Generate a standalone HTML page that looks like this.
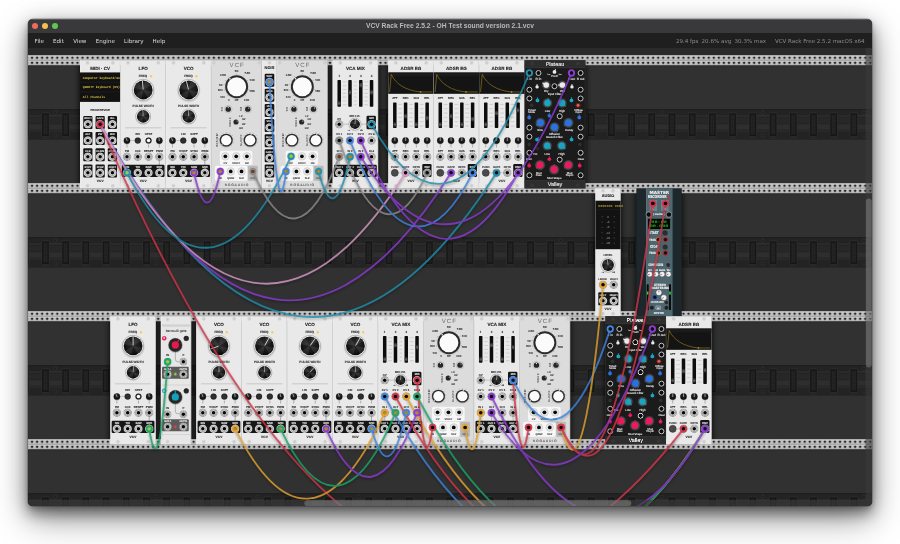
<!DOCTYPE html>
<html lang="en"><head><meta charset="utf-8"><title>VCV Rack Free 2.5.2 - OH Test sound version 2.1.vcv</title>
<style>
html,body{margin:0;padding:0;background:#fff;width:900px;height:544px;overflow:hidden}
.win{position:absolute;left:28px;top:19px;width:844px;height:487.4px;border-radius:5px 5px 4.5px 4.5px;overflow:hidden;background:#2f2f2f;
 box-shadow:0 0 0 .5px rgba(0,0,0,.35),0 8px 12px rgba(0,0,0,.3),0 14px 34px rgba(0,0,0,.36),0 5px 22px rgba(0,0,0,.26),0 2px 5px rgba(0,0,0,.2)}
.title{position:absolute;left:0;top:0;width:844px;height:14px;background:#39393b;z-index:3;border-top:.5px solid #5a5a5c;box-sizing:border-box;will-change:transform}
.title .t{position:absolute;left:0;width:844px;top:2.3px;text-align:center;font:bold 6.7px "Liberation Sans",sans-serif;color:#b9b9bb;letter-spacing:.02px;white-space:nowrap}
.tl{position:absolute;top:3.3px;width:6.2px;height:6.2px;border-radius:50%}
.menu{position:absolute;left:0;top:14px;width:844px;height:15px;background:#1f1f1f;z-index:3;font:5.55px "DejaVu Sans","Liberation Sans",sans-serif;color:#dedede;white-space:nowrap;will-change:transform}
.menu span{position:absolute;top:4.6px}
.menu .r{color:#8d8d8d}
</style></head><body>
<div class="win">
<svg width="844" height="487.4" viewBox="28 19 844 487.4" font-family="Liberation Sans, sans-serif" font-weight="bold" text-anchor="middle" fill="#333" style="position:absolute;left:0;top:0;text-rendering:geometricPrecision;will-change:transform">

<defs>
<radialGradient id="pj"><stop offset="0" stop-color="#d9d9d9"/><stop offset=".46" stop-color="#d9d9d9"/><stop offset=".62" stop-color="#a8a8a8"/><stop offset=".78" stop-color="#d2d2d2"/><stop offset=".9" stop-color="#9a9a9a"/><stop offset="1" stop-color="#bdbdbd"/></radialGradient>
<radialGradient id="pjD"><stop offset="0" stop-color="#e6e6e6"/><stop offset=".46" stop-color="#e6e6e6"/><stop offset=".62" stop-color="#b4b4b4"/><stop offset=".8" stop-color="#e2e2e2"/><stop offset=".93" stop-color="#c4c4c4"/><stop offset="1" stop-color="#8a8a8a"/></radialGradient>
<radialGradient id="shad"><stop offset="0" stop-color="#000" stop-opacity=".55"/><stop offset=".7" stop-color="#000" stop-opacity=".3"/><stop offset="1" stop-color="#000" stop-opacity="0"/></radialGradient>
<radialGradient id="shad2"><stop offset="0" stop-color="#000" stop-opacity=".4"/><stop offset=".8" stop-color="#000" stop-opacity=".16"/><stop offset="1" stop-color="#000" stop-opacity="0"/></radialGradient>
<radialGradient id="kb" cx=".5" cy=".4" r=".6"><stop offset="0" stop-color="#2e2e2e"/><stop offset=".7" stop-color="#161616"/><stop offset="1" stop-color="#080808"/></radialGradient>
<radialGradient id="vk"><stop offset="0" stop-color="#6e6e6e"/><stop offset=".75" stop-color="#4a4a4a"/><stop offset="1" stop-color="#2c2c2c"/></radialGradient>
<linearGradient id="railg" x1="0" y1="0" x2="0" y2="1"><stop offset="0" stop-color="#dedede"/><stop offset=".18" stop-color="#c7c7c7"/><stop offset=".85" stop-color="#bebebe"/><stop offset="1" stop-color="#a4a4a4"/></linearGradient>
<pattern id="rail" x="80" y="0" width="5.05" height="5.06" patternUnits="userSpaceOnUse"><rect width="5.05" height="5.06" fill="url(#railg)"/><rect x="1.48" y="1.45" width="2.1" height="2.1" rx=".55" fill="#262626"/></pattern>
<filter id="msh" x="-20%" y="-10%" width="140%" height="125%"><feGaussianBlur stdDeviation="2.6"/></filter>
<filter id="csh" x="-5%" y="-5%" width="110%" height="115%"><feGaussianBlur stdDeviation="1.2"/></filter>
<g id="mLFO"><rect x="0" y="0" width="135" height="380" rx="0" fill="#e9e9e9" /><rect x="0" y="0" width="1.3" height="380" rx="0" fill="#f1f1f1" /><rect x="133.5" y="0" width="1.5" height="380" rx="0" fill="#bcbcbc" /><use href="#s" x="22.5" y="7.5"/><use href="#s" x="22.5" y="372.5"/><use href="#s" x="112.5" y="7.5"/><use href="#s" x="112.5" y="372.5"/><text x="67.5" y="27.73" font-size="13.52" fill="#1c1c1c" stroke="#1c1c1c" stroke-width=".3">LFO</text><text x="66.8" y="50.69" font-size="9.11" stroke="#333" stroke-width=".3">FREQ</text><circle cx="90.8" cy="47.5" r="4.4" fill="#f6d24a" opacity=".35"/><circle cx="90.8" cy="47.5" r="2.8" fill="#f5c93e" /><text x="67.5" y="137.19" font-size="9.11" stroke="#333" stroke-width=".3">PULSE WIDTH</text><line x1="14" y1="200.5" x2="121" y2="200.5" stroke="#9a9a9a" stroke-width="1.3" /><text x="51.5" y="222.4" font-size="8.28" stroke="#333" stroke-width=".3">INV</text><text x="83.5" y="222.4" font-size="8.28" stroke="#333" stroke-width=".3">OFST</text><line x1="29" y1="238" x2="42" y2="238" stroke="#777" stroke-width="1" /><circle cx="19.5" cy="239.5" r="12" fill="url(#shad)" /><circle cx="19.5" cy="238" r="9.4" fill="url(#kb)" /><line x1="19.5" y1="238" x2="16.56" y2="229.92" stroke="#f0f0f0" stroke-width="1.6" stroke-linecap="round"/><use href="#b" x="51.5" y="238"/><use href="#bl" x="83.5" y="238"/><circle cx="115.5" cy="239.5" r="12" fill="url(#shad)" /><circle cx="115.5" cy="238" r="9.4" fill="url(#kb)" /><line x1="115.5" y1="238" x2="114.01" y2="229.53" stroke="#f0f0f0" stroke-width="1.6" stroke-linecap="round"/><line x1="19.5" y1="250" x2="19.5" y2="259" stroke="#555" stroke-width="1.2" /><line x1="83.5" y1="250" x2="83.5" y2="259" stroke="#555" stroke-width="1.2" /><line x1="115.5" y1="250" x2="115.5" y2="259" stroke="#555" stroke-width="1.2" /><text x="19.5" y="271.6" font-size="8.28" stroke="#333" stroke-width=".3">FM</text><use href="#p" x="19.5" y="286"/><text x="51.5" y="271.6" font-size="8.28" stroke="#333" stroke-width=".3">CLK</text><use href="#p" x="51.5" y="286"/><text x="83.5" y="271.6" font-size="8.28" stroke="#333" stroke-width=".3">RESET</text><use href="#p" x="83.5" y="286"/><text x="115.5" y="271.6" font-size="8.28" stroke="#333" stroke-width=".3">PWM</text><use href="#p" x="115.5" y="286"/><line x1="115.5" y1="298" x2="115.5" y2="311" stroke="#444" stroke-width="1.2" /><rect x="4" y="310" width="127" height="36.5" rx="3.5" fill="#161616" /><text x="19.5" y="319.4" font-size="8" fill="#e8e8e8" stroke="#e8e8e8" stroke-width=".3">SIN</text><use href="#pd" x="19.5" y="334"/><text x="51.5" y="319.4" font-size="8" fill="#e8e8e8" stroke="#e8e8e8" stroke-width=".3">TRI</text><use href="#pd" x="51.5" y="334"/><text x="83.5" y="319.4" font-size="8" fill="#e8e8e8" stroke="#e8e8e8" stroke-width=".3">SAW</text><use href="#pd" x="83.5" y="334"/><text x="115.5" y="319.4" font-size="8" fill="#e8e8e8" stroke="#e8e8e8" stroke-width=".3">SQR</text><use href="#pd" x="115.5" y="334"/><text x="67.5" y="360.32" font-size="9.5" fill="#222" letter-spacing="0.4" stroke="#222" stroke-width=".3">VCV</text></g><g id="mVCO"><rect x="0" y="0" width="135" height="380" rx="0" fill="#e9e9e9" /><rect x="0" y="0" width="1.3" height="380" rx="0" fill="#f1f1f1" /><rect x="133.5" y="0" width="1.5" height="380" rx="0" fill="#bcbcbc" /><use href="#s" x="22.5" y="7.5"/><use href="#s" x="22.5" y="372.5"/><use href="#s" x="112.5" y="7.5"/><use href="#s" x="112.5" y="372.5"/><text x="67.5" y="27.73" font-size="13.52" fill="#1c1c1c" stroke="#1c1c1c" stroke-width=".3">VCO</text><text x="66.8" y="50.69" font-size="9.11" stroke="#333" stroke-width=".3">FREQ</text><circle cx="90.8" cy="47.5" r="4.4" fill="#f6d24a" opacity=".35"/><circle cx="90.8" cy="47.5" r="2.8" fill="#f5c93e" /><text x="67.5" y="137.19" font-size="9.11" stroke="#333" stroke-width=".3">PULSE WIDTH</text><line x1="14" y1="200.5" x2="121" y2="200.5" stroke="#9a9a9a" stroke-width="1.3" /><text x="51.5" y="222.4" font-size="8.28" stroke="#333" stroke-width=".3">LIN</text><text x="83.5" y="222.4" font-size="8.28" stroke="#333" stroke-width=".3">SOFT</text><line x1="29" y1="238" x2="42" y2="238" stroke="#777" stroke-width="1" /><circle cx="19.5" cy="239.5" r="12" fill="url(#shad)" /><circle cx="19.5" cy="238" r="9.4" fill="url(#kb)" /><line x1="19.5" y1="238" x2="16.56" y2="229.92" stroke="#f0f0f0" stroke-width="1.6" stroke-linecap="round"/><use href="#b" x="51.5" y="238"/><use href="#b" x="83.5" y="238"/><circle cx="115.5" cy="239.5" r="12" fill="url(#shad)" /><circle cx="115.5" cy="238" r="9.4" fill="url(#kb)" /><line x1="115.5" y1="238" x2="114.01" y2="229.53" stroke="#f0f0f0" stroke-width="1.6" stroke-linecap="round"/><line x1="19.5" y1="250" x2="19.5" y2="259" stroke="#555" stroke-width="1.2" /><line x1="83.5" y1="250" x2="83.5" y2="259" stroke="#555" stroke-width="1.2" /><line x1="115.5" y1="250" x2="115.5" y2="259" stroke="#555" stroke-width="1.2" /><text x="19.5" y="271.6" font-size="8.28" stroke="#333" stroke-width=".3">FM</text><use href="#p" x="19.5" y="286"/><text x="51.5" y="271.6" font-size="8.28" stroke="#333" stroke-width=".3">V/OCT</text><use href="#p" x="51.5" y="286"/><text x="83.5" y="271.6" font-size="8.28" stroke="#333" stroke-width=".3">SYNC</text><use href="#p" x="83.5" y="286"/><text x="115.5" y="271.6" font-size="8.28" stroke="#333" stroke-width=".3">PWM</text><use href="#p" x="115.5" y="286"/><line x1="115.5" y1="298" x2="115.5" y2="311" stroke="#444" stroke-width="1.2" /><rect x="4" y="310" width="127" height="36.5" rx="3.5" fill="#161616" /><text x="19.5" y="319.4" font-size="8" fill="#e8e8e8" stroke="#e8e8e8" stroke-width=".3">SIN</text><use href="#pd" x="19.5" y="334"/><text x="51.5" y="319.4" font-size="8" fill="#e8e8e8" stroke="#e8e8e8" stroke-width=".3">TRI</text><use href="#pd" x="51.5" y="334"/><text x="83.5" y="319.4" font-size="8" fill="#e8e8e8" stroke="#e8e8e8" stroke-width=".3">SAW</text><use href="#pd" x="83.5" y="334"/><text x="115.5" y="319.4" font-size="8" fill="#e8e8e8" stroke="#e8e8e8" stroke-width=".3">SQR</text><use href="#pd" x="115.5" y="334"/><text x="67.5" y="360.32" font-size="9.5" fill="#222" letter-spacing="0.4" stroke="#222" stroke-width=".3">VCV</text></g><g id="mBVCF"><rect x="0" y="0" width="150" height="380" rx="0" fill="#dcdcdc" /><rect x="0" y="0" width="1.2" height="380" rx="0" fill="#eeeeee" /><rect x="148.5" y="0" width="1.5" height="380" rx="0" fill="#adadad" /><use href="#s" x="7.5" y="7.5"/><use href="#s" x="7.5" y="372.5"/><use href="#s" x="142.5" y="7.5"/><use href="#s" x="142.5" y="372.5"/><text x="76.5" y="18.8" font-size="18" font-weight="normal" fill="#6a6a6a" letter-spacing="3">VCF</text><line x1="49.54" y1="103.86" x2="47.07" y2="106.33" stroke="#555" stroke-width="1" /><text x="52" y="121.9" font-size="8.28" fill="#444" stroke="#444" stroke-width=".3">0</text><line x1="40.23" y1="87.72" x2="36.85" y2="88.62" stroke="#555" stroke-width="1" /><text x="33" y="111" font-size="8.28" fill="#444" stroke="#444" stroke-width=".3">100</text><line x1="39.55" y1="72.15" x2="36.1" y2="71.54" stroke="#555" stroke-width="1" /><text x="26.5" y="91.2" font-size="8.28" fill="#444" stroke="#444" stroke-width=".3">500</text><line x1="43.21" y1="61.5" x2="40.12" y2="59.86" stroke="#555" stroke-width="1" /><text x="28" y="74.9" font-size="8.28" fill="#444" stroke="#444" stroke-width=".3">1K</text><line x1="52.84" y1="50.03" x2="50.68" y2="47.27" stroke="#555" stroke-width="1" /><text x="34.4" y="46.7" font-size="8.28" fill="#444" stroke="#444" stroke-width=".3">2.5K</text><line x1="75" y1="42.4" x2="75" y2="38.9" stroke="#555" stroke-width="1" /><text x="75" y="33.3" font-size="8.28" fill="#444" stroke="#444" stroke-width=".3">5K</text><line x1="94.61" y1="48.21" x2="96.51" y2="45.27" stroke="#555" stroke-width="1" /><text x="107" y="40.3" font-size="8.28" fill="#444" stroke="#444" stroke-width=".3">7.5K</text><line x1="106.18" y1="60.4" x2="109.21" y2="58.65" stroke="#555" stroke-width="1" /><text x="121" y="60.5" font-size="8.28" fill="#444" stroke="#444" stroke-width=".3">10K</text><line x1="110.08" y1="86.5" x2="113.49" y2="87.29" stroke="#555" stroke-width="1" /><text x="121" y="95.2" font-size="8.28" fill="#444" stroke="#444" stroke-width=".3">15K</text><line x1="100.46" y1="103.86" x2="102.93" y2="106.33" stroke="#555" stroke-width="1" /><text x="104.7" y="121.9" font-size="8.28" fill="#444" stroke="#444" stroke-width=".3">20K</text><text x="75" y="121.9" font-size="8.28" fill="#444" stroke="#444" stroke-width=".3">HZ</text><circle cx="75" cy="79.9" r="37" fill="url(#shad)" /><circle cx="75" cy="78.4" r="34" fill="#2b2b2b" /><circle cx="75" cy="78.4" r="28.2" fill="#fbfbfb" /><circle cx="55.01" cy="54.58" r="2.32" fill="#fff" /><text transform="translate(33 145) rotate(-90)" font-size="8.75" fill="#444" >CV</text><circle cx="50" cy="145" r="11.5" fill="none" stroke="#8a8a8a" stroke-width="0.9"/><circle cx="50" cy="145" r="8" fill="#262626" /><circle cx="50" cy="140.4" r="1.7" fill="#fff" /><text transform="translate(92 145) rotate(-90)" font-size="8.75" fill="#444" >FM</text><circle cx="108" cy="145" r="11.5" fill="none" stroke="#8a8a8a" stroke-width="0.9"/><circle cx="108" cy="145" r="8" fill="#262626" /><circle cx="110.96" cy="141.48" r="1.7" fill="#fff" /><text transform="translate(59 183) rotate(-90)" font-size="8.25" fill="#444" letter-spacing="1">MODE</text><circle cx="73" cy="183" r="7.6" fill="#262626" /><circle cx="76.5" cy="180" r="1.5" fill="#fff" /><text x="88" y="168.7" font-size="7.73" fill="#444" stroke="#444" stroke-width=".3">LP</text><text x="96" y="178.7" font-size="7.73" fill="#444" stroke="#444" stroke-width=".3">HP</text><text x="96" y="191.7" font-size="7.73" fill="#444" stroke="#444" stroke-width=".3">BP</text><text x="88" y="202.7" font-size="7.73" fill="#444" stroke="#444" stroke-width=".3">BR</text><text transform="translate(20 237) rotate(-90)" font-size="8.5" fill="#444" letter-spacing="1.2">RES/BW</text><text transform="translate(91 237) rotate(-90)" font-size="8.5" fill="#444" letter-spacing="1.2">SLOPE</text><line x1="28.8" y1="252.2" x2="27.03" y2="253.97" stroke="#555" stroke-width="0.9" /><line x1="23.55" y1="243.64" x2="21.17" y2="244.42" stroke="#555" stroke-width="0.9" /><line x1="22.76" y1="233.64" x2="20.3" y2="233.25" stroke="#555" stroke-width="0.9" /><line x1="26.61" y1="224.36" x2="24.58" y2="222.89" stroke="#555" stroke-width="0.9" /><line x1="34.24" y1="217.84" x2="33.1" y2="215.62" stroke="#555" stroke-width="0.9" /><line x1="44" y1="215.5" x2="44" y2="213" stroke="#555" stroke-width="0.9" /><line x1="53.76" y1="217.84" x2="54.9" y2="215.62" stroke="#555" stroke-width="0.9" /><line x1="61.39" y1="224.36" x2="63.42" y2="222.89" stroke="#555" stroke-width="0.9" /><line x1="65.24" y1="233.64" x2="67.7" y2="233.25" stroke="#555" stroke-width="0.9" /><line x1="64.45" y1="243.64" x2="66.83" y2="244.42" stroke="#555" stroke-width="0.9" /><line x1="59.2" y1="252.2" x2="60.97" y2="253.97" stroke="#555" stroke-width="0.9" /><line x1="99.8" y1="252.2" x2="98.03" y2="253.97" stroke="#555" stroke-width="0.9" /><line x1="94.55" y1="243.64" x2="92.17" y2="244.42" stroke="#555" stroke-width="0.9" /><line x1="93.76" y1="233.64" x2="91.3" y2="233.25" stroke="#555" stroke-width="0.9" /><line x1="97.61" y1="224.36" x2="95.58" y2="222.89" stroke="#555" stroke-width="0.9" /><line x1="105.24" y1="217.84" x2="104.1" y2="215.62" stroke="#555" stroke-width="0.9" /><line x1="115" y1="215.5" x2="115" y2="213" stroke="#555" stroke-width="0.9" /><line x1="124.76" y1="217.84" x2="125.9" y2="215.62" stroke="#555" stroke-width="0.9" /><line x1="132.39" y1="224.36" x2="134.42" y2="222.89" stroke="#555" stroke-width="0.9" /><line x1="136.24" y1="233.64" x2="138.7" y2="233.25" stroke="#555" stroke-width="0.9" /><line x1="135.45" y1="243.64" x2="137.83" y2="244.42" stroke="#555" stroke-width="0.9" /><line x1="130.2" y1="252.2" x2="131.97" y2="253.97" stroke="#555" stroke-width="0.9" /><circle cx="44" cy="238.5" r="22.2" fill="url(#shad)" /><circle cx="44" cy="237" r="19.2" fill="#2b2b2b" /><circle cx="44" cy="237" r="15.2" fill="#fbfbfb" /><circle cx="31.84" cy="249.16" r="1.6" fill="#fff" /><circle cx="115" cy="238.5" r="22.2" fill="url(#shad)" /><circle cx="115" cy="237" r="19.2" fill="#2b2b2b" /><circle cx="115" cy="237" r="15.2" fill="#fbfbfb" /><circle cx="117.99" cy="220.06" r="1.6" fill="#fff" /><rect x="25.2" y="268.6" width="96.5" height="42.2" rx="5" fill="#f7f7f7" /><rect x="10.4" y="313.2" width="96.5" height="44.5" rx="5" fill="#f7f7f7" /><rect x="108.3" y="313.2" width="29.7" height="44.5" rx="4" fill="#b9b9b9" /><use href="#bp" x="41.5" y="285"/><text x="41.5" y="307.2" font-size="7.73" fill="#444" stroke="#444" stroke-width=".3">CV</text><use href="#bp" x="73.7" y="285"/><text x="73.7" y="307.2" font-size="7.73" fill="#444" stroke="#444" stroke-width=".3">V/OCT</text><use href="#bp" x="105.4" y="285"/><text x="105.4" y="307.2" font-size="7.73" fill="#444" stroke="#444" stroke-width=".3">FM</text><use href="#bp" x="26.4" y="330"/><text x="26.4" y="353" font-size="7.73" fill="#444" stroke="#444" stroke-width=".3">IN</text><use href="#bp" x="57.4" y="330"/><text x="57.4" y="353" font-size="7.73" fill="#444" stroke="#444" stroke-width=".3">Q/BW</text><use href="#bp" x="89.5" y="330"/><text x="89.5" y="353" font-size="7.73" fill="#444" stroke="#444" stroke-width=".3">SLP</text><use href="#bp" x="123.1" y="330"/><text x="123.1" y="353" font-size="7.73" fill="#666" stroke="#666" stroke-width=".3">OUT</text><text x="76" y="372.5" font-size="10" font-weight="normal" fill="#5a5a5a" letter-spacing="2.4" stroke="#5a5a5a" stroke-width=".3">BOGAUDIO</text></g><g id="mVCAMIX"><rect x="0" y="0" width="135" height="380" rx="0" fill="#e9e9e9" /><rect x="0" y="0" width="1.3" height="380" rx="0" fill="#f1f1f1" /><rect x="133.5" y="0" width="1.5" height="380" rx="0" fill="#bcbcbc" /><use href="#s" x="22.5" y="7.5"/><use href="#s" x="22.5" y="372.5"/><use href="#s" x="112.5" y="7.5"/><use href="#s" x="112.5" y="372.5"/><text x="67.5" y="27.73" font-size="13.52" fill="#1c1c1c" stroke="#1c1c1c" stroke-width=".3">VCA MIX</text><text x="19.5" y="50.64" font-size="8.97" stroke="#333" stroke-width=".3">1</text><text x="51.5" y="50.64" font-size="8.97" stroke="#333" stroke-width=".3">2</text><text x="83.5" y="50.64" font-size="8.97" stroke="#333" stroke-width=".3">3</text><text x="115.5" y="50.64" font-size="8.97" stroke="#333" stroke-width=".3">4</text><line x1="30" y1="64" x2="41" y2="64" stroke="#aeaeae" stroke-width="1.4" /><line x1="30" y1="75.33" x2="41" y2="75.33" stroke="#aeaeae" stroke-width="1.4" /><line x1="30" y1="86.67" x2="41" y2="86.67" stroke="#aeaeae" stroke-width="1.4" /><line x1="30" y1="98" x2="41" y2="98" stroke="#aeaeae" stroke-width="1.4" /><line x1="30" y1="109.33" x2="41" y2="109.33" stroke="#aeaeae" stroke-width="1.4" /><line x1="30" y1="120.67" x2="41" y2="120.67" stroke="#aeaeae" stroke-width="1.4" /><line x1="30" y1="132" x2="41" y2="132" stroke="#aeaeae" stroke-width="1.4" /><line x1="94" y1="64" x2="105" y2="64" stroke="#aeaeae" stroke-width="1.4" /><line x1="94" y1="75.33" x2="105" y2="75.33" stroke="#aeaeae" stroke-width="1.4" /><line x1="94" y1="86.67" x2="105" y2="86.67" stroke="#aeaeae" stroke-width="1.4" /><line x1="94" y1="98" x2="105" y2="98" stroke="#aeaeae" stroke-width="1.4" /><line x1="94" y1="109.33" x2="105" y2="109.33" stroke="#aeaeae" stroke-width="1.4" /><line x1="94" y1="120.67" x2="105" y2="120.67" stroke="#aeaeae" stroke-width="1.4" /><line x1="94" y1="132" x2="105" y2="132" stroke="#aeaeae" stroke-width="1.4" /><line x1="64" y1="64" x2="71" y2="64" stroke="#aeaeae" stroke-width="1.4" /><line x1="64" y1="75.33" x2="71" y2="75.33" stroke="#aeaeae" stroke-width="1.4" /><line x1="64" y1="86.67" x2="71" y2="86.67" stroke="#aeaeae" stroke-width="1.4" /><line x1="64" y1="98" x2="71" y2="98" stroke="#aeaeae" stroke-width="1.4" /><line x1="64" y1="109.33" x2="71" y2="109.33" stroke="#aeaeae" stroke-width="1.4" /><line x1="64" y1="120.67" x2="71" y2="120.67" stroke="#aeaeae" stroke-width="1.4" /><line x1="64" y1="132" x2="71" y2="132" stroke="#aeaeae" stroke-width="1.4" /><text x="66" y="167.9" font-size="8.28" stroke="#333" stroke-width=".3">MIX LVL</text><text x="19.5" y="175.9" font-size="8.28" stroke="#333" stroke-width=".3">CV</text><line x1="30" y1="189.5" x2="104" y2="189.5" stroke="#8a8a8a" stroke-width="1.2" /><use href="#p" x="19.5" y="189.5"/><circle cx="66.3" cy="190.67" r="20.52" fill="url(#shad2)" /><circle cx="66.3" cy="189.5" r="17.8" fill="#fcfcfc" stroke="#555" stroke-width="1"/><circle cx="66.3" cy="189.5" r="14.6" fill="url(#kb)" /><path d="M66.3 189.5 L80.63 192.29 A14.6 14.6 0 0 1 73.82 202.01 Z" fill="#fff" opacity=".09"/><path d="M66.3 189.5 L63.51 203.83 A14.6 14.6 0 0 1 53.79 197.02 Z" fill="#fff" opacity=".09"/><path d="M66.3 189.5 L51.97 186.71 A14.6 14.6 0 0 1 58.78 176.99 Z" fill="#fff" opacity=".09"/><path d="M66.3 189.5 L69.09 175.17 A14.6 14.6 0 0 1 78.81 181.98 Z" fill="#fff" opacity=".09"/><line x1="66.43" y1="188.05" x2="67.48" y2="175.97" stroke="#f4f4f4" stroke-width="1.4" stroke-linecap="round"/><text x="48" y="208.41" font-size="6.9" stroke="#333" stroke-width=".3">-∞</text><text x="85" y="208.41" font-size="6.9" stroke="#333" stroke-width=".3">+6</text><rect x="100.5" y="164.8" width="28" height="39.6" rx="3.5" fill="#161616" /><text x="115.5" y="175.3" font-size="8" fill="#e8e8e8" stroke="#e8e8e8" stroke-width=".3">MIX</text><use href="#pd" x="115.5" y="189.5"/><text x="19.5" y="222.2" font-size="8" stroke="#333" stroke-width=".3">CV 1</text><use href="#p" x="19.5" y="238"/><text x="19.5" y="271.5" font-size="8" stroke="#333" stroke-width=".3">IN 1</text><use href="#p" x="19.5" y="286"/><line x1="19.5" y1="298" x2="19.5" y2="311" stroke="#666" stroke-width="1" /><text x="51.5" y="222.2" font-size="8" stroke="#333" stroke-width=".3">CV 2</text><use href="#p" x="51.5" y="238"/><text x="51.5" y="271.5" font-size="8" stroke="#333" stroke-width=".3">IN 2</text><use href="#p" x="51.5" y="286"/><line x1="51.5" y1="298" x2="51.5" y2="311" stroke="#666" stroke-width="1" /><text x="83.5" y="222.2" font-size="8" stroke="#333" stroke-width=".3">CV 3</text><use href="#p" x="83.5" y="238"/><text x="83.5" y="271.5" font-size="8" stroke="#333" stroke-width=".3">IN 3</text><use href="#p" x="83.5" y="286"/><line x1="83.5" y1="298" x2="83.5" y2="311" stroke="#666" stroke-width="1" /><text x="115.5" y="222.2" font-size="8" stroke="#333" stroke-width=".3">CV 4</text><use href="#p" x="115.5" y="238"/><text x="115.5" y="271.5" font-size="8" stroke="#333" stroke-width=".3">IN 4</text><use href="#p" x="115.5" y="286"/><line x1="115.5" y1="298" x2="115.5" y2="311" stroke="#666" stroke-width="1" /><rect x="4" y="310" width="127" height="36.5" rx="3.5" fill="#161616" /><text x="19.5" y="319.3" font-size="7.73" fill="#e8e8e8" stroke="#e8e8e8" stroke-width=".3">OUT 1</text><use href="#pd" x="19.5" y="334"/><text x="51.5" y="319.3" font-size="7.73" fill="#e8e8e8" stroke="#e8e8e8" stroke-width=".3">OUT 2</text><use href="#pd" x="51.5" y="334"/><text x="83.5" y="319.3" font-size="7.73" fill="#e8e8e8" stroke="#e8e8e8" stroke-width=".3">OUT 3</text><use href="#pd" x="83.5" y="334"/><text x="115.5" y="319.3" font-size="7.73" fill="#e8e8e8" stroke="#e8e8e8" stroke-width=".3">OUT 4</text><use href="#pd" x="115.5" y="334"/><text x="67.5" y="360.32" font-size="9.5" fill="#222" letter-spacing="0.4" stroke="#222" stroke-width=".3">VCV</text></g><g id="mADSR"><rect x="0" y="0" width="135" height="380" rx="0" fill="#e9e9e9" /><rect x="0" y="0" width="1.3" height="380" rx="0" fill="#f1f1f1" /><rect x="133.5" y="0" width="1.5" height="380" rx="0" fill="#bcbcbc" /><use href="#s" x="22.5" y="7.5"/><use href="#s" x="22.5" y="372.5"/><use href="#s" x="112.5" y="7.5"/><use href="#s" x="112.5" y="372.5"/><text x="67.5" y="27.73" font-size="13.52" fill="#1c1c1c" stroke="#1c1c1c" stroke-width=".3">ADSR EG</text><rect x="0" y="36" width="135" height="63.5" rx="0" fill="#141414" /><rect x="0" y="36" width="135" height="12" rx="0" fill="#1f1f1f" opacity=".6"/><path d="M4 94 L9 42 C 22 70 52 90 96 94 L131 94" fill="none" stroke="#a8891e" stroke-width="1.7"/><circle cx="96" cy="94" r="2.6" fill="#a8891e" /><text x="19.5" y="114.9" font-size="8.28" stroke="#333" stroke-width=".3">ATT</text><text x="51.5" y="114.9" font-size="8.28" stroke="#333" stroke-width=".3">DEC</text><text x="83.5" y="114.9" font-size="8.28" stroke="#333" stroke-width=".3">SUS</text><text x="115.5" y="114.9" font-size="8.28" stroke="#333" stroke-width=".3">REL</text><line x1="30" y1="131" x2="41" y2="131" stroke="#aeaeae" stroke-width="1.4" /><line x1="30" y1="143.8" x2="41" y2="143.8" stroke="#aeaeae" stroke-width="1.4" /><line x1="30" y1="156.6" x2="41" y2="156.6" stroke="#aeaeae" stroke-width="1.4" /><line x1="30" y1="169.4" x2="41" y2="169.4" stroke="#aeaeae" stroke-width="1.4" /><line x1="30" y1="182.2" x2="41" y2="182.2" stroke="#aeaeae" stroke-width="1.4" /><line x1="30" y1="195" x2="41" y2="195" stroke="#aeaeae" stroke-width="1.4" /><line x1="62" y1="131" x2="73" y2="131" stroke="#aeaeae" stroke-width="1.4" /><line x1="62" y1="143.8" x2="73" y2="143.8" stroke="#aeaeae" stroke-width="1.4" /><line x1="62" y1="156.6" x2="73" y2="156.6" stroke="#aeaeae" stroke-width="1.4" /><line x1="62" y1="169.4" x2="73" y2="169.4" stroke="#aeaeae" stroke-width="1.4" /><line x1="62" y1="182.2" x2="73" y2="182.2" stroke="#aeaeae" stroke-width="1.4" /><line x1="62" y1="195" x2="73" y2="195" stroke="#aeaeae" stroke-width="1.4" /><line x1="94" y1="131" x2="105" y2="131" stroke="#aeaeae" stroke-width="1.4" /><line x1="94" y1="143.8" x2="105" y2="143.8" stroke="#aeaeae" stroke-width="1.4" /><line x1="94" y1="156.6" x2="105" y2="156.6" stroke="#aeaeae" stroke-width="1.4" /><line x1="94" y1="169.4" x2="105" y2="169.4" stroke="#aeaeae" stroke-width="1.4" /><line x1="94" y1="182.2" x2="105" y2="182.2" stroke="#aeaeae" stroke-width="1.4" /><line x1="94" y1="195" x2="105" y2="195" stroke="#aeaeae" stroke-width="1.4" /><circle cx="19.5" cy="239.5" r="12" fill="url(#shad)" /><circle cx="19.5" cy="238" r="9.4" fill="url(#kb)" /><line x1="19.5" y1="238" x2="19.5" y2="229.4" stroke="#f0f0f0" stroke-width="1.6" stroke-linecap="round"/><line x1="19.5" y1="250" x2="19.5" y2="259" stroke="#555" stroke-width="1.2" /><circle cx="51.5" cy="239.5" r="12" fill="url(#shad)" /><circle cx="51.5" cy="238" r="9.4" fill="url(#kb)" /><line x1="51.5" y1="238" x2="51.5" y2="229.4" stroke="#f0f0f0" stroke-width="1.6" stroke-linecap="round"/><line x1="51.5" y1="250" x2="51.5" y2="259" stroke="#555" stroke-width="1.2" /><circle cx="83.5" cy="239.5" r="12" fill="url(#shad)" /><circle cx="83.5" cy="238" r="9.4" fill="url(#kb)" /><line x1="83.5" y1="238" x2="83.5" y2="229.4" stroke="#f0f0f0" stroke-width="1.6" stroke-linecap="round"/><line x1="83.5" y1="250" x2="83.5" y2="259" stroke="#555" stroke-width="1.2" /><circle cx="115.5" cy="239.5" r="12" fill="url(#shad)" /><circle cx="115.5" cy="238" r="9.4" fill="url(#kb)" /><line x1="115.5" y1="238" x2="115.5" y2="229.4" stroke="#f0f0f0" stroke-width="1.6" stroke-linecap="round"/><line x1="115.5" y1="250" x2="115.5" y2="259" stroke="#555" stroke-width="1.2" /><text x="19.5" y="271.6" font-size="8.28" stroke="#333" stroke-width=".3">ATT</text><use href="#p" x="19.5" y="286"/><text x="51.5" y="271.6" font-size="8.28" stroke="#333" stroke-width=".3">DEC</text><use href="#p" x="51.5" y="286"/><text x="83.5" y="271.6" font-size="8.28" stroke="#333" stroke-width=".3">SUS</text><use href="#p" x="83.5" y="286"/><text x="115.5" y="271.6" font-size="8.28" stroke="#333" stroke-width=".3">REL</text><use href="#p" x="115.5" y="286"/><rect x="101" y="308" width="27.5" height="38.5" rx="3.5" fill="#161616" /><text x="19.5" y="318.8" font-size="8" stroke="#333" stroke-width=".3">PUSH</text><text x="51.5" y="318.8" font-size="8" stroke="#333" stroke-width=".3">GATE</text><text x="83.5" y="318.8" font-size="8" stroke="#333" stroke-width=".3">RETR</text><text x="115.5" y="318.8" font-size="8" fill="#e8e8e8" stroke="#e8e8e8" stroke-width=".3">ENV</text><circle cx="19.5" cy="335" r="12" fill="url(#shad)" /><circle cx="19.5" cy="334" r="10.4" fill="#4a4a4a" stroke="#2a2a2a" stroke-width="1.4"/><line x1="31" y1="334" x2="40" y2="334" stroke="#777" stroke-width="1" /><line x1="63" y1="334" x2="72" y2="334" stroke="#999" stroke-width="1" /><use href="#p" x="51.5" y="334"/><use href="#p" x="83.5" y="334"/><use href="#pd" x="115.5" y="334"/><text x="67.5" y="360.32" font-size="9.5" fill="#222" letter-spacing="0.4" stroke="#222" stroke-width=".3">VCV</text></g><g id="mPLAT"><rect x="0" y="0" width="180" height="380" rx="0" fill="#1b1b1b" /><rect x="0" y="0" width="180" height="22.3" rx="0" fill="#2d2d2d" /><rect x="0" y="357" width="180" height="23" rx="0" fill="#2d2d2d" /><line x1="0" y1="22.3" x2="180" y2="22.3" stroke="#555" stroke-width="1" /><line x1="0" y1="357" x2="180" y2="357" stroke="#555" stroke-width="1" /><rect x="0" y="0" width="1.3" height="380" rx="0" fill="#3a3a3a" /><rect x="178.7" y="0" width="1.3" height="380" rx="0" fill="#3a3a3a" /><use href="#sd" x="22.5" y="9.5"/><use href="#sd" x="22.5" y="370.5"/><use href="#sd" x="157.5" y="9.5"/><use href="#sd" x="157.5" y="370.5"/><text x="90" y="17.2" font-size="16.3" font-weight="normal" fill="#f0f0f0" stroke="#f0f0f0" stroke-width=".35">Plateau</text><text x="90" y="373.1" font-size="16" font-weight="normal" fill="#f0f0f0" stroke="#f0f0f0" stroke-width=".35">Valley</text><use href="#vp" x="14" y="37.7"/><use href="#vp" x="41" y="37.7"/><use href="#vp" x="139" y="37.7"/><use href="#vp" x="166" y="37.7"/><use href="#vp" x="14" y="87.3"/><use href="#vp" x="166" y="87.3"/><use href="#vp" x="14" y="113.4"/><use href="#vp" x="166" y="113.4"/><use href="#vp" x="14" y="200"/><use href="#vp" x="166" y="200"/><use href="#vp" x="14" y="226.8"/><use href="#vp" x="166" y="226.8"/><use href="#vp" x="14" y="274.6"/><use href="#vp" x="166" y="274.6"/><use href="#vp" x="14" y="341.4"/><use href="#vp" x="166" y="341.4"/><use href="#vp" x="88.5" y="77"/><use href="#vp" x="104" y="166"/><use href="#vp" x="104" y="295"/><text x="14" y="57.38" font-size="9.66" font-weight="normal" fill="#e6e6e6" stroke="#e6e6e6" stroke-width=".3">L in</text><text x="41" y="57.38" font-size="9.66" font-weight="normal" fill="#e6e6e6" stroke="#e6e6e6" stroke-width=".3">R in</text><text x="139" y="57.38" font-size="9.66" font-weight="normal" fill="#e6e6e6" stroke="#e6e6e6" stroke-width=".3">L out</text><text x="166" y="57.38" font-size="9.66" font-weight="normal" fill="#e6e6e6" stroke="#e6e6e6" stroke-width=".3">R out</text><circle cx="88.5" cy="34.7" r="5.6" fill="#ececec" /><line x1="88.5" y1="34.7" x2="91.27" y2="27.09" stroke="#ececec" stroke-width="2.6" stroke-linecap="round"/><text x="88.5" y="50.9" font-size="8.28" font-weight="normal" fill="#e6e6e6" stroke="#e6e6e6" stroke-width=".3">PreD</text><text x="72" y="44.03" font-size="5.8" font-weight="normal" fill="#e6e6e6" stroke="#e6e6e6" stroke-width=".3">Inv</text><text x="105" y="44.03" font-size="5.8" font-weight="normal" fill="#e6e6e6" stroke="#e6e6e6" stroke-width=".3">Lrs</text><circle cx="64" cy="73.3" r="13.8" fill="url(#vk)" /><circle cx="64" cy="73.3" r="8.4" fill="#ececec" /><line x1="64" y1="73.3" x2="53.61" y2="67.3" stroke="#ececec" stroke-width="3.2" stroke-linecap="round"/><circle cx="112" cy="73.3" r="13.8" fill="url(#vk)" /><circle cx="112" cy="73.3" r="8.4" fill="#ececec" /><line x1="112" y1="73.3" x2="100" y2="73.3" stroke="#ececec" stroke-width="3.2" stroke-linecap="round"/><circle cx="36.8" cy="79" r="5" fill="#ececec" /><line x1="36.8" y1="79" x2="36.8" y2="71.5" stroke="#ececec" stroke-width="2.6" stroke-linecap="round"/><circle cx="140.4" cy="79" r="5" fill="#ececec" /><line x1="140.4" y1="79" x2="140.4" y2="71.5" stroke="#ececec" stroke-width="2.6" stroke-linecap="round"/><text x="64" y="94.4" font-size="8.28" font-weight="normal" fill="#e6e6e6" stroke="#e6e6e6" stroke-width=".3">Dry</text><text x="112" y="94.4" font-size="8.28" font-weight="normal" fill="#e6e6e6" stroke="#e6e6e6" stroke-width=".3">Wet</text><text x="88.5" y="104.49" font-size="8.56" font-weight="normal" fill="#e6e6e6" stroke="#e6e6e6" stroke-width=".3">Input Filter</text><circle cx="38" cy="119" r="5.6" fill="#17a6c4" /><line x1="38" y1="119" x2="38" y2="110.9" stroke="#17a6c4" stroke-width="2.6" stroke-linecap="round"/><circle cx="139" cy="119" r="5.6" fill="#17a6c4" /><line x1="139" y1="119" x2="139" y2="110.9" stroke="#17a6c4" stroke-width="2.6" stroke-linecap="round"/><circle cx="67.7" cy="126.8" r="14.8" fill="url(#vk)" /><circle cx="67.7" cy="126.8" r="9.4" fill="#17a6c4" /><line x1="67.7" y1="126.8" x2="69.96" y2="114" stroke="#17a6c4" stroke-width="3.2" stroke-linecap="round"/><circle cx="110.7" cy="126.8" r="14.8" fill="url(#vk)" /><circle cx="110.7" cy="126.8" r="9.4" fill="#17a6c4" /><line x1="110.7" y1="126.8" x2="120.66" y2="135.16" stroke="#17a6c4" stroke-width="3.2" stroke-linecap="round"/><circle cx="20.8" cy="133.6" r="4.6" fill="#2e2e2e" stroke="#444" stroke-width="1"/><circle cx="158.5" cy="133.6" r="7.5" fill="#e03030" opacity=".35"/><circle cx="158.5" cy="133.6" r="4.2" fill="#ff5a4a" /><text x="21" y="150.8" font-size="8" font-weight="normal" fill="#e6e6e6" stroke="#e6e6e6" stroke-width=".3">Tuned</text><text x="21" y="157.8" font-size="8" font-weight="normal" fill="#e6e6e6" stroke="#e6e6e6" stroke-width=".3">Mode</text><text x="67.7" y="154.59" font-size="8.83" font-weight="normal" fill="#e6e6e6" stroke="#e6e6e6" stroke-width=".3">Low</text><text x="110.7" y="154.59" font-size="8.83" font-weight="normal" fill="#e6e6e6" stroke="#e6e6e6" stroke-width=".3">High</text><text x="160" y="150.8" font-size="8" font-weight="normal" fill="#e6e6e6" stroke="#e6e6e6" stroke-width=".3">Diffuse</text><text x="160" y="157.8" font-size="8" font-weight="normal" fill="#e6e6e6" stroke="#e6e6e6" stroke-width=".3">Input</text><circle cx="13.4" cy="169.8" r="5.6" fill="#2a72e2" /><line x1="13.4" y1="169.8" x2="13.4" y2="161.7" stroke="#2a72e2" stroke-width="2.6" stroke-linecap="round"/><circle cx="73.3" cy="164.8" r="5.4" fill="#2a72e2" /><line x1="73.3" y1="164.8" x2="73.3" y2="156.9" stroke="#2a72e2" stroke-width="2.6" stroke-linecap="round"/><circle cx="162" cy="169.8" r="5.6" fill="#2a72e2" /><line x1="162" y1="169.8" x2="162" y2="161.7" stroke="#2a72e2" stroke-width="2.6" stroke-linecap="round"/><circle cx="46.9" cy="185.5" r="15.6" fill="url(#vk)" /><circle cx="46.9" cy="185.5" r="10.2" fill="#2a72e2" /><line x1="46.9" y1="185.5" x2="34.95" y2="192.4" stroke="#2a72e2" stroke-width="3.2" stroke-linecap="round"/><circle cx="130" cy="185.5" r="15.6" fill="url(#vk)" /><circle cx="130" cy="185.5" r="10.2" fill="#2a72e2" /><line x1="130" y1="185.5" x2="118.05" y2="192.4" stroke="#2a72e2" stroke-width="3.2" stroke-linecap="round"/><circle cx="88.5" cy="198.9" r="15.6" fill="url(#vk)" /><circle cx="88.5" cy="198.9" r="10.2" fill="#2a72e2" /><line x1="88.5" y1="198.9" x2="97.37" y2="209.47" stroke="#2a72e2" stroke-width="3.2" stroke-linecap="round"/><text x="46" y="210.99" font-size="8.56" font-weight="normal" fill="#e6e6e6" stroke="#e6e6e6" stroke-width=".3">Size</text><text x="132" y="210.99" font-size="8.56" font-weight="normal" fill="#e6e6e6" stroke="#e6e6e6" stroke-width=".3">Decay</text><text x="88.5" y="222.49" font-size="8.56" font-weight="normal" fill="#e6e6e6" stroke="#e6e6e6" stroke-width=".3">Diffusion</text><text x="88.5" y="230.99" font-size="8.56" font-weight="normal" fill="#e6e6e6" stroke="#e6e6e6" stroke-width=".3">Reverb Filter</text><circle cx="36.8" cy="235.4" r="5.6" fill="#17a6c4" /><line x1="36.8" y1="235.4" x2="40.85" y2="228.39" stroke="#17a6c4" stroke-width="2.6" stroke-linecap="round"/><circle cx="139.2" cy="235.4" r="5.6" fill="#17a6c4" /><line x1="139.2" y1="235.4" x2="139.2" y2="227.3" stroke="#17a6c4" stroke-width="2.6" stroke-linecap="round"/><circle cx="66.8" cy="253.5" r="14.8" fill="url(#vk)" /><circle cx="66.8" cy="253.5" r="9.4" fill="#17a6c4" /><line x1="66.8" y1="253.5" x2="76.76" y2="261.86" stroke="#17a6c4" stroke-width="3.2" stroke-linecap="round"/><circle cx="109.8" cy="253.5" r="14.8" fill="url(#vk)" /><circle cx="109.8" cy="253.5" r="9.4" fill="#17a6c4" /><line x1="109.8" y1="253.5" x2="119.76" y2="261.86" stroke="#17a6c4" stroke-width="3.2" stroke-linecap="round"/><circle cx="13.4" cy="250" r="4.2" fill="#2e2e2e" stroke="#444" stroke-width="1"/><circle cx="164" cy="250" r="4.2" fill="#2e2e2e" stroke="#444" stroke-width="1"/><circle cx="38" cy="262" r="4.2" fill="#2e2e2e" stroke="#444" stroke-width="1"/><text x="32" y="281.9" font-size="8.28" font-weight="normal" fill="#e6e6e6" stroke="#e6e6e6" stroke-width=".3">Frz</text><text x="66.8" y="282.09" font-size="8.83" font-weight="normal" fill="#e6e6e6" stroke="#e6e6e6" stroke-width=".3">Low</text><text x="109.8" y="282.09" font-size="8.83" font-weight="normal" fill="#e6e6e6" stroke="#e6e6e6" stroke-width=".3">High</text><text x="12" y="294.8" font-size="8" font-weight="normal" fill="#e6e6e6" stroke="#e6e6e6" stroke-width=".3">Hold</text><text x="167" y="294.8" font-size="8" font-weight="normal" fill="#e6e6e6" stroke="#e6e6e6" stroke-width=".3">Clear</text><circle cx="73.3" cy="293.9" r="5.4" fill="#ea1b5c" /><line x1="73.3" y1="293.9" x2="73.3" y2="286" stroke="#ea1b5c" stroke-width="2.6" stroke-linecap="round"/><circle cx="13.4" cy="312.9" r="5.6" fill="#ea1b5c" /><line x1="13.4" y1="312.9" x2="13.4" y2="304.8" stroke="#ea1b5c" stroke-width="2.6" stroke-linecap="round"/><circle cx="163.3" cy="312.9" r="5.6" fill="#ea1b5c" /><line x1="163.3" y1="312.9" x2="163.3" y2="304.8" stroke="#ea1b5c" stroke-width="2.6" stroke-linecap="round"/><circle cx="45.7" cy="310.8" r="15.6" fill="url(#vk)" /><circle cx="45.7" cy="310.8" r="10.2" fill="#ea1b5c" /><line x1="45.7" y1="310.8" x2="35.13" y2="319.67" stroke="#ea1b5c" stroke-width="3.2" stroke-linecap="round"/><circle cx="129.7" cy="310.8" r="15.6" fill="url(#vk)" /><circle cx="129.7" cy="310.8" r="10.2" fill="#ea1b5c" /><line x1="129.7" y1="310.8" x2="119.13" y2="319.67" stroke="#ea1b5c" stroke-width="3.2" stroke-linecap="round"/><circle cx="87.6" cy="324" r="15.6" fill="url(#vk)" /><circle cx="87.6" cy="324" r="10.2" fill="#ea1b5c" /><line x1="87.6" y1="324" x2="87.6" y2="310.2" stroke="#ea1b5c" stroke-width="3.2" stroke-linecap="round"/><text x="42" y="336.9" font-size="8.28" font-weight="normal" fill="#e6e6e6" stroke="#e6e6e6" stroke-width=".3">Mod</text><text x="42" y="344.9" font-size="8.28" font-weight="normal" fill="#e6e6e6" stroke="#e6e6e6" stroke-width=".3">Rate</text><text x="133" y="336.9" font-size="8.28" font-weight="normal" fill="#e6e6e6" stroke="#e6e6e6" stroke-width=".3">Mod</text><text x="133" y="344.9" font-size="8.28" font-weight="normal" fill="#e6e6e6" stroke="#e6e6e6" stroke-width=".3">Depth</text><text x="88" y="350.9" font-size="8.28" font-weight="normal" fill="#e6e6e6" stroke="#e6e6e6" stroke-width=".3">Mod Shape</text></g><g id="s"><circle cx="0" cy="0" r="4.4" fill="#e2e2e2" stroke="#b4b4b4" stroke-width="1"/><line x1="-2.4" y1="0" x2="2.4" y2="0" stroke="#a8a8a8" stroke-width="0.9" /><line x1="0" y1="-2.4" x2="0" y2="2.4" stroke="#a8a8a8" stroke-width="0.9" /></g><g id="sd"><circle cx="0" cy="0" r="4.2" fill="#2a2a2a" stroke="#555" stroke-width="1"/><line x1="-2.2" y1="0" x2="2.2" y2="0" stroke="#666" stroke-width="0.9" /></g><g id="p"><circle cx="0" cy="0" r="12.6" fill="url(#pj)" /><circle cx="0" cy="0" r="9.2" fill="none" stroke="#7a7a7a" stroke-width="1.2" opacity=".7"/><circle cx="0" cy="0" r="5.2" fill="#050505" /></g><g id="pd"><circle cx="0" cy="0" r="12.6" fill="url(#pjD)" /><circle cx="0" cy="0" r="9.2" fill="none" stroke="#7a7a7a" stroke-width="1.2" opacity=".7"/><circle cx="0" cy="0" r="5.2" fill="#050505" /></g><g id="b"><circle cx="0" cy="1" r="11" fill="url(#shad)" /><circle cx="0" cy="0" r="9" fill="#242424" /><circle cx="0" cy="0" r="6.8" fill="#2f2f2f" /></g><g id="bl"><circle cx="0" cy="1" r="11" fill="url(#shad)" /><circle cx="0" cy="0" r="9" fill="#242424" /><circle cx="0" cy="0" r="6.8" fill="#2f2f2f" /><circle cx="0" cy="0" r="5.2" fill="#ffffff" /></g><g id="bp"><circle cx="0" cy="0" r="11.2" fill="#f6f6f6" stroke="#8c8c8c" stroke-width="1"/><circle cx="0" cy="0" r="8.2" fill="none" stroke="#b5b5b5" stroke-width="0.9"/><circle cx="0" cy="0" r="5.6" fill="#0a0a0a" /></g><g id="vp"><circle cx="0" cy="0" r="7.4" fill="#0c0c0c" stroke="#e2e2e2" stroke-width="2.5"/></g><g id="ap"><circle cx="0" cy="0" r="11.6" fill="url(#pj)" /><circle cx="0" cy="0" r="8.2" fill="none" stroke="#7a7a7a" stroke-width="1.1" opacity=".7"/><circle cx="0" cy="0" r="5.2" fill="#050505" /></g></defs>
<rect x="28" y="48" width="844" height="487.4" rx="0" fill="#313131" />
<rect x="28" y="48" width="844" height="7.2" rx="0" fill="#2a2a2a" />
<rect x="28" y="109.2" width="844" height="30.5" rx="0" fill="#232323" />
<rect x="28" y="109.2" width="844" height="1" rx="0" fill="#1e1e1e" />
<rect x="28" y="115" width="844" height="2.3" rx="0" fill="#2a2a2a" />
<rect x="28" y="118" width="844" height="5.4" rx="0" fill="#272727" />
<rect x="28" y="124.3" width="844" height="5.3" rx="0" fill="#2e2e2e" />
<rect x="28" y="130.5" width="844" height="1.4" rx="0" fill="#2b2b2b" />
<rect x="21.42" y="112.9" width="7.6" height="23.6" rx="0.8" fill="#171717" stroke="#343434" stroke-width=".6"/>
<rect x="23.02" y="114.7" width="4.4" height="20" rx="0.4" fill="#1f1f1f" />
<line x1="24.22" y1="115.8" x2="24.22" y2="133.8" stroke="#343434" stroke-width="0.7" stroke-dasharray=".9 1.1"/>
<line x1="26.22" y1="115.8" x2="26.22" y2="133.8" stroke="#343434" stroke-width="0.7" stroke-dasharray=".9 1.1"/>
<line x1="21.62" y1="138.3" x2="28.82" y2="138.3" stroke="#333" stroke-width="0.5" />
<rect x="41.63" y="112.9" width="7.6" height="23.6" rx="0.8" fill="#171717" stroke="#343434" stroke-width=".6"/>
<rect x="43.23" y="114.7" width="4.4" height="20" rx="0.4" fill="#1f1f1f" />
<line x1="44.43" y1="115.8" x2="44.43" y2="133.8" stroke="#343434" stroke-width="0.7" stroke-dasharray=".9 1.1"/>
<line x1="46.43" y1="115.8" x2="46.43" y2="133.8" stroke="#343434" stroke-width="0.7" stroke-dasharray=".9 1.1"/>
<line x1="41.83" y1="138.3" x2="49.03" y2="138.3" stroke="#333" stroke-width="0.5" />
<rect x="61.84" y="112.9" width="7.6" height="23.6" rx="0.8" fill="#171717" stroke="#343434" stroke-width=".6"/>
<rect x="63.44" y="114.7" width="4.4" height="20" rx="0.4" fill="#1f1f1f" />
<line x1="64.64" y1="115.8" x2="64.64" y2="133.8" stroke="#343434" stroke-width="0.7" stroke-dasharray=".9 1.1"/>
<line x1="66.64" y1="115.8" x2="66.64" y2="133.8" stroke="#343434" stroke-width="0.7" stroke-dasharray=".9 1.1"/>
<line x1="62.04" y1="138.3" x2="69.24" y2="138.3" stroke="#333" stroke-width="0.5" />
<rect x="82.05" y="112.9" width="7.6" height="23.6" rx="0.8" fill="#171717" stroke="#343434" stroke-width=".6"/>
<rect x="83.65" y="114.7" width="4.4" height="20" rx="0.4" fill="#1f1f1f" />
<line x1="84.85" y1="115.8" x2="84.85" y2="133.8" stroke="#343434" stroke-width="0.7" stroke-dasharray=".9 1.1"/>
<line x1="86.85" y1="115.8" x2="86.85" y2="133.8" stroke="#343434" stroke-width="0.7" stroke-dasharray=".9 1.1"/>
<line x1="82.25" y1="138.3" x2="89.45" y2="138.3" stroke="#333" stroke-width="0.5" />
<rect x="102.27" y="112.9" width="7.6" height="23.6" rx="0.8" fill="#171717" stroke="#343434" stroke-width=".6"/>
<rect x="103.87" y="114.7" width="4.4" height="20" rx="0.4" fill="#1f1f1f" />
<line x1="105.07" y1="115.8" x2="105.07" y2="133.8" stroke="#343434" stroke-width="0.7" stroke-dasharray=".9 1.1"/>
<line x1="107.07" y1="115.8" x2="107.07" y2="133.8" stroke="#343434" stroke-width="0.7" stroke-dasharray=".9 1.1"/>
<line x1="102.47" y1="138.3" x2="109.67" y2="138.3" stroke="#333" stroke-width="0.5" />
<rect x="122.48" y="112.9" width="7.6" height="23.6" rx="0.8" fill="#171717" stroke="#343434" stroke-width=".6"/>
<rect x="124.08" y="114.7" width="4.4" height="20" rx="0.4" fill="#1f1f1f" />
<line x1="125.28" y1="115.8" x2="125.28" y2="133.8" stroke="#343434" stroke-width="0.7" stroke-dasharray=".9 1.1"/>
<line x1="127.28" y1="115.8" x2="127.28" y2="133.8" stroke="#343434" stroke-width="0.7" stroke-dasharray=".9 1.1"/>
<line x1="122.68" y1="138.3" x2="129.88" y2="138.3" stroke="#333" stroke-width="0.5" />
<rect x="142.69" y="112.9" width="7.6" height="23.6" rx="0.8" fill="#171717" stroke="#343434" stroke-width=".6"/>
<rect x="144.29" y="114.7" width="4.4" height="20" rx="0.4" fill="#1f1f1f" />
<line x1="145.49" y1="115.8" x2="145.49" y2="133.8" stroke="#343434" stroke-width="0.7" stroke-dasharray=".9 1.1"/>
<line x1="147.49" y1="115.8" x2="147.49" y2="133.8" stroke="#343434" stroke-width="0.7" stroke-dasharray=".9 1.1"/>
<line x1="142.89" y1="138.3" x2="150.09" y2="138.3" stroke="#333" stroke-width="0.5" />
<rect x="162.9" y="112.9" width="7.6" height="23.6" rx="0.8" fill="#171717" stroke="#343434" stroke-width=".6"/>
<rect x="164.5" y="114.7" width="4.4" height="20" rx="0.4" fill="#1f1f1f" />
<line x1="165.7" y1="115.8" x2="165.7" y2="133.8" stroke="#343434" stroke-width="0.7" stroke-dasharray=".9 1.1"/>
<line x1="167.7" y1="115.8" x2="167.7" y2="133.8" stroke="#343434" stroke-width="0.7" stroke-dasharray=".9 1.1"/>
<line x1="163.1" y1="138.3" x2="170.3" y2="138.3" stroke="#333" stroke-width="0.5" />
<rect x="183.11" y="112.9" width="7.6" height="23.6" rx="0.8" fill="#171717" stroke="#343434" stroke-width=".6"/>
<rect x="184.71" y="114.7" width="4.4" height="20" rx="0.4" fill="#1f1f1f" />
<line x1="185.91" y1="115.8" x2="185.91" y2="133.8" stroke="#343434" stroke-width="0.7" stroke-dasharray=".9 1.1"/>
<line x1="187.91" y1="115.8" x2="187.91" y2="133.8" stroke="#343434" stroke-width="0.7" stroke-dasharray=".9 1.1"/>
<line x1="183.31" y1="138.3" x2="190.51" y2="138.3" stroke="#333" stroke-width="0.5" />
<rect x="203.33" y="112.9" width="7.6" height="23.6" rx="0.8" fill="#171717" stroke="#343434" stroke-width=".6"/>
<rect x="204.93" y="114.7" width="4.4" height="20" rx="0.4" fill="#1f1f1f" />
<line x1="206.13" y1="115.8" x2="206.13" y2="133.8" stroke="#343434" stroke-width="0.7" stroke-dasharray=".9 1.1"/>
<line x1="208.13" y1="115.8" x2="208.13" y2="133.8" stroke="#343434" stroke-width="0.7" stroke-dasharray=".9 1.1"/>
<line x1="203.53" y1="138.3" x2="210.73" y2="138.3" stroke="#333" stroke-width="0.5" />
<rect x="223.54" y="112.9" width="7.6" height="23.6" rx="0.8" fill="#171717" stroke="#343434" stroke-width=".6"/>
<rect x="225.14" y="114.7" width="4.4" height="20" rx="0.4" fill="#1f1f1f" />
<line x1="226.34" y1="115.8" x2="226.34" y2="133.8" stroke="#343434" stroke-width="0.7" stroke-dasharray=".9 1.1"/>
<line x1="228.34" y1="115.8" x2="228.34" y2="133.8" stroke="#343434" stroke-width="0.7" stroke-dasharray=".9 1.1"/>
<line x1="223.74" y1="138.3" x2="230.94" y2="138.3" stroke="#333" stroke-width="0.5" />
<rect x="243.75" y="112.9" width="7.6" height="23.6" rx="0.8" fill="#171717" stroke="#343434" stroke-width=".6"/>
<rect x="245.35" y="114.7" width="4.4" height="20" rx="0.4" fill="#1f1f1f" />
<line x1="246.55" y1="115.8" x2="246.55" y2="133.8" stroke="#343434" stroke-width="0.7" stroke-dasharray=".9 1.1"/>
<line x1="248.55" y1="115.8" x2="248.55" y2="133.8" stroke="#343434" stroke-width="0.7" stroke-dasharray=".9 1.1"/>
<line x1="243.95" y1="138.3" x2="251.15" y2="138.3" stroke="#333" stroke-width="0.5" />
<rect x="263.96" y="112.9" width="7.6" height="23.6" rx="0.8" fill="#171717" stroke="#343434" stroke-width=".6"/>
<rect x="265.56" y="114.7" width="4.4" height="20" rx="0.4" fill="#1f1f1f" />
<line x1="266.76" y1="115.8" x2="266.76" y2="133.8" stroke="#343434" stroke-width="0.7" stroke-dasharray=".9 1.1"/>
<line x1="268.76" y1="115.8" x2="268.76" y2="133.8" stroke="#343434" stroke-width="0.7" stroke-dasharray=".9 1.1"/>
<line x1="264.16" y1="138.3" x2="271.36" y2="138.3" stroke="#333" stroke-width="0.5" />
<rect x="284.18" y="112.9" width="7.6" height="23.6" rx="0.8" fill="#171717" stroke="#343434" stroke-width=".6"/>
<rect x="285.78" y="114.7" width="4.4" height="20" rx="0.4" fill="#1f1f1f" />
<line x1="286.98" y1="115.8" x2="286.98" y2="133.8" stroke="#343434" stroke-width="0.7" stroke-dasharray=".9 1.1"/>
<line x1="288.98" y1="115.8" x2="288.98" y2="133.8" stroke="#343434" stroke-width="0.7" stroke-dasharray=".9 1.1"/>
<line x1="284.38" y1="138.3" x2="291.58" y2="138.3" stroke="#333" stroke-width="0.5" />
<rect x="304.39" y="112.9" width="7.6" height="23.6" rx="0.8" fill="#171717" stroke="#343434" stroke-width=".6"/>
<rect x="305.99" y="114.7" width="4.4" height="20" rx="0.4" fill="#1f1f1f" />
<line x1="307.19" y1="115.8" x2="307.19" y2="133.8" stroke="#343434" stroke-width="0.7" stroke-dasharray=".9 1.1"/>
<line x1="309.19" y1="115.8" x2="309.19" y2="133.8" stroke="#343434" stroke-width="0.7" stroke-dasharray=".9 1.1"/>
<line x1="304.59" y1="138.3" x2="311.79" y2="138.3" stroke="#333" stroke-width="0.5" />
<rect x="324.6" y="112.9" width="7.6" height="23.6" rx="0.8" fill="#171717" stroke="#343434" stroke-width=".6"/>
<rect x="326.2" y="114.7" width="4.4" height="20" rx="0.4" fill="#1f1f1f" />
<line x1="327.4" y1="115.8" x2="327.4" y2="133.8" stroke="#343434" stroke-width="0.7" stroke-dasharray=".9 1.1"/>
<line x1="329.4" y1="115.8" x2="329.4" y2="133.8" stroke="#343434" stroke-width="0.7" stroke-dasharray=".9 1.1"/>
<line x1="324.8" y1="138.3" x2="332" y2="138.3" stroke="#333" stroke-width="0.5" />
<rect x="344.81" y="112.9" width="7.6" height="23.6" rx="0.8" fill="#171717" stroke="#343434" stroke-width=".6"/>
<rect x="346.41" y="114.7" width="4.4" height="20" rx="0.4" fill="#1f1f1f" />
<line x1="347.61" y1="115.8" x2="347.61" y2="133.8" stroke="#343434" stroke-width="0.7" stroke-dasharray=".9 1.1"/>
<line x1="349.61" y1="115.8" x2="349.61" y2="133.8" stroke="#343434" stroke-width="0.7" stroke-dasharray=".9 1.1"/>
<line x1="345.01" y1="138.3" x2="352.21" y2="138.3" stroke="#333" stroke-width="0.5" />
<rect x="365.02" y="112.9" width="7.6" height="23.6" rx="0.8" fill="#171717" stroke="#343434" stroke-width=".6"/>
<rect x="366.62" y="114.7" width="4.4" height="20" rx="0.4" fill="#1f1f1f" />
<line x1="367.82" y1="115.8" x2="367.82" y2="133.8" stroke="#343434" stroke-width="0.7" stroke-dasharray=".9 1.1"/>
<line x1="369.82" y1="115.8" x2="369.82" y2="133.8" stroke="#343434" stroke-width="0.7" stroke-dasharray=".9 1.1"/>
<line x1="365.22" y1="138.3" x2="372.42" y2="138.3" stroke="#333" stroke-width="0.5" />
<rect x="385.24" y="112.9" width="7.6" height="23.6" rx="0.8" fill="#171717" stroke="#343434" stroke-width=".6"/>
<rect x="386.84" y="114.7" width="4.4" height="20" rx="0.4" fill="#1f1f1f" />
<line x1="388.04" y1="115.8" x2="388.04" y2="133.8" stroke="#343434" stroke-width="0.7" stroke-dasharray=".9 1.1"/>
<line x1="390.04" y1="115.8" x2="390.04" y2="133.8" stroke="#343434" stroke-width="0.7" stroke-dasharray=".9 1.1"/>
<line x1="385.44" y1="138.3" x2="392.64" y2="138.3" stroke="#333" stroke-width="0.5" />
<rect x="405.45" y="112.9" width="7.6" height="23.6" rx="0.8" fill="#171717" stroke="#343434" stroke-width=".6"/>
<rect x="407.05" y="114.7" width="4.4" height="20" rx="0.4" fill="#1f1f1f" />
<line x1="408.25" y1="115.8" x2="408.25" y2="133.8" stroke="#343434" stroke-width="0.7" stroke-dasharray=".9 1.1"/>
<line x1="410.25" y1="115.8" x2="410.25" y2="133.8" stroke="#343434" stroke-width="0.7" stroke-dasharray=".9 1.1"/>
<line x1="405.65" y1="138.3" x2="412.85" y2="138.3" stroke="#333" stroke-width="0.5" />
<rect x="425.66" y="112.9" width="7.6" height="23.6" rx="0.8" fill="#171717" stroke="#343434" stroke-width=".6"/>
<rect x="427.26" y="114.7" width="4.4" height="20" rx="0.4" fill="#1f1f1f" />
<line x1="428.46" y1="115.8" x2="428.46" y2="133.8" stroke="#343434" stroke-width="0.7" stroke-dasharray=".9 1.1"/>
<line x1="430.46" y1="115.8" x2="430.46" y2="133.8" stroke="#343434" stroke-width="0.7" stroke-dasharray=".9 1.1"/>
<line x1="425.86" y1="138.3" x2="433.06" y2="138.3" stroke="#333" stroke-width="0.5" />
<rect x="445.87" y="112.9" width="7.6" height="23.6" rx="0.8" fill="#171717" stroke="#343434" stroke-width=".6"/>
<rect x="447.47" y="114.7" width="4.4" height="20" rx="0.4" fill="#1f1f1f" />
<line x1="448.67" y1="115.8" x2="448.67" y2="133.8" stroke="#343434" stroke-width="0.7" stroke-dasharray=".9 1.1"/>
<line x1="450.67" y1="115.8" x2="450.67" y2="133.8" stroke="#343434" stroke-width="0.7" stroke-dasharray=".9 1.1"/>
<line x1="446.07" y1="138.3" x2="453.27" y2="138.3" stroke="#333" stroke-width="0.5" />
<rect x="466.08" y="112.9" width="7.6" height="23.6" rx="0.8" fill="#171717" stroke="#343434" stroke-width=".6"/>
<rect x="467.68" y="114.7" width="4.4" height="20" rx="0.4" fill="#1f1f1f" />
<line x1="468.88" y1="115.8" x2="468.88" y2="133.8" stroke="#343434" stroke-width="0.7" stroke-dasharray=".9 1.1"/>
<line x1="470.88" y1="115.8" x2="470.88" y2="133.8" stroke="#343434" stroke-width="0.7" stroke-dasharray=".9 1.1"/>
<line x1="466.28" y1="138.3" x2="473.48" y2="138.3" stroke="#333" stroke-width="0.5" />
<rect x="486.3" y="112.9" width="7.6" height="23.6" rx="0.8" fill="#171717" stroke="#343434" stroke-width=".6"/>
<rect x="487.9" y="114.7" width="4.4" height="20" rx="0.4" fill="#1f1f1f" />
<line x1="489.1" y1="115.8" x2="489.1" y2="133.8" stroke="#343434" stroke-width="0.7" stroke-dasharray=".9 1.1"/>
<line x1="491.1" y1="115.8" x2="491.1" y2="133.8" stroke="#343434" stroke-width="0.7" stroke-dasharray=".9 1.1"/>
<line x1="486.5" y1="138.3" x2="493.7" y2="138.3" stroke="#333" stroke-width="0.5" />
<rect x="506.51" y="112.9" width="7.6" height="23.6" rx="0.8" fill="#171717" stroke="#343434" stroke-width=".6"/>
<rect x="508.11" y="114.7" width="4.4" height="20" rx="0.4" fill="#1f1f1f" />
<line x1="509.31" y1="115.8" x2="509.31" y2="133.8" stroke="#343434" stroke-width="0.7" stroke-dasharray=".9 1.1"/>
<line x1="511.31" y1="115.8" x2="511.31" y2="133.8" stroke="#343434" stroke-width="0.7" stroke-dasharray=".9 1.1"/>
<line x1="506.71" y1="138.3" x2="513.91" y2="138.3" stroke="#333" stroke-width="0.5" />
<rect x="526.72" y="112.9" width="7.6" height="23.6" rx="0.8" fill="#171717" stroke="#343434" stroke-width=".6"/>
<rect x="528.32" y="114.7" width="4.4" height="20" rx="0.4" fill="#1f1f1f" />
<line x1="529.52" y1="115.8" x2="529.52" y2="133.8" stroke="#343434" stroke-width="0.7" stroke-dasharray=".9 1.1"/>
<line x1="531.52" y1="115.8" x2="531.52" y2="133.8" stroke="#343434" stroke-width="0.7" stroke-dasharray=".9 1.1"/>
<line x1="526.92" y1="138.3" x2="534.12" y2="138.3" stroke="#333" stroke-width="0.5" />
<rect x="546.93" y="112.9" width="7.6" height="23.6" rx="0.8" fill="#171717" stroke="#343434" stroke-width=".6"/>
<rect x="548.53" y="114.7" width="4.4" height="20" rx="0.4" fill="#1f1f1f" />
<line x1="549.73" y1="115.8" x2="549.73" y2="133.8" stroke="#343434" stroke-width="0.7" stroke-dasharray=".9 1.1"/>
<line x1="551.73" y1="115.8" x2="551.73" y2="133.8" stroke="#343434" stroke-width="0.7" stroke-dasharray=".9 1.1"/>
<line x1="547.13" y1="138.3" x2="554.33" y2="138.3" stroke="#333" stroke-width="0.5" />
<rect x="567.15" y="112.9" width="7.6" height="23.6" rx="0.8" fill="#171717" stroke="#343434" stroke-width=".6"/>
<rect x="568.75" y="114.7" width="4.4" height="20" rx="0.4" fill="#1f1f1f" />
<line x1="569.95" y1="115.8" x2="569.95" y2="133.8" stroke="#343434" stroke-width="0.7" stroke-dasharray=".9 1.1"/>
<line x1="571.95" y1="115.8" x2="571.95" y2="133.8" stroke="#343434" stroke-width="0.7" stroke-dasharray=".9 1.1"/>
<line x1="567.35" y1="138.3" x2="574.55" y2="138.3" stroke="#333" stroke-width="0.5" />
<rect x="587.36" y="112.9" width="7.6" height="23.6" rx="0.8" fill="#171717" stroke="#343434" stroke-width=".6"/>
<rect x="588.96" y="114.7" width="4.4" height="20" rx="0.4" fill="#1f1f1f" />
<line x1="590.16" y1="115.8" x2="590.16" y2="133.8" stroke="#343434" stroke-width="0.7" stroke-dasharray=".9 1.1"/>
<line x1="592.16" y1="115.8" x2="592.16" y2="133.8" stroke="#343434" stroke-width="0.7" stroke-dasharray=".9 1.1"/>
<line x1="587.56" y1="138.3" x2="594.76" y2="138.3" stroke="#333" stroke-width="0.5" />
<rect x="607.57" y="112.9" width="7.6" height="23.6" rx="0.8" fill="#171717" stroke="#343434" stroke-width=".6"/>
<rect x="609.17" y="114.7" width="4.4" height="20" rx="0.4" fill="#1f1f1f" />
<line x1="610.37" y1="115.8" x2="610.37" y2="133.8" stroke="#343434" stroke-width="0.7" stroke-dasharray=".9 1.1"/>
<line x1="612.37" y1="115.8" x2="612.37" y2="133.8" stroke="#343434" stroke-width="0.7" stroke-dasharray=".9 1.1"/>
<line x1="607.77" y1="138.3" x2="614.97" y2="138.3" stroke="#333" stroke-width="0.5" />
<rect x="627.78" y="112.9" width="7.6" height="23.6" rx="0.8" fill="#171717" stroke="#343434" stroke-width=".6"/>
<rect x="629.38" y="114.7" width="4.4" height="20" rx="0.4" fill="#1f1f1f" />
<line x1="630.58" y1="115.8" x2="630.58" y2="133.8" stroke="#343434" stroke-width="0.7" stroke-dasharray=".9 1.1"/>
<line x1="632.58" y1="115.8" x2="632.58" y2="133.8" stroke="#343434" stroke-width="0.7" stroke-dasharray=".9 1.1"/>
<line x1="627.98" y1="138.3" x2="635.18" y2="138.3" stroke="#333" stroke-width="0.5" />
<rect x="647.99" y="112.9" width="7.6" height="23.6" rx="0.8" fill="#171717" stroke="#343434" stroke-width=".6"/>
<rect x="649.59" y="114.7" width="4.4" height="20" rx="0.4" fill="#1f1f1f" />
<line x1="650.79" y1="115.8" x2="650.79" y2="133.8" stroke="#343434" stroke-width="0.7" stroke-dasharray=".9 1.1"/>
<line x1="652.79" y1="115.8" x2="652.79" y2="133.8" stroke="#343434" stroke-width="0.7" stroke-dasharray=".9 1.1"/>
<line x1="648.19" y1="138.3" x2="655.39" y2="138.3" stroke="#333" stroke-width="0.5" />
<rect x="668.21" y="112.9" width="7.6" height="23.6" rx="0.8" fill="#171717" stroke="#343434" stroke-width=".6"/>
<rect x="669.81" y="114.7" width="4.4" height="20" rx="0.4" fill="#1f1f1f" />
<line x1="671.01" y1="115.8" x2="671.01" y2="133.8" stroke="#343434" stroke-width="0.7" stroke-dasharray=".9 1.1"/>
<line x1="673.01" y1="115.8" x2="673.01" y2="133.8" stroke="#343434" stroke-width="0.7" stroke-dasharray=".9 1.1"/>
<line x1="668.41" y1="138.3" x2="675.61" y2="138.3" stroke="#333" stroke-width="0.5" />
<rect x="688.42" y="112.9" width="7.6" height="23.6" rx="0.8" fill="#171717" stroke="#343434" stroke-width=".6"/>
<rect x="690.02" y="114.7" width="4.4" height="20" rx="0.4" fill="#1f1f1f" />
<line x1="691.22" y1="115.8" x2="691.22" y2="133.8" stroke="#343434" stroke-width="0.7" stroke-dasharray=".9 1.1"/>
<line x1="693.22" y1="115.8" x2="693.22" y2="133.8" stroke="#343434" stroke-width="0.7" stroke-dasharray=".9 1.1"/>
<line x1="688.62" y1="138.3" x2="695.82" y2="138.3" stroke="#333" stroke-width="0.5" />
<rect x="708.63" y="112.9" width="7.6" height="23.6" rx="0.8" fill="#171717" stroke="#343434" stroke-width=".6"/>
<rect x="710.23" y="114.7" width="4.4" height="20" rx="0.4" fill="#1f1f1f" />
<line x1="711.43" y1="115.8" x2="711.43" y2="133.8" stroke="#343434" stroke-width="0.7" stroke-dasharray=".9 1.1"/>
<line x1="713.43" y1="115.8" x2="713.43" y2="133.8" stroke="#343434" stroke-width="0.7" stroke-dasharray=".9 1.1"/>
<line x1="708.83" y1="138.3" x2="716.03" y2="138.3" stroke="#333" stroke-width="0.5" />
<rect x="728.84" y="112.9" width="7.6" height="23.6" rx="0.8" fill="#171717" stroke="#343434" stroke-width=".6"/>
<rect x="730.44" y="114.7" width="4.4" height="20" rx="0.4" fill="#1f1f1f" />
<line x1="731.64" y1="115.8" x2="731.64" y2="133.8" stroke="#343434" stroke-width="0.7" stroke-dasharray=".9 1.1"/>
<line x1="733.64" y1="115.8" x2="733.64" y2="133.8" stroke="#343434" stroke-width="0.7" stroke-dasharray=".9 1.1"/>
<line x1="729.04" y1="138.3" x2="736.24" y2="138.3" stroke="#333" stroke-width="0.5" />
<rect x="749.06" y="112.9" width="7.6" height="23.6" rx="0.8" fill="#171717" stroke="#343434" stroke-width=".6"/>
<rect x="750.66" y="114.7" width="4.4" height="20" rx="0.4" fill="#1f1f1f" />
<line x1="751.86" y1="115.8" x2="751.86" y2="133.8" stroke="#343434" stroke-width="0.7" stroke-dasharray=".9 1.1"/>
<line x1="753.86" y1="115.8" x2="753.86" y2="133.8" stroke="#343434" stroke-width="0.7" stroke-dasharray=".9 1.1"/>
<line x1="749.26" y1="138.3" x2="756.46" y2="138.3" stroke="#333" stroke-width="0.5" />
<rect x="769.27" y="112.9" width="7.6" height="23.6" rx="0.8" fill="#171717" stroke="#343434" stroke-width=".6"/>
<rect x="770.87" y="114.7" width="4.4" height="20" rx="0.4" fill="#1f1f1f" />
<line x1="772.07" y1="115.8" x2="772.07" y2="133.8" stroke="#343434" stroke-width="0.7" stroke-dasharray=".9 1.1"/>
<line x1="774.07" y1="115.8" x2="774.07" y2="133.8" stroke="#343434" stroke-width="0.7" stroke-dasharray=".9 1.1"/>
<line x1="769.47" y1="138.3" x2="776.67" y2="138.3" stroke="#333" stroke-width="0.5" />
<rect x="789.48" y="112.9" width="7.6" height="23.6" rx="0.8" fill="#171717" stroke="#343434" stroke-width=".6"/>
<rect x="791.08" y="114.7" width="4.4" height="20" rx="0.4" fill="#1f1f1f" />
<line x1="792.28" y1="115.8" x2="792.28" y2="133.8" stroke="#343434" stroke-width="0.7" stroke-dasharray=".9 1.1"/>
<line x1="794.28" y1="115.8" x2="794.28" y2="133.8" stroke="#343434" stroke-width="0.7" stroke-dasharray=".9 1.1"/>
<line x1="789.68" y1="138.3" x2="796.88" y2="138.3" stroke="#333" stroke-width="0.5" />
<rect x="809.69" y="112.9" width="7.6" height="23.6" rx="0.8" fill="#171717" stroke="#343434" stroke-width=".6"/>
<rect x="811.29" y="114.7" width="4.4" height="20" rx="0.4" fill="#1f1f1f" />
<line x1="812.49" y1="115.8" x2="812.49" y2="133.8" stroke="#343434" stroke-width="0.7" stroke-dasharray=".9 1.1"/>
<line x1="814.49" y1="115.8" x2="814.49" y2="133.8" stroke="#343434" stroke-width="0.7" stroke-dasharray=".9 1.1"/>
<line x1="809.89" y1="138.3" x2="817.09" y2="138.3" stroke="#333" stroke-width="0.5" />
<rect x="829.9" y="112.9" width="7.6" height="23.6" rx="0.8" fill="#171717" stroke="#343434" stroke-width=".6"/>
<rect x="831.5" y="114.7" width="4.4" height="20" rx="0.4" fill="#1f1f1f" />
<line x1="832.7" y1="115.8" x2="832.7" y2="133.8" stroke="#343434" stroke-width="0.7" stroke-dasharray=".9 1.1"/>
<line x1="834.7" y1="115.8" x2="834.7" y2="133.8" stroke="#343434" stroke-width="0.7" stroke-dasharray=".9 1.1"/>
<line x1="830.1" y1="138.3" x2="837.3" y2="138.3" stroke="#333" stroke-width="0.5" />
<rect x="850.12" y="112.9" width="7.6" height="23.6" rx="0.8" fill="#171717" stroke="#343434" stroke-width=".6"/>
<rect x="851.72" y="114.7" width="4.4" height="20" rx="0.4" fill="#1f1f1f" />
<line x1="852.92" y1="115.8" x2="852.92" y2="133.8" stroke="#343434" stroke-width="0.7" stroke-dasharray=".9 1.1"/>
<line x1="854.92" y1="115.8" x2="854.92" y2="133.8" stroke="#343434" stroke-width="0.7" stroke-dasharray=".9 1.1"/>
<line x1="850.32" y1="138.3" x2="857.52" y2="138.3" stroke="#333" stroke-width="0.5" />
<rect x="49.13" y="114.9" width="12.6" height="0.6" rx="0" fill="#343434" />
<circle cx="55.43" cy="112.5" r="1.5" fill="#1c1c1c" stroke="#3c3c3c" stroke-width=".55"/>
<circle cx="55.43" cy="135.7" r="1.5" fill="#1c1c1c" stroke="#3c3c3c" stroke-width=".55"/>
<rect x="150.2" y="114.9" width="12.6" height="0.6" rx="0" fill="#343434" />
<circle cx="156.5" cy="112.5" r="1.5" fill="#1c1c1c" stroke="#3c3c3c" stroke-width=".55"/>
<circle cx="156.5" cy="135.7" r="1.5" fill="#1c1c1c" stroke="#3c3c3c" stroke-width=".55"/>
<rect x="251.26" y="114.9" width="12.6" height="0.6" rx="0" fill="#343434" />
<circle cx="257.56" cy="112.5" r="1.5" fill="#1c1c1c" stroke="#3c3c3c" stroke-width=".55"/>
<circle cx="257.56" cy="135.7" r="1.5" fill="#1c1c1c" stroke="#3c3c3c" stroke-width=".55"/>
<rect x="352.32" y="114.9" width="12.6" height="0.6" rx="0" fill="#343434" />
<circle cx="358.62" cy="112.5" r="1.5" fill="#1c1c1c" stroke="#3c3c3c" stroke-width=".55"/>
<circle cx="358.62" cy="135.7" r="1.5" fill="#1c1c1c" stroke="#3c3c3c" stroke-width=".55"/>
<rect x="453.38" y="114.9" width="12.6" height="0.6" rx="0" fill="#343434" />
<circle cx="459.68" cy="112.5" r="1.5" fill="#1c1c1c" stroke="#3c3c3c" stroke-width=".55"/>
<circle cx="459.68" cy="135.7" r="1.5" fill="#1c1c1c" stroke="#3c3c3c" stroke-width=".55"/>
<rect x="554.44" y="114.9" width="12.6" height="0.6" rx="0" fill="#343434" />
<circle cx="560.74" cy="112.5" r="1.5" fill="#1c1c1c" stroke="#3c3c3c" stroke-width=".55"/>
<circle cx="560.74" cy="135.7" r="1.5" fill="#1c1c1c" stroke="#3c3c3c" stroke-width=".55"/>
<rect x="655.5" y="114.9" width="12.6" height="0.6" rx="0" fill="#343434" />
<circle cx="661.8" cy="112.5" r="1.5" fill="#1c1c1c" stroke="#3c3c3c" stroke-width=".55"/>
<circle cx="661.8" cy="135.7" r="1.5" fill="#1c1c1c" stroke="#3c3c3c" stroke-width=".55"/>
<rect x="756.56" y="114.9" width="12.6" height="0.6" rx="0" fill="#343434" />
<circle cx="762.86" cy="112.5" r="1.5" fill="#1c1c1c" stroke="#3c3c3c" stroke-width=".55"/>
<circle cx="762.86" cy="135.7" r="1.5" fill="#1c1c1c" stroke="#3c3c3c" stroke-width=".55"/>
<rect x="857.62" y="114.9" width="12.6" height="0.6" rx="0" fill="#343434" />
<circle cx="863.92" cy="112.5" r="1.5" fill="#1c1c1c" stroke="#3c3c3c" stroke-width=".55"/>
<circle cx="863.92" cy="135.7" r="1.5" fill="#1c1c1c" stroke="#3c3c3c" stroke-width=".55"/>
<rect x="28" y="237.2" width="844" height="30.5" rx="0" fill="#232323" />
<rect x="28" y="237.2" width="844" height="1" rx="0" fill="#1e1e1e" />
<rect x="28" y="243" width="844" height="2.3" rx="0" fill="#2a2a2a" />
<rect x="28" y="246" width="844" height="5.4" rx="0" fill="#272727" />
<rect x="28" y="252.3" width="844" height="5.3" rx="0" fill="#2e2e2e" />
<rect x="28" y="258.5" width="844" height="1.4" rx="0" fill="#2b2b2b" />
<rect x="21.42" y="240.9" width="7.6" height="23.6" rx="0.8" fill="#171717" stroke="#343434" stroke-width=".6"/>
<rect x="23.02" y="242.7" width="4.4" height="20" rx="0.4" fill="#1f1f1f" />
<line x1="24.22" y1="243.8" x2="24.22" y2="261.8" stroke="#343434" stroke-width="0.7" stroke-dasharray=".9 1.1"/>
<line x1="26.22" y1="243.8" x2="26.22" y2="261.8" stroke="#343434" stroke-width="0.7" stroke-dasharray=".9 1.1"/>
<line x1="21.62" y1="266.3" x2="28.82" y2="266.3" stroke="#333" stroke-width="0.5" />
<rect x="41.63" y="240.9" width="7.6" height="23.6" rx="0.8" fill="#171717" stroke="#343434" stroke-width=".6"/>
<rect x="43.23" y="242.7" width="4.4" height="20" rx="0.4" fill="#1f1f1f" />
<line x1="44.43" y1="243.8" x2="44.43" y2="261.8" stroke="#343434" stroke-width="0.7" stroke-dasharray=".9 1.1"/>
<line x1="46.43" y1="243.8" x2="46.43" y2="261.8" stroke="#343434" stroke-width="0.7" stroke-dasharray=".9 1.1"/>
<line x1="41.83" y1="266.3" x2="49.03" y2="266.3" stroke="#333" stroke-width="0.5" />
<rect x="61.84" y="240.9" width="7.6" height="23.6" rx="0.8" fill="#171717" stroke="#343434" stroke-width=".6"/>
<rect x="63.44" y="242.7" width="4.4" height="20" rx="0.4" fill="#1f1f1f" />
<line x1="64.64" y1="243.8" x2="64.64" y2="261.8" stroke="#343434" stroke-width="0.7" stroke-dasharray=".9 1.1"/>
<line x1="66.64" y1="243.8" x2="66.64" y2="261.8" stroke="#343434" stroke-width="0.7" stroke-dasharray=".9 1.1"/>
<line x1="62.04" y1="266.3" x2="69.24" y2="266.3" stroke="#333" stroke-width="0.5" />
<rect x="82.05" y="240.9" width="7.6" height="23.6" rx="0.8" fill="#171717" stroke="#343434" stroke-width=".6"/>
<rect x="83.65" y="242.7" width="4.4" height="20" rx="0.4" fill="#1f1f1f" />
<line x1="84.85" y1="243.8" x2="84.85" y2="261.8" stroke="#343434" stroke-width="0.7" stroke-dasharray=".9 1.1"/>
<line x1="86.85" y1="243.8" x2="86.85" y2="261.8" stroke="#343434" stroke-width="0.7" stroke-dasharray=".9 1.1"/>
<line x1="82.25" y1="266.3" x2="89.45" y2="266.3" stroke="#333" stroke-width="0.5" />
<rect x="102.27" y="240.9" width="7.6" height="23.6" rx="0.8" fill="#171717" stroke="#343434" stroke-width=".6"/>
<rect x="103.87" y="242.7" width="4.4" height="20" rx="0.4" fill="#1f1f1f" />
<line x1="105.07" y1="243.8" x2="105.07" y2="261.8" stroke="#343434" stroke-width="0.7" stroke-dasharray=".9 1.1"/>
<line x1="107.07" y1="243.8" x2="107.07" y2="261.8" stroke="#343434" stroke-width="0.7" stroke-dasharray=".9 1.1"/>
<line x1="102.47" y1="266.3" x2="109.67" y2="266.3" stroke="#333" stroke-width="0.5" />
<rect x="122.48" y="240.9" width="7.6" height="23.6" rx="0.8" fill="#171717" stroke="#343434" stroke-width=".6"/>
<rect x="124.08" y="242.7" width="4.4" height="20" rx="0.4" fill="#1f1f1f" />
<line x1="125.28" y1="243.8" x2="125.28" y2="261.8" stroke="#343434" stroke-width="0.7" stroke-dasharray=".9 1.1"/>
<line x1="127.28" y1="243.8" x2="127.28" y2="261.8" stroke="#343434" stroke-width="0.7" stroke-dasharray=".9 1.1"/>
<line x1="122.68" y1="266.3" x2="129.88" y2="266.3" stroke="#333" stroke-width="0.5" />
<rect x="142.69" y="240.9" width="7.6" height="23.6" rx="0.8" fill="#171717" stroke="#343434" stroke-width=".6"/>
<rect x="144.29" y="242.7" width="4.4" height="20" rx="0.4" fill="#1f1f1f" />
<line x1="145.49" y1="243.8" x2="145.49" y2="261.8" stroke="#343434" stroke-width="0.7" stroke-dasharray=".9 1.1"/>
<line x1="147.49" y1="243.8" x2="147.49" y2="261.8" stroke="#343434" stroke-width="0.7" stroke-dasharray=".9 1.1"/>
<line x1="142.89" y1="266.3" x2="150.09" y2="266.3" stroke="#333" stroke-width="0.5" />
<rect x="162.9" y="240.9" width="7.6" height="23.6" rx="0.8" fill="#171717" stroke="#343434" stroke-width=".6"/>
<rect x="164.5" y="242.7" width="4.4" height="20" rx="0.4" fill="#1f1f1f" />
<line x1="165.7" y1="243.8" x2="165.7" y2="261.8" stroke="#343434" stroke-width="0.7" stroke-dasharray=".9 1.1"/>
<line x1="167.7" y1="243.8" x2="167.7" y2="261.8" stroke="#343434" stroke-width="0.7" stroke-dasharray=".9 1.1"/>
<line x1="163.1" y1="266.3" x2="170.3" y2="266.3" stroke="#333" stroke-width="0.5" />
<rect x="183.11" y="240.9" width="7.6" height="23.6" rx="0.8" fill="#171717" stroke="#343434" stroke-width=".6"/>
<rect x="184.71" y="242.7" width="4.4" height="20" rx="0.4" fill="#1f1f1f" />
<line x1="185.91" y1="243.8" x2="185.91" y2="261.8" stroke="#343434" stroke-width="0.7" stroke-dasharray=".9 1.1"/>
<line x1="187.91" y1="243.8" x2="187.91" y2="261.8" stroke="#343434" stroke-width="0.7" stroke-dasharray=".9 1.1"/>
<line x1="183.31" y1="266.3" x2="190.51" y2="266.3" stroke="#333" stroke-width="0.5" />
<rect x="203.33" y="240.9" width="7.6" height="23.6" rx="0.8" fill="#171717" stroke="#343434" stroke-width=".6"/>
<rect x="204.93" y="242.7" width="4.4" height="20" rx="0.4" fill="#1f1f1f" />
<line x1="206.13" y1="243.8" x2="206.13" y2="261.8" stroke="#343434" stroke-width="0.7" stroke-dasharray=".9 1.1"/>
<line x1="208.13" y1="243.8" x2="208.13" y2="261.8" stroke="#343434" stroke-width="0.7" stroke-dasharray=".9 1.1"/>
<line x1="203.53" y1="266.3" x2="210.73" y2="266.3" stroke="#333" stroke-width="0.5" />
<rect x="223.54" y="240.9" width="7.6" height="23.6" rx="0.8" fill="#171717" stroke="#343434" stroke-width=".6"/>
<rect x="225.14" y="242.7" width="4.4" height="20" rx="0.4" fill="#1f1f1f" />
<line x1="226.34" y1="243.8" x2="226.34" y2="261.8" stroke="#343434" stroke-width="0.7" stroke-dasharray=".9 1.1"/>
<line x1="228.34" y1="243.8" x2="228.34" y2="261.8" stroke="#343434" stroke-width="0.7" stroke-dasharray=".9 1.1"/>
<line x1="223.74" y1="266.3" x2="230.94" y2="266.3" stroke="#333" stroke-width="0.5" />
<rect x="243.75" y="240.9" width="7.6" height="23.6" rx="0.8" fill="#171717" stroke="#343434" stroke-width=".6"/>
<rect x="245.35" y="242.7" width="4.4" height="20" rx="0.4" fill="#1f1f1f" />
<line x1="246.55" y1="243.8" x2="246.55" y2="261.8" stroke="#343434" stroke-width="0.7" stroke-dasharray=".9 1.1"/>
<line x1="248.55" y1="243.8" x2="248.55" y2="261.8" stroke="#343434" stroke-width="0.7" stroke-dasharray=".9 1.1"/>
<line x1="243.95" y1="266.3" x2="251.15" y2="266.3" stroke="#333" stroke-width="0.5" />
<rect x="263.96" y="240.9" width="7.6" height="23.6" rx="0.8" fill="#171717" stroke="#343434" stroke-width=".6"/>
<rect x="265.56" y="242.7" width="4.4" height="20" rx="0.4" fill="#1f1f1f" />
<line x1="266.76" y1="243.8" x2="266.76" y2="261.8" stroke="#343434" stroke-width="0.7" stroke-dasharray=".9 1.1"/>
<line x1="268.76" y1="243.8" x2="268.76" y2="261.8" stroke="#343434" stroke-width="0.7" stroke-dasharray=".9 1.1"/>
<line x1="264.16" y1="266.3" x2="271.36" y2="266.3" stroke="#333" stroke-width="0.5" />
<rect x="284.18" y="240.9" width="7.6" height="23.6" rx="0.8" fill="#171717" stroke="#343434" stroke-width=".6"/>
<rect x="285.78" y="242.7" width="4.4" height="20" rx="0.4" fill="#1f1f1f" />
<line x1="286.98" y1="243.8" x2="286.98" y2="261.8" stroke="#343434" stroke-width="0.7" stroke-dasharray=".9 1.1"/>
<line x1="288.98" y1="243.8" x2="288.98" y2="261.8" stroke="#343434" stroke-width="0.7" stroke-dasharray=".9 1.1"/>
<line x1="284.38" y1="266.3" x2="291.58" y2="266.3" stroke="#333" stroke-width="0.5" />
<rect x="304.39" y="240.9" width="7.6" height="23.6" rx="0.8" fill="#171717" stroke="#343434" stroke-width=".6"/>
<rect x="305.99" y="242.7" width="4.4" height="20" rx="0.4" fill="#1f1f1f" />
<line x1="307.19" y1="243.8" x2="307.19" y2="261.8" stroke="#343434" stroke-width="0.7" stroke-dasharray=".9 1.1"/>
<line x1="309.19" y1="243.8" x2="309.19" y2="261.8" stroke="#343434" stroke-width="0.7" stroke-dasharray=".9 1.1"/>
<line x1="304.59" y1="266.3" x2="311.79" y2="266.3" stroke="#333" stroke-width="0.5" />
<rect x="324.6" y="240.9" width="7.6" height="23.6" rx="0.8" fill="#171717" stroke="#343434" stroke-width=".6"/>
<rect x="326.2" y="242.7" width="4.4" height="20" rx="0.4" fill="#1f1f1f" />
<line x1="327.4" y1="243.8" x2="327.4" y2="261.8" stroke="#343434" stroke-width="0.7" stroke-dasharray=".9 1.1"/>
<line x1="329.4" y1="243.8" x2="329.4" y2="261.8" stroke="#343434" stroke-width="0.7" stroke-dasharray=".9 1.1"/>
<line x1="324.8" y1="266.3" x2="332" y2="266.3" stroke="#333" stroke-width="0.5" />
<rect x="344.81" y="240.9" width="7.6" height="23.6" rx="0.8" fill="#171717" stroke="#343434" stroke-width=".6"/>
<rect x="346.41" y="242.7" width="4.4" height="20" rx="0.4" fill="#1f1f1f" />
<line x1="347.61" y1="243.8" x2="347.61" y2="261.8" stroke="#343434" stroke-width="0.7" stroke-dasharray=".9 1.1"/>
<line x1="349.61" y1="243.8" x2="349.61" y2="261.8" stroke="#343434" stroke-width="0.7" stroke-dasharray=".9 1.1"/>
<line x1="345.01" y1="266.3" x2="352.21" y2="266.3" stroke="#333" stroke-width="0.5" />
<rect x="365.02" y="240.9" width="7.6" height="23.6" rx="0.8" fill="#171717" stroke="#343434" stroke-width=".6"/>
<rect x="366.62" y="242.7" width="4.4" height="20" rx="0.4" fill="#1f1f1f" />
<line x1="367.82" y1="243.8" x2="367.82" y2="261.8" stroke="#343434" stroke-width="0.7" stroke-dasharray=".9 1.1"/>
<line x1="369.82" y1="243.8" x2="369.82" y2="261.8" stroke="#343434" stroke-width="0.7" stroke-dasharray=".9 1.1"/>
<line x1="365.22" y1="266.3" x2="372.42" y2="266.3" stroke="#333" stroke-width="0.5" />
<rect x="385.24" y="240.9" width="7.6" height="23.6" rx="0.8" fill="#171717" stroke="#343434" stroke-width=".6"/>
<rect x="386.84" y="242.7" width="4.4" height="20" rx="0.4" fill="#1f1f1f" />
<line x1="388.04" y1="243.8" x2="388.04" y2="261.8" stroke="#343434" stroke-width="0.7" stroke-dasharray=".9 1.1"/>
<line x1="390.04" y1="243.8" x2="390.04" y2="261.8" stroke="#343434" stroke-width="0.7" stroke-dasharray=".9 1.1"/>
<line x1="385.44" y1="266.3" x2="392.64" y2="266.3" stroke="#333" stroke-width="0.5" />
<rect x="405.45" y="240.9" width="7.6" height="23.6" rx="0.8" fill="#171717" stroke="#343434" stroke-width=".6"/>
<rect x="407.05" y="242.7" width="4.4" height="20" rx="0.4" fill="#1f1f1f" />
<line x1="408.25" y1="243.8" x2="408.25" y2="261.8" stroke="#343434" stroke-width="0.7" stroke-dasharray=".9 1.1"/>
<line x1="410.25" y1="243.8" x2="410.25" y2="261.8" stroke="#343434" stroke-width="0.7" stroke-dasharray=".9 1.1"/>
<line x1="405.65" y1="266.3" x2="412.85" y2="266.3" stroke="#333" stroke-width="0.5" />
<rect x="425.66" y="240.9" width="7.6" height="23.6" rx="0.8" fill="#171717" stroke="#343434" stroke-width=".6"/>
<rect x="427.26" y="242.7" width="4.4" height="20" rx="0.4" fill="#1f1f1f" />
<line x1="428.46" y1="243.8" x2="428.46" y2="261.8" stroke="#343434" stroke-width="0.7" stroke-dasharray=".9 1.1"/>
<line x1="430.46" y1="243.8" x2="430.46" y2="261.8" stroke="#343434" stroke-width="0.7" stroke-dasharray=".9 1.1"/>
<line x1="425.86" y1="266.3" x2="433.06" y2="266.3" stroke="#333" stroke-width="0.5" />
<rect x="445.87" y="240.9" width="7.6" height="23.6" rx="0.8" fill="#171717" stroke="#343434" stroke-width=".6"/>
<rect x="447.47" y="242.7" width="4.4" height="20" rx="0.4" fill="#1f1f1f" />
<line x1="448.67" y1="243.8" x2="448.67" y2="261.8" stroke="#343434" stroke-width="0.7" stroke-dasharray=".9 1.1"/>
<line x1="450.67" y1="243.8" x2="450.67" y2="261.8" stroke="#343434" stroke-width="0.7" stroke-dasharray=".9 1.1"/>
<line x1="446.07" y1="266.3" x2="453.27" y2="266.3" stroke="#333" stroke-width="0.5" />
<rect x="466.08" y="240.9" width="7.6" height="23.6" rx="0.8" fill="#171717" stroke="#343434" stroke-width=".6"/>
<rect x="467.68" y="242.7" width="4.4" height="20" rx="0.4" fill="#1f1f1f" />
<line x1="468.88" y1="243.8" x2="468.88" y2="261.8" stroke="#343434" stroke-width="0.7" stroke-dasharray=".9 1.1"/>
<line x1="470.88" y1="243.8" x2="470.88" y2="261.8" stroke="#343434" stroke-width="0.7" stroke-dasharray=".9 1.1"/>
<line x1="466.28" y1="266.3" x2="473.48" y2="266.3" stroke="#333" stroke-width="0.5" />
<rect x="486.3" y="240.9" width="7.6" height="23.6" rx="0.8" fill="#171717" stroke="#343434" stroke-width=".6"/>
<rect x="487.9" y="242.7" width="4.4" height="20" rx="0.4" fill="#1f1f1f" />
<line x1="489.1" y1="243.8" x2="489.1" y2="261.8" stroke="#343434" stroke-width="0.7" stroke-dasharray=".9 1.1"/>
<line x1="491.1" y1="243.8" x2="491.1" y2="261.8" stroke="#343434" stroke-width="0.7" stroke-dasharray=".9 1.1"/>
<line x1="486.5" y1="266.3" x2="493.7" y2="266.3" stroke="#333" stroke-width="0.5" />
<rect x="506.51" y="240.9" width="7.6" height="23.6" rx="0.8" fill="#171717" stroke="#343434" stroke-width=".6"/>
<rect x="508.11" y="242.7" width="4.4" height="20" rx="0.4" fill="#1f1f1f" />
<line x1="509.31" y1="243.8" x2="509.31" y2="261.8" stroke="#343434" stroke-width="0.7" stroke-dasharray=".9 1.1"/>
<line x1="511.31" y1="243.8" x2="511.31" y2="261.8" stroke="#343434" stroke-width="0.7" stroke-dasharray=".9 1.1"/>
<line x1="506.71" y1="266.3" x2="513.91" y2="266.3" stroke="#333" stroke-width="0.5" />
<rect x="526.72" y="240.9" width="7.6" height="23.6" rx="0.8" fill="#171717" stroke="#343434" stroke-width=".6"/>
<rect x="528.32" y="242.7" width="4.4" height="20" rx="0.4" fill="#1f1f1f" />
<line x1="529.52" y1="243.8" x2="529.52" y2="261.8" stroke="#343434" stroke-width="0.7" stroke-dasharray=".9 1.1"/>
<line x1="531.52" y1="243.8" x2="531.52" y2="261.8" stroke="#343434" stroke-width="0.7" stroke-dasharray=".9 1.1"/>
<line x1="526.92" y1="266.3" x2="534.12" y2="266.3" stroke="#333" stroke-width="0.5" />
<rect x="546.93" y="240.9" width="7.6" height="23.6" rx="0.8" fill="#171717" stroke="#343434" stroke-width=".6"/>
<rect x="548.53" y="242.7" width="4.4" height="20" rx="0.4" fill="#1f1f1f" />
<line x1="549.73" y1="243.8" x2="549.73" y2="261.8" stroke="#343434" stroke-width="0.7" stroke-dasharray=".9 1.1"/>
<line x1="551.73" y1="243.8" x2="551.73" y2="261.8" stroke="#343434" stroke-width="0.7" stroke-dasharray=".9 1.1"/>
<line x1="547.13" y1="266.3" x2="554.33" y2="266.3" stroke="#333" stroke-width="0.5" />
<rect x="567.15" y="240.9" width="7.6" height="23.6" rx="0.8" fill="#171717" stroke="#343434" stroke-width=".6"/>
<rect x="568.75" y="242.7" width="4.4" height="20" rx="0.4" fill="#1f1f1f" />
<line x1="569.95" y1="243.8" x2="569.95" y2="261.8" stroke="#343434" stroke-width="0.7" stroke-dasharray=".9 1.1"/>
<line x1="571.95" y1="243.8" x2="571.95" y2="261.8" stroke="#343434" stroke-width="0.7" stroke-dasharray=".9 1.1"/>
<line x1="567.35" y1="266.3" x2="574.55" y2="266.3" stroke="#333" stroke-width="0.5" />
<rect x="587.36" y="240.9" width="7.6" height="23.6" rx="0.8" fill="#171717" stroke="#343434" stroke-width=".6"/>
<rect x="588.96" y="242.7" width="4.4" height="20" rx="0.4" fill="#1f1f1f" />
<line x1="590.16" y1="243.8" x2="590.16" y2="261.8" stroke="#343434" stroke-width="0.7" stroke-dasharray=".9 1.1"/>
<line x1="592.16" y1="243.8" x2="592.16" y2="261.8" stroke="#343434" stroke-width="0.7" stroke-dasharray=".9 1.1"/>
<line x1="587.56" y1="266.3" x2="594.76" y2="266.3" stroke="#333" stroke-width="0.5" />
<rect x="607.57" y="240.9" width="7.6" height="23.6" rx="0.8" fill="#171717" stroke="#343434" stroke-width=".6"/>
<rect x="609.17" y="242.7" width="4.4" height="20" rx="0.4" fill="#1f1f1f" />
<line x1="610.37" y1="243.8" x2="610.37" y2="261.8" stroke="#343434" stroke-width="0.7" stroke-dasharray=".9 1.1"/>
<line x1="612.37" y1="243.8" x2="612.37" y2="261.8" stroke="#343434" stroke-width="0.7" stroke-dasharray=".9 1.1"/>
<line x1="607.77" y1="266.3" x2="614.97" y2="266.3" stroke="#333" stroke-width="0.5" />
<rect x="627.78" y="240.9" width="7.6" height="23.6" rx="0.8" fill="#171717" stroke="#343434" stroke-width=".6"/>
<rect x="629.38" y="242.7" width="4.4" height="20" rx="0.4" fill="#1f1f1f" />
<line x1="630.58" y1="243.8" x2="630.58" y2="261.8" stroke="#343434" stroke-width="0.7" stroke-dasharray=".9 1.1"/>
<line x1="632.58" y1="243.8" x2="632.58" y2="261.8" stroke="#343434" stroke-width="0.7" stroke-dasharray=".9 1.1"/>
<line x1="627.98" y1="266.3" x2="635.18" y2="266.3" stroke="#333" stroke-width="0.5" />
<rect x="647.99" y="240.9" width="7.6" height="23.6" rx="0.8" fill="#171717" stroke="#343434" stroke-width=".6"/>
<rect x="649.59" y="242.7" width="4.4" height="20" rx="0.4" fill="#1f1f1f" />
<line x1="650.79" y1="243.8" x2="650.79" y2="261.8" stroke="#343434" stroke-width="0.7" stroke-dasharray=".9 1.1"/>
<line x1="652.79" y1="243.8" x2="652.79" y2="261.8" stroke="#343434" stroke-width="0.7" stroke-dasharray=".9 1.1"/>
<line x1="648.19" y1="266.3" x2="655.39" y2="266.3" stroke="#333" stroke-width="0.5" />
<rect x="668.21" y="240.9" width="7.6" height="23.6" rx="0.8" fill="#171717" stroke="#343434" stroke-width=".6"/>
<rect x="669.81" y="242.7" width="4.4" height="20" rx="0.4" fill="#1f1f1f" />
<line x1="671.01" y1="243.8" x2="671.01" y2="261.8" stroke="#343434" stroke-width="0.7" stroke-dasharray=".9 1.1"/>
<line x1="673.01" y1="243.8" x2="673.01" y2="261.8" stroke="#343434" stroke-width="0.7" stroke-dasharray=".9 1.1"/>
<line x1="668.41" y1="266.3" x2="675.61" y2="266.3" stroke="#333" stroke-width="0.5" />
<rect x="688.42" y="240.9" width="7.6" height="23.6" rx="0.8" fill="#171717" stroke="#343434" stroke-width=".6"/>
<rect x="690.02" y="242.7" width="4.4" height="20" rx="0.4" fill="#1f1f1f" />
<line x1="691.22" y1="243.8" x2="691.22" y2="261.8" stroke="#343434" stroke-width="0.7" stroke-dasharray=".9 1.1"/>
<line x1="693.22" y1="243.8" x2="693.22" y2="261.8" stroke="#343434" stroke-width="0.7" stroke-dasharray=".9 1.1"/>
<line x1="688.62" y1="266.3" x2="695.82" y2="266.3" stroke="#333" stroke-width="0.5" />
<rect x="708.63" y="240.9" width="7.6" height="23.6" rx="0.8" fill="#171717" stroke="#343434" stroke-width=".6"/>
<rect x="710.23" y="242.7" width="4.4" height="20" rx="0.4" fill="#1f1f1f" />
<line x1="711.43" y1="243.8" x2="711.43" y2="261.8" stroke="#343434" stroke-width="0.7" stroke-dasharray=".9 1.1"/>
<line x1="713.43" y1="243.8" x2="713.43" y2="261.8" stroke="#343434" stroke-width="0.7" stroke-dasharray=".9 1.1"/>
<line x1="708.83" y1="266.3" x2="716.03" y2="266.3" stroke="#333" stroke-width="0.5" />
<rect x="728.84" y="240.9" width="7.6" height="23.6" rx="0.8" fill="#171717" stroke="#343434" stroke-width=".6"/>
<rect x="730.44" y="242.7" width="4.4" height="20" rx="0.4" fill="#1f1f1f" />
<line x1="731.64" y1="243.8" x2="731.64" y2="261.8" stroke="#343434" stroke-width="0.7" stroke-dasharray=".9 1.1"/>
<line x1="733.64" y1="243.8" x2="733.64" y2="261.8" stroke="#343434" stroke-width="0.7" stroke-dasharray=".9 1.1"/>
<line x1="729.04" y1="266.3" x2="736.24" y2="266.3" stroke="#333" stroke-width="0.5" />
<rect x="749.06" y="240.9" width="7.6" height="23.6" rx="0.8" fill="#171717" stroke="#343434" stroke-width=".6"/>
<rect x="750.66" y="242.7" width="4.4" height="20" rx="0.4" fill="#1f1f1f" />
<line x1="751.86" y1="243.8" x2="751.86" y2="261.8" stroke="#343434" stroke-width="0.7" stroke-dasharray=".9 1.1"/>
<line x1="753.86" y1="243.8" x2="753.86" y2="261.8" stroke="#343434" stroke-width="0.7" stroke-dasharray=".9 1.1"/>
<line x1="749.26" y1="266.3" x2="756.46" y2="266.3" stroke="#333" stroke-width="0.5" />
<rect x="769.27" y="240.9" width="7.6" height="23.6" rx="0.8" fill="#171717" stroke="#343434" stroke-width=".6"/>
<rect x="770.87" y="242.7" width="4.4" height="20" rx="0.4" fill="#1f1f1f" />
<line x1="772.07" y1="243.8" x2="772.07" y2="261.8" stroke="#343434" stroke-width="0.7" stroke-dasharray=".9 1.1"/>
<line x1="774.07" y1="243.8" x2="774.07" y2="261.8" stroke="#343434" stroke-width="0.7" stroke-dasharray=".9 1.1"/>
<line x1="769.47" y1="266.3" x2="776.67" y2="266.3" stroke="#333" stroke-width="0.5" />
<rect x="789.48" y="240.9" width="7.6" height="23.6" rx="0.8" fill="#171717" stroke="#343434" stroke-width=".6"/>
<rect x="791.08" y="242.7" width="4.4" height="20" rx="0.4" fill="#1f1f1f" />
<line x1="792.28" y1="243.8" x2="792.28" y2="261.8" stroke="#343434" stroke-width="0.7" stroke-dasharray=".9 1.1"/>
<line x1="794.28" y1="243.8" x2="794.28" y2="261.8" stroke="#343434" stroke-width="0.7" stroke-dasharray=".9 1.1"/>
<line x1="789.68" y1="266.3" x2="796.88" y2="266.3" stroke="#333" stroke-width="0.5" />
<rect x="809.69" y="240.9" width="7.6" height="23.6" rx="0.8" fill="#171717" stroke="#343434" stroke-width=".6"/>
<rect x="811.29" y="242.7" width="4.4" height="20" rx="0.4" fill="#1f1f1f" />
<line x1="812.49" y1="243.8" x2="812.49" y2="261.8" stroke="#343434" stroke-width="0.7" stroke-dasharray=".9 1.1"/>
<line x1="814.49" y1="243.8" x2="814.49" y2="261.8" stroke="#343434" stroke-width="0.7" stroke-dasharray=".9 1.1"/>
<line x1="809.89" y1="266.3" x2="817.09" y2="266.3" stroke="#333" stroke-width="0.5" />
<rect x="829.9" y="240.9" width="7.6" height="23.6" rx="0.8" fill="#171717" stroke="#343434" stroke-width=".6"/>
<rect x="831.5" y="242.7" width="4.4" height="20" rx="0.4" fill="#1f1f1f" />
<line x1="832.7" y1="243.8" x2="832.7" y2="261.8" stroke="#343434" stroke-width="0.7" stroke-dasharray=".9 1.1"/>
<line x1="834.7" y1="243.8" x2="834.7" y2="261.8" stroke="#343434" stroke-width="0.7" stroke-dasharray=".9 1.1"/>
<line x1="830.1" y1="266.3" x2="837.3" y2="266.3" stroke="#333" stroke-width="0.5" />
<rect x="850.12" y="240.9" width="7.6" height="23.6" rx="0.8" fill="#171717" stroke="#343434" stroke-width=".6"/>
<rect x="851.72" y="242.7" width="4.4" height="20" rx="0.4" fill="#1f1f1f" />
<line x1="852.92" y1="243.8" x2="852.92" y2="261.8" stroke="#343434" stroke-width="0.7" stroke-dasharray=".9 1.1"/>
<line x1="854.92" y1="243.8" x2="854.92" y2="261.8" stroke="#343434" stroke-width="0.7" stroke-dasharray=".9 1.1"/>
<line x1="850.32" y1="266.3" x2="857.52" y2="266.3" stroke="#333" stroke-width="0.5" />
<rect x="49.13" y="242.9" width="12.6" height="0.6" rx="0" fill="#343434" />
<circle cx="55.43" cy="240.5" r="1.5" fill="#1c1c1c" stroke="#3c3c3c" stroke-width=".55"/>
<circle cx="55.43" cy="263.7" r="1.5" fill="#1c1c1c" stroke="#3c3c3c" stroke-width=".55"/>
<rect x="150.2" y="242.9" width="12.6" height="0.6" rx="0" fill="#343434" />
<circle cx="156.5" cy="240.5" r="1.5" fill="#1c1c1c" stroke="#3c3c3c" stroke-width=".55"/>
<circle cx="156.5" cy="263.7" r="1.5" fill="#1c1c1c" stroke="#3c3c3c" stroke-width=".55"/>
<rect x="251.26" y="242.9" width="12.6" height="0.6" rx="0" fill="#343434" />
<circle cx="257.56" cy="240.5" r="1.5" fill="#1c1c1c" stroke="#3c3c3c" stroke-width=".55"/>
<circle cx="257.56" cy="263.7" r="1.5" fill="#1c1c1c" stroke="#3c3c3c" stroke-width=".55"/>
<rect x="352.32" y="242.9" width="12.6" height="0.6" rx="0" fill="#343434" />
<circle cx="358.62" cy="240.5" r="1.5" fill="#1c1c1c" stroke="#3c3c3c" stroke-width=".55"/>
<circle cx="358.62" cy="263.7" r="1.5" fill="#1c1c1c" stroke="#3c3c3c" stroke-width=".55"/>
<rect x="453.38" y="242.9" width="12.6" height="0.6" rx="0" fill="#343434" />
<circle cx="459.68" cy="240.5" r="1.5" fill="#1c1c1c" stroke="#3c3c3c" stroke-width=".55"/>
<circle cx="459.68" cy="263.7" r="1.5" fill="#1c1c1c" stroke="#3c3c3c" stroke-width=".55"/>
<rect x="554.44" y="242.9" width="12.6" height="0.6" rx="0" fill="#343434" />
<circle cx="560.74" cy="240.5" r="1.5" fill="#1c1c1c" stroke="#3c3c3c" stroke-width=".55"/>
<circle cx="560.74" cy="263.7" r="1.5" fill="#1c1c1c" stroke="#3c3c3c" stroke-width=".55"/>
<rect x="655.5" y="242.9" width="12.6" height="0.6" rx="0" fill="#343434" />
<circle cx="661.8" cy="240.5" r="1.5" fill="#1c1c1c" stroke="#3c3c3c" stroke-width=".55"/>
<circle cx="661.8" cy="263.7" r="1.5" fill="#1c1c1c" stroke="#3c3c3c" stroke-width=".55"/>
<rect x="756.56" y="242.9" width="12.6" height="0.6" rx="0" fill="#343434" />
<circle cx="762.86" cy="240.5" r="1.5" fill="#1c1c1c" stroke="#3c3c3c" stroke-width=".55"/>
<circle cx="762.86" cy="263.7" r="1.5" fill="#1c1c1c" stroke="#3c3c3c" stroke-width=".55"/>
<rect x="857.62" y="242.9" width="12.6" height="0.6" rx="0" fill="#343434" />
<circle cx="863.92" cy="240.5" r="1.5" fill="#1c1c1c" stroke="#3c3c3c" stroke-width=".55"/>
<circle cx="863.92" cy="263.7" r="1.5" fill="#1c1c1c" stroke="#3c3c3c" stroke-width=".55"/>
<rect x="28" y="365.2" width="844" height="30.5" rx="0" fill="#232323" />
<rect x="28" y="365.2" width="844" height="1" rx="0" fill="#1e1e1e" />
<rect x="28" y="371" width="844" height="2.3" rx="0" fill="#2a2a2a" />
<rect x="28" y="374" width="844" height="5.4" rx="0" fill="#272727" />
<rect x="28" y="380.3" width="844" height="5.3" rx="0" fill="#2e2e2e" />
<rect x="28" y="386.5" width="844" height="1.4" rx="0" fill="#2b2b2b" />
<rect x="21.42" y="368.9" width="7.6" height="23.6" rx="0.8" fill="#171717" stroke="#343434" stroke-width=".6"/>
<rect x="23.02" y="370.7" width="4.4" height="20" rx="0.4" fill="#1f1f1f" />
<line x1="24.22" y1="371.8" x2="24.22" y2="389.8" stroke="#343434" stroke-width="0.7" stroke-dasharray=".9 1.1"/>
<line x1="26.22" y1="371.8" x2="26.22" y2="389.8" stroke="#343434" stroke-width="0.7" stroke-dasharray=".9 1.1"/>
<line x1="21.62" y1="394.3" x2="28.82" y2="394.3" stroke="#333" stroke-width="0.5" />
<rect x="41.63" y="368.9" width="7.6" height="23.6" rx="0.8" fill="#171717" stroke="#343434" stroke-width=".6"/>
<rect x="43.23" y="370.7" width="4.4" height="20" rx="0.4" fill="#1f1f1f" />
<line x1="44.43" y1="371.8" x2="44.43" y2="389.8" stroke="#343434" stroke-width="0.7" stroke-dasharray=".9 1.1"/>
<line x1="46.43" y1="371.8" x2="46.43" y2="389.8" stroke="#343434" stroke-width="0.7" stroke-dasharray=".9 1.1"/>
<line x1="41.83" y1="394.3" x2="49.03" y2="394.3" stroke="#333" stroke-width="0.5" />
<rect x="61.84" y="368.9" width="7.6" height="23.6" rx="0.8" fill="#171717" stroke="#343434" stroke-width=".6"/>
<rect x="63.44" y="370.7" width="4.4" height="20" rx="0.4" fill="#1f1f1f" />
<line x1="64.64" y1="371.8" x2="64.64" y2="389.8" stroke="#343434" stroke-width="0.7" stroke-dasharray=".9 1.1"/>
<line x1="66.64" y1="371.8" x2="66.64" y2="389.8" stroke="#343434" stroke-width="0.7" stroke-dasharray=".9 1.1"/>
<line x1="62.04" y1="394.3" x2="69.24" y2="394.3" stroke="#333" stroke-width="0.5" />
<rect x="82.05" y="368.9" width="7.6" height="23.6" rx="0.8" fill="#171717" stroke="#343434" stroke-width=".6"/>
<rect x="83.65" y="370.7" width="4.4" height="20" rx="0.4" fill="#1f1f1f" />
<line x1="84.85" y1="371.8" x2="84.85" y2="389.8" stroke="#343434" stroke-width="0.7" stroke-dasharray=".9 1.1"/>
<line x1="86.85" y1="371.8" x2="86.85" y2="389.8" stroke="#343434" stroke-width="0.7" stroke-dasharray=".9 1.1"/>
<line x1="82.25" y1="394.3" x2="89.45" y2="394.3" stroke="#333" stroke-width="0.5" />
<rect x="102.27" y="368.9" width="7.6" height="23.6" rx="0.8" fill="#171717" stroke="#343434" stroke-width=".6"/>
<rect x="103.87" y="370.7" width="4.4" height="20" rx="0.4" fill="#1f1f1f" />
<line x1="105.07" y1="371.8" x2="105.07" y2="389.8" stroke="#343434" stroke-width="0.7" stroke-dasharray=".9 1.1"/>
<line x1="107.07" y1="371.8" x2="107.07" y2="389.8" stroke="#343434" stroke-width="0.7" stroke-dasharray=".9 1.1"/>
<line x1="102.47" y1="394.3" x2="109.67" y2="394.3" stroke="#333" stroke-width="0.5" />
<rect x="122.48" y="368.9" width="7.6" height="23.6" rx="0.8" fill="#171717" stroke="#343434" stroke-width=".6"/>
<rect x="124.08" y="370.7" width="4.4" height="20" rx="0.4" fill="#1f1f1f" />
<line x1="125.28" y1="371.8" x2="125.28" y2="389.8" stroke="#343434" stroke-width="0.7" stroke-dasharray=".9 1.1"/>
<line x1="127.28" y1="371.8" x2="127.28" y2="389.8" stroke="#343434" stroke-width="0.7" stroke-dasharray=".9 1.1"/>
<line x1="122.68" y1="394.3" x2="129.88" y2="394.3" stroke="#333" stroke-width="0.5" />
<rect x="142.69" y="368.9" width="7.6" height="23.6" rx="0.8" fill="#171717" stroke="#343434" stroke-width=".6"/>
<rect x="144.29" y="370.7" width="4.4" height="20" rx="0.4" fill="#1f1f1f" />
<line x1="145.49" y1="371.8" x2="145.49" y2="389.8" stroke="#343434" stroke-width="0.7" stroke-dasharray=".9 1.1"/>
<line x1="147.49" y1="371.8" x2="147.49" y2="389.8" stroke="#343434" stroke-width="0.7" stroke-dasharray=".9 1.1"/>
<line x1="142.89" y1="394.3" x2="150.09" y2="394.3" stroke="#333" stroke-width="0.5" />
<rect x="162.9" y="368.9" width="7.6" height="23.6" rx="0.8" fill="#171717" stroke="#343434" stroke-width=".6"/>
<rect x="164.5" y="370.7" width="4.4" height="20" rx="0.4" fill="#1f1f1f" />
<line x1="165.7" y1="371.8" x2="165.7" y2="389.8" stroke="#343434" stroke-width="0.7" stroke-dasharray=".9 1.1"/>
<line x1="167.7" y1="371.8" x2="167.7" y2="389.8" stroke="#343434" stroke-width="0.7" stroke-dasharray=".9 1.1"/>
<line x1="163.1" y1="394.3" x2="170.3" y2="394.3" stroke="#333" stroke-width="0.5" />
<rect x="183.11" y="368.9" width="7.6" height="23.6" rx="0.8" fill="#171717" stroke="#343434" stroke-width=".6"/>
<rect x="184.71" y="370.7" width="4.4" height="20" rx="0.4" fill="#1f1f1f" />
<line x1="185.91" y1="371.8" x2="185.91" y2="389.8" stroke="#343434" stroke-width="0.7" stroke-dasharray=".9 1.1"/>
<line x1="187.91" y1="371.8" x2="187.91" y2="389.8" stroke="#343434" stroke-width="0.7" stroke-dasharray=".9 1.1"/>
<line x1="183.31" y1="394.3" x2="190.51" y2="394.3" stroke="#333" stroke-width="0.5" />
<rect x="203.33" y="368.9" width="7.6" height="23.6" rx="0.8" fill="#171717" stroke="#343434" stroke-width=".6"/>
<rect x="204.93" y="370.7" width="4.4" height="20" rx="0.4" fill="#1f1f1f" />
<line x1="206.13" y1="371.8" x2="206.13" y2="389.8" stroke="#343434" stroke-width="0.7" stroke-dasharray=".9 1.1"/>
<line x1="208.13" y1="371.8" x2="208.13" y2="389.8" stroke="#343434" stroke-width="0.7" stroke-dasharray=".9 1.1"/>
<line x1="203.53" y1="394.3" x2="210.73" y2="394.3" stroke="#333" stroke-width="0.5" />
<rect x="223.54" y="368.9" width="7.6" height="23.6" rx="0.8" fill="#171717" stroke="#343434" stroke-width=".6"/>
<rect x="225.14" y="370.7" width="4.4" height="20" rx="0.4" fill="#1f1f1f" />
<line x1="226.34" y1="371.8" x2="226.34" y2="389.8" stroke="#343434" stroke-width="0.7" stroke-dasharray=".9 1.1"/>
<line x1="228.34" y1="371.8" x2="228.34" y2="389.8" stroke="#343434" stroke-width="0.7" stroke-dasharray=".9 1.1"/>
<line x1="223.74" y1="394.3" x2="230.94" y2="394.3" stroke="#333" stroke-width="0.5" />
<rect x="243.75" y="368.9" width="7.6" height="23.6" rx="0.8" fill="#171717" stroke="#343434" stroke-width=".6"/>
<rect x="245.35" y="370.7" width="4.4" height="20" rx="0.4" fill="#1f1f1f" />
<line x1="246.55" y1="371.8" x2="246.55" y2="389.8" stroke="#343434" stroke-width="0.7" stroke-dasharray=".9 1.1"/>
<line x1="248.55" y1="371.8" x2="248.55" y2="389.8" stroke="#343434" stroke-width="0.7" stroke-dasharray=".9 1.1"/>
<line x1="243.95" y1="394.3" x2="251.15" y2="394.3" stroke="#333" stroke-width="0.5" />
<rect x="263.96" y="368.9" width="7.6" height="23.6" rx="0.8" fill="#171717" stroke="#343434" stroke-width=".6"/>
<rect x="265.56" y="370.7" width="4.4" height="20" rx="0.4" fill="#1f1f1f" />
<line x1="266.76" y1="371.8" x2="266.76" y2="389.8" stroke="#343434" stroke-width="0.7" stroke-dasharray=".9 1.1"/>
<line x1="268.76" y1="371.8" x2="268.76" y2="389.8" stroke="#343434" stroke-width="0.7" stroke-dasharray=".9 1.1"/>
<line x1="264.16" y1="394.3" x2="271.36" y2="394.3" stroke="#333" stroke-width="0.5" />
<rect x="284.18" y="368.9" width="7.6" height="23.6" rx="0.8" fill="#171717" stroke="#343434" stroke-width=".6"/>
<rect x="285.78" y="370.7" width="4.4" height="20" rx="0.4" fill="#1f1f1f" />
<line x1="286.98" y1="371.8" x2="286.98" y2="389.8" stroke="#343434" stroke-width="0.7" stroke-dasharray=".9 1.1"/>
<line x1="288.98" y1="371.8" x2="288.98" y2="389.8" stroke="#343434" stroke-width="0.7" stroke-dasharray=".9 1.1"/>
<line x1="284.38" y1="394.3" x2="291.58" y2="394.3" stroke="#333" stroke-width="0.5" />
<rect x="304.39" y="368.9" width="7.6" height="23.6" rx="0.8" fill="#171717" stroke="#343434" stroke-width=".6"/>
<rect x="305.99" y="370.7" width="4.4" height="20" rx="0.4" fill="#1f1f1f" />
<line x1="307.19" y1="371.8" x2="307.19" y2="389.8" stroke="#343434" stroke-width="0.7" stroke-dasharray=".9 1.1"/>
<line x1="309.19" y1="371.8" x2="309.19" y2="389.8" stroke="#343434" stroke-width="0.7" stroke-dasharray=".9 1.1"/>
<line x1="304.59" y1="394.3" x2="311.79" y2="394.3" stroke="#333" stroke-width="0.5" />
<rect x="324.6" y="368.9" width="7.6" height="23.6" rx="0.8" fill="#171717" stroke="#343434" stroke-width=".6"/>
<rect x="326.2" y="370.7" width="4.4" height="20" rx="0.4" fill="#1f1f1f" />
<line x1="327.4" y1="371.8" x2="327.4" y2="389.8" stroke="#343434" stroke-width="0.7" stroke-dasharray=".9 1.1"/>
<line x1="329.4" y1="371.8" x2="329.4" y2="389.8" stroke="#343434" stroke-width="0.7" stroke-dasharray=".9 1.1"/>
<line x1="324.8" y1="394.3" x2="332" y2="394.3" stroke="#333" stroke-width="0.5" />
<rect x="344.81" y="368.9" width="7.6" height="23.6" rx="0.8" fill="#171717" stroke="#343434" stroke-width=".6"/>
<rect x="346.41" y="370.7" width="4.4" height="20" rx="0.4" fill="#1f1f1f" />
<line x1="347.61" y1="371.8" x2="347.61" y2="389.8" stroke="#343434" stroke-width="0.7" stroke-dasharray=".9 1.1"/>
<line x1="349.61" y1="371.8" x2="349.61" y2="389.8" stroke="#343434" stroke-width="0.7" stroke-dasharray=".9 1.1"/>
<line x1="345.01" y1="394.3" x2="352.21" y2="394.3" stroke="#333" stroke-width="0.5" />
<rect x="365.02" y="368.9" width="7.6" height="23.6" rx="0.8" fill="#171717" stroke="#343434" stroke-width=".6"/>
<rect x="366.62" y="370.7" width="4.4" height="20" rx="0.4" fill="#1f1f1f" />
<line x1="367.82" y1="371.8" x2="367.82" y2="389.8" stroke="#343434" stroke-width="0.7" stroke-dasharray=".9 1.1"/>
<line x1="369.82" y1="371.8" x2="369.82" y2="389.8" stroke="#343434" stroke-width="0.7" stroke-dasharray=".9 1.1"/>
<line x1="365.22" y1="394.3" x2="372.42" y2="394.3" stroke="#333" stroke-width="0.5" />
<rect x="385.24" y="368.9" width="7.6" height="23.6" rx="0.8" fill="#171717" stroke="#343434" stroke-width=".6"/>
<rect x="386.84" y="370.7" width="4.4" height="20" rx="0.4" fill="#1f1f1f" />
<line x1="388.04" y1="371.8" x2="388.04" y2="389.8" stroke="#343434" stroke-width="0.7" stroke-dasharray=".9 1.1"/>
<line x1="390.04" y1="371.8" x2="390.04" y2="389.8" stroke="#343434" stroke-width="0.7" stroke-dasharray=".9 1.1"/>
<line x1="385.44" y1="394.3" x2="392.64" y2="394.3" stroke="#333" stroke-width="0.5" />
<rect x="405.45" y="368.9" width="7.6" height="23.6" rx="0.8" fill="#171717" stroke="#343434" stroke-width=".6"/>
<rect x="407.05" y="370.7" width="4.4" height="20" rx="0.4" fill="#1f1f1f" />
<line x1="408.25" y1="371.8" x2="408.25" y2="389.8" stroke="#343434" stroke-width="0.7" stroke-dasharray=".9 1.1"/>
<line x1="410.25" y1="371.8" x2="410.25" y2="389.8" stroke="#343434" stroke-width="0.7" stroke-dasharray=".9 1.1"/>
<line x1="405.65" y1="394.3" x2="412.85" y2="394.3" stroke="#333" stroke-width="0.5" />
<rect x="425.66" y="368.9" width="7.6" height="23.6" rx="0.8" fill="#171717" stroke="#343434" stroke-width=".6"/>
<rect x="427.26" y="370.7" width="4.4" height="20" rx="0.4" fill="#1f1f1f" />
<line x1="428.46" y1="371.8" x2="428.46" y2="389.8" stroke="#343434" stroke-width="0.7" stroke-dasharray=".9 1.1"/>
<line x1="430.46" y1="371.8" x2="430.46" y2="389.8" stroke="#343434" stroke-width="0.7" stroke-dasharray=".9 1.1"/>
<line x1="425.86" y1="394.3" x2="433.06" y2="394.3" stroke="#333" stroke-width="0.5" />
<rect x="445.87" y="368.9" width="7.6" height="23.6" rx="0.8" fill="#171717" stroke="#343434" stroke-width=".6"/>
<rect x="447.47" y="370.7" width="4.4" height="20" rx="0.4" fill="#1f1f1f" />
<line x1="448.67" y1="371.8" x2="448.67" y2="389.8" stroke="#343434" stroke-width="0.7" stroke-dasharray=".9 1.1"/>
<line x1="450.67" y1="371.8" x2="450.67" y2="389.8" stroke="#343434" stroke-width="0.7" stroke-dasharray=".9 1.1"/>
<line x1="446.07" y1="394.3" x2="453.27" y2="394.3" stroke="#333" stroke-width="0.5" />
<rect x="466.08" y="368.9" width="7.6" height="23.6" rx="0.8" fill="#171717" stroke="#343434" stroke-width=".6"/>
<rect x="467.68" y="370.7" width="4.4" height="20" rx="0.4" fill="#1f1f1f" />
<line x1="468.88" y1="371.8" x2="468.88" y2="389.8" stroke="#343434" stroke-width="0.7" stroke-dasharray=".9 1.1"/>
<line x1="470.88" y1="371.8" x2="470.88" y2="389.8" stroke="#343434" stroke-width="0.7" stroke-dasharray=".9 1.1"/>
<line x1="466.28" y1="394.3" x2="473.48" y2="394.3" stroke="#333" stroke-width="0.5" />
<rect x="486.3" y="368.9" width="7.6" height="23.6" rx="0.8" fill="#171717" stroke="#343434" stroke-width=".6"/>
<rect x="487.9" y="370.7" width="4.4" height="20" rx="0.4" fill="#1f1f1f" />
<line x1="489.1" y1="371.8" x2="489.1" y2="389.8" stroke="#343434" stroke-width="0.7" stroke-dasharray=".9 1.1"/>
<line x1="491.1" y1="371.8" x2="491.1" y2="389.8" stroke="#343434" stroke-width="0.7" stroke-dasharray=".9 1.1"/>
<line x1="486.5" y1="394.3" x2="493.7" y2="394.3" stroke="#333" stroke-width="0.5" />
<rect x="506.51" y="368.9" width="7.6" height="23.6" rx="0.8" fill="#171717" stroke="#343434" stroke-width=".6"/>
<rect x="508.11" y="370.7" width="4.4" height="20" rx="0.4" fill="#1f1f1f" />
<line x1="509.31" y1="371.8" x2="509.31" y2="389.8" stroke="#343434" stroke-width="0.7" stroke-dasharray=".9 1.1"/>
<line x1="511.31" y1="371.8" x2="511.31" y2="389.8" stroke="#343434" stroke-width="0.7" stroke-dasharray=".9 1.1"/>
<line x1="506.71" y1="394.3" x2="513.91" y2="394.3" stroke="#333" stroke-width="0.5" />
<rect x="526.72" y="368.9" width="7.6" height="23.6" rx="0.8" fill="#171717" stroke="#343434" stroke-width=".6"/>
<rect x="528.32" y="370.7" width="4.4" height="20" rx="0.4" fill="#1f1f1f" />
<line x1="529.52" y1="371.8" x2="529.52" y2="389.8" stroke="#343434" stroke-width="0.7" stroke-dasharray=".9 1.1"/>
<line x1="531.52" y1="371.8" x2="531.52" y2="389.8" stroke="#343434" stroke-width="0.7" stroke-dasharray=".9 1.1"/>
<line x1="526.92" y1="394.3" x2="534.12" y2="394.3" stroke="#333" stroke-width="0.5" />
<rect x="546.93" y="368.9" width="7.6" height="23.6" rx="0.8" fill="#171717" stroke="#343434" stroke-width=".6"/>
<rect x="548.53" y="370.7" width="4.4" height="20" rx="0.4" fill="#1f1f1f" />
<line x1="549.73" y1="371.8" x2="549.73" y2="389.8" stroke="#343434" stroke-width="0.7" stroke-dasharray=".9 1.1"/>
<line x1="551.73" y1="371.8" x2="551.73" y2="389.8" stroke="#343434" stroke-width="0.7" stroke-dasharray=".9 1.1"/>
<line x1="547.13" y1="394.3" x2="554.33" y2="394.3" stroke="#333" stroke-width="0.5" />
<rect x="567.15" y="368.9" width="7.6" height="23.6" rx="0.8" fill="#171717" stroke="#343434" stroke-width=".6"/>
<rect x="568.75" y="370.7" width="4.4" height="20" rx="0.4" fill="#1f1f1f" />
<line x1="569.95" y1="371.8" x2="569.95" y2="389.8" stroke="#343434" stroke-width="0.7" stroke-dasharray=".9 1.1"/>
<line x1="571.95" y1="371.8" x2="571.95" y2="389.8" stroke="#343434" stroke-width="0.7" stroke-dasharray=".9 1.1"/>
<line x1="567.35" y1="394.3" x2="574.55" y2="394.3" stroke="#333" stroke-width="0.5" />
<rect x="587.36" y="368.9" width="7.6" height="23.6" rx="0.8" fill="#171717" stroke="#343434" stroke-width=".6"/>
<rect x="588.96" y="370.7" width="4.4" height="20" rx="0.4" fill="#1f1f1f" />
<line x1="590.16" y1="371.8" x2="590.16" y2="389.8" stroke="#343434" stroke-width="0.7" stroke-dasharray=".9 1.1"/>
<line x1="592.16" y1="371.8" x2="592.16" y2="389.8" stroke="#343434" stroke-width="0.7" stroke-dasharray=".9 1.1"/>
<line x1="587.56" y1="394.3" x2="594.76" y2="394.3" stroke="#333" stroke-width="0.5" />
<rect x="607.57" y="368.9" width="7.6" height="23.6" rx="0.8" fill="#171717" stroke="#343434" stroke-width=".6"/>
<rect x="609.17" y="370.7" width="4.4" height="20" rx="0.4" fill="#1f1f1f" />
<line x1="610.37" y1="371.8" x2="610.37" y2="389.8" stroke="#343434" stroke-width="0.7" stroke-dasharray=".9 1.1"/>
<line x1="612.37" y1="371.8" x2="612.37" y2="389.8" stroke="#343434" stroke-width="0.7" stroke-dasharray=".9 1.1"/>
<line x1="607.77" y1="394.3" x2="614.97" y2="394.3" stroke="#333" stroke-width="0.5" />
<rect x="627.78" y="368.9" width="7.6" height="23.6" rx="0.8" fill="#171717" stroke="#343434" stroke-width=".6"/>
<rect x="629.38" y="370.7" width="4.4" height="20" rx="0.4" fill="#1f1f1f" />
<line x1="630.58" y1="371.8" x2="630.58" y2="389.8" stroke="#343434" stroke-width="0.7" stroke-dasharray=".9 1.1"/>
<line x1="632.58" y1="371.8" x2="632.58" y2="389.8" stroke="#343434" stroke-width="0.7" stroke-dasharray=".9 1.1"/>
<line x1="627.98" y1="394.3" x2="635.18" y2="394.3" stroke="#333" stroke-width="0.5" />
<rect x="647.99" y="368.9" width="7.6" height="23.6" rx="0.8" fill="#171717" stroke="#343434" stroke-width=".6"/>
<rect x="649.59" y="370.7" width="4.4" height="20" rx="0.4" fill="#1f1f1f" />
<line x1="650.79" y1="371.8" x2="650.79" y2="389.8" stroke="#343434" stroke-width="0.7" stroke-dasharray=".9 1.1"/>
<line x1="652.79" y1="371.8" x2="652.79" y2="389.8" stroke="#343434" stroke-width="0.7" stroke-dasharray=".9 1.1"/>
<line x1="648.19" y1="394.3" x2="655.39" y2="394.3" stroke="#333" stroke-width="0.5" />
<rect x="668.21" y="368.9" width="7.6" height="23.6" rx="0.8" fill="#171717" stroke="#343434" stroke-width=".6"/>
<rect x="669.81" y="370.7" width="4.4" height="20" rx="0.4" fill="#1f1f1f" />
<line x1="671.01" y1="371.8" x2="671.01" y2="389.8" stroke="#343434" stroke-width="0.7" stroke-dasharray=".9 1.1"/>
<line x1="673.01" y1="371.8" x2="673.01" y2="389.8" stroke="#343434" stroke-width="0.7" stroke-dasharray=".9 1.1"/>
<line x1="668.41" y1="394.3" x2="675.61" y2="394.3" stroke="#333" stroke-width="0.5" />
<rect x="688.42" y="368.9" width="7.6" height="23.6" rx="0.8" fill="#171717" stroke="#343434" stroke-width=".6"/>
<rect x="690.02" y="370.7" width="4.4" height="20" rx="0.4" fill="#1f1f1f" />
<line x1="691.22" y1="371.8" x2="691.22" y2="389.8" stroke="#343434" stroke-width="0.7" stroke-dasharray=".9 1.1"/>
<line x1="693.22" y1="371.8" x2="693.22" y2="389.8" stroke="#343434" stroke-width="0.7" stroke-dasharray=".9 1.1"/>
<line x1="688.62" y1="394.3" x2="695.82" y2="394.3" stroke="#333" stroke-width="0.5" />
<rect x="708.63" y="368.9" width="7.6" height="23.6" rx="0.8" fill="#171717" stroke="#343434" stroke-width=".6"/>
<rect x="710.23" y="370.7" width="4.4" height="20" rx="0.4" fill="#1f1f1f" />
<line x1="711.43" y1="371.8" x2="711.43" y2="389.8" stroke="#343434" stroke-width="0.7" stroke-dasharray=".9 1.1"/>
<line x1="713.43" y1="371.8" x2="713.43" y2="389.8" stroke="#343434" stroke-width="0.7" stroke-dasharray=".9 1.1"/>
<line x1="708.83" y1="394.3" x2="716.03" y2="394.3" stroke="#333" stroke-width="0.5" />
<rect x="728.84" y="368.9" width="7.6" height="23.6" rx="0.8" fill="#171717" stroke="#343434" stroke-width=".6"/>
<rect x="730.44" y="370.7" width="4.4" height="20" rx="0.4" fill="#1f1f1f" />
<line x1="731.64" y1="371.8" x2="731.64" y2="389.8" stroke="#343434" stroke-width="0.7" stroke-dasharray=".9 1.1"/>
<line x1="733.64" y1="371.8" x2="733.64" y2="389.8" stroke="#343434" stroke-width="0.7" stroke-dasharray=".9 1.1"/>
<line x1="729.04" y1="394.3" x2="736.24" y2="394.3" stroke="#333" stroke-width="0.5" />
<rect x="749.06" y="368.9" width="7.6" height="23.6" rx="0.8" fill="#171717" stroke="#343434" stroke-width=".6"/>
<rect x="750.66" y="370.7" width="4.4" height="20" rx="0.4" fill="#1f1f1f" />
<line x1="751.86" y1="371.8" x2="751.86" y2="389.8" stroke="#343434" stroke-width="0.7" stroke-dasharray=".9 1.1"/>
<line x1="753.86" y1="371.8" x2="753.86" y2="389.8" stroke="#343434" stroke-width="0.7" stroke-dasharray=".9 1.1"/>
<line x1="749.26" y1="394.3" x2="756.46" y2="394.3" stroke="#333" stroke-width="0.5" />
<rect x="769.27" y="368.9" width="7.6" height="23.6" rx="0.8" fill="#171717" stroke="#343434" stroke-width=".6"/>
<rect x="770.87" y="370.7" width="4.4" height="20" rx="0.4" fill="#1f1f1f" />
<line x1="772.07" y1="371.8" x2="772.07" y2="389.8" stroke="#343434" stroke-width="0.7" stroke-dasharray=".9 1.1"/>
<line x1="774.07" y1="371.8" x2="774.07" y2="389.8" stroke="#343434" stroke-width="0.7" stroke-dasharray=".9 1.1"/>
<line x1="769.47" y1="394.3" x2="776.67" y2="394.3" stroke="#333" stroke-width="0.5" />
<rect x="789.48" y="368.9" width="7.6" height="23.6" rx="0.8" fill="#171717" stroke="#343434" stroke-width=".6"/>
<rect x="791.08" y="370.7" width="4.4" height="20" rx="0.4" fill="#1f1f1f" />
<line x1="792.28" y1="371.8" x2="792.28" y2="389.8" stroke="#343434" stroke-width="0.7" stroke-dasharray=".9 1.1"/>
<line x1="794.28" y1="371.8" x2="794.28" y2="389.8" stroke="#343434" stroke-width="0.7" stroke-dasharray=".9 1.1"/>
<line x1="789.68" y1="394.3" x2="796.88" y2="394.3" stroke="#333" stroke-width="0.5" />
<rect x="809.69" y="368.9" width="7.6" height="23.6" rx="0.8" fill="#171717" stroke="#343434" stroke-width=".6"/>
<rect x="811.29" y="370.7" width="4.4" height="20" rx="0.4" fill="#1f1f1f" />
<line x1="812.49" y1="371.8" x2="812.49" y2="389.8" stroke="#343434" stroke-width="0.7" stroke-dasharray=".9 1.1"/>
<line x1="814.49" y1="371.8" x2="814.49" y2="389.8" stroke="#343434" stroke-width="0.7" stroke-dasharray=".9 1.1"/>
<line x1="809.89" y1="394.3" x2="817.09" y2="394.3" stroke="#333" stroke-width="0.5" />
<rect x="829.9" y="368.9" width="7.6" height="23.6" rx="0.8" fill="#171717" stroke="#343434" stroke-width=".6"/>
<rect x="831.5" y="370.7" width="4.4" height="20" rx="0.4" fill="#1f1f1f" />
<line x1="832.7" y1="371.8" x2="832.7" y2="389.8" stroke="#343434" stroke-width="0.7" stroke-dasharray=".9 1.1"/>
<line x1="834.7" y1="371.8" x2="834.7" y2="389.8" stroke="#343434" stroke-width="0.7" stroke-dasharray=".9 1.1"/>
<line x1="830.1" y1="394.3" x2="837.3" y2="394.3" stroke="#333" stroke-width="0.5" />
<rect x="850.12" y="368.9" width="7.6" height="23.6" rx="0.8" fill="#171717" stroke="#343434" stroke-width=".6"/>
<rect x="851.72" y="370.7" width="4.4" height="20" rx="0.4" fill="#1f1f1f" />
<line x1="852.92" y1="371.8" x2="852.92" y2="389.8" stroke="#343434" stroke-width="0.7" stroke-dasharray=".9 1.1"/>
<line x1="854.92" y1="371.8" x2="854.92" y2="389.8" stroke="#343434" stroke-width="0.7" stroke-dasharray=".9 1.1"/>
<line x1="850.32" y1="394.3" x2="857.52" y2="394.3" stroke="#333" stroke-width="0.5" />
<rect x="49.13" y="370.9" width="12.6" height="0.6" rx="0" fill="#343434" />
<circle cx="55.43" cy="368.5" r="1.5" fill="#1c1c1c" stroke="#3c3c3c" stroke-width=".55"/>
<circle cx="55.43" cy="391.7" r="1.5" fill="#1c1c1c" stroke="#3c3c3c" stroke-width=".55"/>
<rect x="150.2" y="370.9" width="12.6" height="0.6" rx="0" fill="#343434" />
<circle cx="156.5" cy="368.5" r="1.5" fill="#1c1c1c" stroke="#3c3c3c" stroke-width=".55"/>
<circle cx="156.5" cy="391.7" r="1.5" fill="#1c1c1c" stroke="#3c3c3c" stroke-width=".55"/>
<rect x="251.26" y="370.9" width="12.6" height="0.6" rx="0" fill="#343434" />
<circle cx="257.56" cy="368.5" r="1.5" fill="#1c1c1c" stroke="#3c3c3c" stroke-width=".55"/>
<circle cx="257.56" cy="391.7" r="1.5" fill="#1c1c1c" stroke="#3c3c3c" stroke-width=".55"/>
<rect x="352.32" y="370.9" width="12.6" height="0.6" rx="0" fill="#343434" />
<circle cx="358.62" cy="368.5" r="1.5" fill="#1c1c1c" stroke="#3c3c3c" stroke-width=".55"/>
<circle cx="358.62" cy="391.7" r="1.5" fill="#1c1c1c" stroke="#3c3c3c" stroke-width=".55"/>
<rect x="453.38" y="370.9" width="12.6" height="0.6" rx="0" fill="#343434" />
<circle cx="459.68" cy="368.5" r="1.5" fill="#1c1c1c" stroke="#3c3c3c" stroke-width=".55"/>
<circle cx="459.68" cy="391.7" r="1.5" fill="#1c1c1c" stroke="#3c3c3c" stroke-width=".55"/>
<rect x="554.44" y="370.9" width="12.6" height="0.6" rx="0" fill="#343434" />
<circle cx="560.74" cy="368.5" r="1.5" fill="#1c1c1c" stroke="#3c3c3c" stroke-width=".55"/>
<circle cx="560.74" cy="391.7" r="1.5" fill="#1c1c1c" stroke="#3c3c3c" stroke-width=".55"/>
<rect x="655.5" y="370.9" width="12.6" height="0.6" rx="0" fill="#343434" />
<circle cx="661.8" cy="368.5" r="1.5" fill="#1c1c1c" stroke="#3c3c3c" stroke-width=".55"/>
<circle cx="661.8" cy="391.7" r="1.5" fill="#1c1c1c" stroke="#3c3c3c" stroke-width=".55"/>
<rect x="756.56" y="370.9" width="12.6" height="0.6" rx="0" fill="#343434" />
<circle cx="762.86" cy="368.5" r="1.5" fill="#1c1c1c" stroke="#3c3c3c" stroke-width=".55"/>
<circle cx="762.86" cy="391.7" r="1.5" fill="#1c1c1c" stroke="#3c3c3c" stroke-width=".55"/>
<rect x="857.62" y="370.9" width="12.6" height="0.6" rx="0" fill="#343434" />
<circle cx="863.92" cy="368.5" r="1.5" fill="#1c1c1c" stroke="#3c3c3c" stroke-width=".55"/>
<circle cx="863.92" cy="391.7" r="1.5" fill="#1c1c1c" stroke="#3c3c3c" stroke-width=".55"/>
<rect x="28" y="493.2" width="844" height="30.5" rx="0" fill="#232323" />
<rect x="28" y="493.2" width="844" height="1" rx="0" fill="#1e1e1e" />
<rect x="28" y="499" width="844" height="2.3" rx="0" fill="#2a2a2a" />
<rect x="28" y="502" width="844" height="5.4" rx="0" fill="#272727" />
<rect x="28" y="508.3" width="844" height="5.3" rx="0" fill="#2e2e2e" />
<rect x="28" y="514.5" width="844" height="1.4" rx="0" fill="#2b2b2b" />
<rect x="21.42" y="496.9" width="7.6" height="23.6" rx="0.8" fill="#171717" stroke="#343434" stroke-width=".6"/>
<rect x="23.02" y="498.7" width="4.4" height="20" rx="0.4" fill="#1f1f1f" />
<line x1="24.22" y1="499.8" x2="24.22" y2="517.8" stroke="#343434" stroke-width="0.7" stroke-dasharray=".9 1.1"/>
<line x1="26.22" y1="499.8" x2="26.22" y2="517.8" stroke="#343434" stroke-width="0.7" stroke-dasharray=".9 1.1"/>
<line x1="21.62" y1="522.3" x2="28.82" y2="522.3" stroke="#333" stroke-width="0.5" />
<rect x="41.63" y="496.9" width="7.6" height="23.6" rx="0.8" fill="#171717" stroke="#343434" stroke-width=".6"/>
<rect x="43.23" y="498.7" width="4.4" height="20" rx="0.4" fill="#1f1f1f" />
<line x1="44.43" y1="499.8" x2="44.43" y2="517.8" stroke="#343434" stroke-width="0.7" stroke-dasharray=".9 1.1"/>
<line x1="46.43" y1="499.8" x2="46.43" y2="517.8" stroke="#343434" stroke-width="0.7" stroke-dasharray=".9 1.1"/>
<line x1="41.83" y1="522.3" x2="49.03" y2="522.3" stroke="#333" stroke-width="0.5" />
<rect x="61.84" y="496.9" width="7.6" height="23.6" rx="0.8" fill="#171717" stroke="#343434" stroke-width=".6"/>
<rect x="63.44" y="498.7" width="4.4" height="20" rx="0.4" fill="#1f1f1f" />
<line x1="64.64" y1="499.8" x2="64.64" y2="517.8" stroke="#343434" stroke-width="0.7" stroke-dasharray=".9 1.1"/>
<line x1="66.64" y1="499.8" x2="66.64" y2="517.8" stroke="#343434" stroke-width="0.7" stroke-dasharray=".9 1.1"/>
<line x1="62.04" y1="522.3" x2="69.24" y2="522.3" stroke="#333" stroke-width="0.5" />
<rect x="82.05" y="496.9" width="7.6" height="23.6" rx="0.8" fill="#171717" stroke="#343434" stroke-width=".6"/>
<rect x="83.65" y="498.7" width="4.4" height="20" rx="0.4" fill="#1f1f1f" />
<line x1="84.85" y1="499.8" x2="84.85" y2="517.8" stroke="#343434" stroke-width="0.7" stroke-dasharray=".9 1.1"/>
<line x1="86.85" y1="499.8" x2="86.85" y2="517.8" stroke="#343434" stroke-width="0.7" stroke-dasharray=".9 1.1"/>
<line x1="82.25" y1="522.3" x2="89.45" y2="522.3" stroke="#333" stroke-width="0.5" />
<rect x="102.27" y="496.9" width="7.6" height="23.6" rx="0.8" fill="#171717" stroke="#343434" stroke-width=".6"/>
<rect x="103.87" y="498.7" width="4.4" height="20" rx="0.4" fill="#1f1f1f" />
<line x1="105.07" y1="499.8" x2="105.07" y2="517.8" stroke="#343434" stroke-width="0.7" stroke-dasharray=".9 1.1"/>
<line x1="107.07" y1="499.8" x2="107.07" y2="517.8" stroke="#343434" stroke-width="0.7" stroke-dasharray=".9 1.1"/>
<line x1="102.47" y1="522.3" x2="109.67" y2="522.3" stroke="#333" stroke-width="0.5" />
<rect x="122.48" y="496.9" width="7.6" height="23.6" rx="0.8" fill="#171717" stroke="#343434" stroke-width=".6"/>
<rect x="124.08" y="498.7" width="4.4" height="20" rx="0.4" fill="#1f1f1f" />
<line x1="125.28" y1="499.8" x2="125.28" y2="517.8" stroke="#343434" stroke-width="0.7" stroke-dasharray=".9 1.1"/>
<line x1="127.28" y1="499.8" x2="127.28" y2="517.8" stroke="#343434" stroke-width="0.7" stroke-dasharray=".9 1.1"/>
<line x1="122.68" y1="522.3" x2="129.88" y2="522.3" stroke="#333" stroke-width="0.5" />
<rect x="142.69" y="496.9" width="7.6" height="23.6" rx="0.8" fill="#171717" stroke="#343434" stroke-width=".6"/>
<rect x="144.29" y="498.7" width="4.4" height="20" rx="0.4" fill="#1f1f1f" />
<line x1="145.49" y1="499.8" x2="145.49" y2="517.8" stroke="#343434" stroke-width="0.7" stroke-dasharray=".9 1.1"/>
<line x1="147.49" y1="499.8" x2="147.49" y2="517.8" stroke="#343434" stroke-width="0.7" stroke-dasharray=".9 1.1"/>
<line x1="142.89" y1="522.3" x2="150.09" y2="522.3" stroke="#333" stroke-width="0.5" />
<rect x="162.9" y="496.9" width="7.6" height="23.6" rx="0.8" fill="#171717" stroke="#343434" stroke-width=".6"/>
<rect x="164.5" y="498.7" width="4.4" height="20" rx="0.4" fill="#1f1f1f" />
<line x1="165.7" y1="499.8" x2="165.7" y2="517.8" stroke="#343434" stroke-width="0.7" stroke-dasharray=".9 1.1"/>
<line x1="167.7" y1="499.8" x2="167.7" y2="517.8" stroke="#343434" stroke-width="0.7" stroke-dasharray=".9 1.1"/>
<line x1="163.1" y1="522.3" x2="170.3" y2="522.3" stroke="#333" stroke-width="0.5" />
<rect x="183.11" y="496.9" width="7.6" height="23.6" rx="0.8" fill="#171717" stroke="#343434" stroke-width=".6"/>
<rect x="184.71" y="498.7" width="4.4" height="20" rx="0.4" fill="#1f1f1f" />
<line x1="185.91" y1="499.8" x2="185.91" y2="517.8" stroke="#343434" stroke-width="0.7" stroke-dasharray=".9 1.1"/>
<line x1="187.91" y1="499.8" x2="187.91" y2="517.8" stroke="#343434" stroke-width="0.7" stroke-dasharray=".9 1.1"/>
<line x1="183.31" y1="522.3" x2="190.51" y2="522.3" stroke="#333" stroke-width="0.5" />
<rect x="203.33" y="496.9" width="7.6" height="23.6" rx="0.8" fill="#171717" stroke="#343434" stroke-width=".6"/>
<rect x="204.93" y="498.7" width="4.4" height="20" rx="0.4" fill="#1f1f1f" />
<line x1="206.13" y1="499.8" x2="206.13" y2="517.8" stroke="#343434" stroke-width="0.7" stroke-dasharray=".9 1.1"/>
<line x1="208.13" y1="499.8" x2="208.13" y2="517.8" stroke="#343434" stroke-width="0.7" stroke-dasharray=".9 1.1"/>
<line x1="203.53" y1="522.3" x2="210.73" y2="522.3" stroke="#333" stroke-width="0.5" />
<rect x="223.54" y="496.9" width="7.6" height="23.6" rx="0.8" fill="#171717" stroke="#343434" stroke-width=".6"/>
<rect x="225.14" y="498.7" width="4.4" height="20" rx="0.4" fill="#1f1f1f" />
<line x1="226.34" y1="499.8" x2="226.34" y2="517.8" stroke="#343434" stroke-width="0.7" stroke-dasharray=".9 1.1"/>
<line x1="228.34" y1="499.8" x2="228.34" y2="517.8" stroke="#343434" stroke-width="0.7" stroke-dasharray=".9 1.1"/>
<line x1="223.74" y1="522.3" x2="230.94" y2="522.3" stroke="#333" stroke-width="0.5" />
<rect x="243.75" y="496.9" width="7.6" height="23.6" rx="0.8" fill="#171717" stroke="#343434" stroke-width=".6"/>
<rect x="245.35" y="498.7" width="4.4" height="20" rx="0.4" fill="#1f1f1f" />
<line x1="246.55" y1="499.8" x2="246.55" y2="517.8" stroke="#343434" stroke-width="0.7" stroke-dasharray=".9 1.1"/>
<line x1="248.55" y1="499.8" x2="248.55" y2="517.8" stroke="#343434" stroke-width="0.7" stroke-dasharray=".9 1.1"/>
<line x1="243.95" y1="522.3" x2="251.15" y2="522.3" stroke="#333" stroke-width="0.5" />
<rect x="263.96" y="496.9" width="7.6" height="23.6" rx="0.8" fill="#171717" stroke="#343434" stroke-width=".6"/>
<rect x="265.56" y="498.7" width="4.4" height="20" rx="0.4" fill="#1f1f1f" />
<line x1="266.76" y1="499.8" x2="266.76" y2="517.8" stroke="#343434" stroke-width="0.7" stroke-dasharray=".9 1.1"/>
<line x1="268.76" y1="499.8" x2="268.76" y2="517.8" stroke="#343434" stroke-width="0.7" stroke-dasharray=".9 1.1"/>
<line x1="264.16" y1="522.3" x2="271.36" y2="522.3" stroke="#333" stroke-width="0.5" />
<rect x="284.18" y="496.9" width="7.6" height="23.6" rx="0.8" fill="#171717" stroke="#343434" stroke-width=".6"/>
<rect x="285.78" y="498.7" width="4.4" height="20" rx="0.4" fill="#1f1f1f" />
<line x1="286.98" y1="499.8" x2="286.98" y2="517.8" stroke="#343434" stroke-width="0.7" stroke-dasharray=".9 1.1"/>
<line x1="288.98" y1="499.8" x2="288.98" y2="517.8" stroke="#343434" stroke-width="0.7" stroke-dasharray=".9 1.1"/>
<line x1="284.38" y1="522.3" x2="291.58" y2="522.3" stroke="#333" stroke-width="0.5" />
<rect x="304.39" y="496.9" width="7.6" height="23.6" rx="0.8" fill="#171717" stroke="#343434" stroke-width=".6"/>
<rect x="305.99" y="498.7" width="4.4" height="20" rx="0.4" fill="#1f1f1f" />
<line x1="307.19" y1="499.8" x2="307.19" y2="517.8" stroke="#343434" stroke-width="0.7" stroke-dasharray=".9 1.1"/>
<line x1="309.19" y1="499.8" x2="309.19" y2="517.8" stroke="#343434" stroke-width="0.7" stroke-dasharray=".9 1.1"/>
<line x1="304.59" y1="522.3" x2="311.79" y2="522.3" stroke="#333" stroke-width="0.5" />
<rect x="324.6" y="496.9" width="7.6" height="23.6" rx="0.8" fill="#171717" stroke="#343434" stroke-width=".6"/>
<rect x="326.2" y="498.7" width="4.4" height="20" rx="0.4" fill="#1f1f1f" />
<line x1="327.4" y1="499.8" x2="327.4" y2="517.8" stroke="#343434" stroke-width="0.7" stroke-dasharray=".9 1.1"/>
<line x1="329.4" y1="499.8" x2="329.4" y2="517.8" stroke="#343434" stroke-width="0.7" stroke-dasharray=".9 1.1"/>
<line x1="324.8" y1="522.3" x2="332" y2="522.3" stroke="#333" stroke-width="0.5" />
<rect x="344.81" y="496.9" width="7.6" height="23.6" rx="0.8" fill="#171717" stroke="#343434" stroke-width=".6"/>
<rect x="346.41" y="498.7" width="4.4" height="20" rx="0.4" fill="#1f1f1f" />
<line x1="347.61" y1="499.8" x2="347.61" y2="517.8" stroke="#343434" stroke-width="0.7" stroke-dasharray=".9 1.1"/>
<line x1="349.61" y1="499.8" x2="349.61" y2="517.8" stroke="#343434" stroke-width="0.7" stroke-dasharray=".9 1.1"/>
<line x1="345.01" y1="522.3" x2="352.21" y2="522.3" stroke="#333" stroke-width="0.5" />
<rect x="365.02" y="496.9" width="7.6" height="23.6" rx="0.8" fill="#171717" stroke="#343434" stroke-width=".6"/>
<rect x="366.62" y="498.7" width="4.4" height="20" rx="0.4" fill="#1f1f1f" />
<line x1="367.82" y1="499.8" x2="367.82" y2="517.8" stroke="#343434" stroke-width="0.7" stroke-dasharray=".9 1.1"/>
<line x1="369.82" y1="499.8" x2="369.82" y2="517.8" stroke="#343434" stroke-width="0.7" stroke-dasharray=".9 1.1"/>
<line x1="365.22" y1="522.3" x2="372.42" y2="522.3" stroke="#333" stroke-width="0.5" />
<rect x="385.24" y="496.9" width="7.6" height="23.6" rx="0.8" fill="#171717" stroke="#343434" stroke-width=".6"/>
<rect x="386.84" y="498.7" width="4.4" height="20" rx="0.4" fill="#1f1f1f" />
<line x1="388.04" y1="499.8" x2="388.04" y2="517.8" stroke="#343434" stroke-width="0.7" stroke-dasharray=".9 1.1"/>
<line x1="390.04" y1="499.8" x2="390.04" y2="517.8" stroke="#343434" stroke-width="0.7" stroke-dasharray=".9 1.1"/>
<line x1="385.44" y1="522.3" x2="392.64" y2="522.3" stroke="#333" stroke-width="0.5" />
<rect x="405.45" y="496.9" width="7.6" height="23.6" rx="0.8" fill="#171717" stroke="#343434" stroke-width=".6"/>
<rect x="407.05" y="498.7" width="4.4" height="20" rx="0.4" fill="#1f1f1f" />
<line x1="408.25" y1="499.8" x2="408.25" y2="517.8" stroke="#343434" stroke-width="0.7" stroke-dasharray=".9 1.1"/>
<line x1="410.25" y1="499.8" x2="410.25" y2="517.8" stroke="#343434" stroke-width="0.7" stroke-dasharray=".9 1.1"/>
<line x1="405.65" y1="522.3" x2="412.85" y2="522.3" stroke="#333" stroke-width="0.5" />
<rect x="425.66" y="496.9" width="7.6" height="23.6" rx="0.8" fill="#171717" stroke="#343434" stroke-width=".6"/>
<rect x="427.26" y="498.7" width="4.4" height="20" rx="0.4" fill="#1f1f1f" />
<line x1="428.46" y1="499.8" x2="428.46" y2="517.8" stroke="#343434" stroke-width="0.7" stroke-dasharray=".9 1.1"/>
<line x1="430.46" y1="499.8" x2="430.46" y2="517.8" stroke="#343434" stroke-width="0.7" stroke-dasharray=".9 1.1"/>
<line x1="425.86" y1="522.3" x2="433.06" y2="522.3" stroke="#333" stroke-width="0.5" />
<rect x="445.87" y="496.9" width="7.6" height="23.6" rx="0.8" fill="#171717" stroke="#343434" stroke-width=".6"/>
<rect x="447.47" y="498.7" width="4.4" height="20" rx="0.4" fill="#1f1f1f" />
<line x1="448.67" y1="499.8" x2="448.67" y2="517.8" stroke="#343434" stroke-width="0.7" stroke-dasharray=".9 1.1"/>
<line x1="450.67" y1="499.8" x2="450.67" y2="517.8" stroke="#343434" stroke-width="0.7" stroke-dasharray=".9 1.1"/>
<line x1="446.07" y1="522.3" x2="453.27" y2="522.3" stroke="#333" stroke-width="0.5" />
<rect x="466.08" y="496.9" width="7.6" height="23.6" rx="0.8" fill="#171717" stroke="#343434" stroke-width=".6"/>
<rect x="467.68" y="498.7" width="4.4" height="20" rx="0.4" fill="#1f1f1f" />
<line x1="468.88" y1="499.8" x2="468.88" y2="517.8" stroke="#343434" stroke-width="0.7" stroke-dasharray=".9 1.1"/>
<line x1="470.88" y1="499.8" x2="470.88" y2="517.8" stroke="#343434" stroke-width="0.7" stroke-dasharray=".9 1.1"/>
<line x1="466.28" y1="522.3" x2="473.48" y2="522.3" stroke="#333" stroke-width="0.5" />
<rect x="486.3" y="496.9" width="7.6" height="23.6" rx="0.8" fill="#171717" stroke="#343434" stroke-width=".6"/>
<rect x="487.9" y="498.7" width="4.4" height="20" rx="0.4" fill="#1f1f1f" />
<line x1="489.1" y1="499.8" x2="489.1" y2="517.8" stroke="#343434" stroke-width="0.7" stroke-dasharray=".9 1.1"/>
<line x1="491.1" y1="499.8" x2="491.1" y2="517.8" stroke="#343434" stroke-width="0.7" stroke-dasharray=".9 1.1"/>
<line x1="486.5" y1="522.3" x2="493.7" y2="522.3" stroke="#333" stroke-width="0.5" />
<rect x="506.51" y="496.9" width="7.6" height="23.6" rx="0.8" fill="#171717" stroke="#343434" stroke-width=".6"/>
<rect x="508.11" y="498.7" width="4.4" height="20" rx="0.4" fill="#1f1f1f" />
<line x1="509.31" y1="499.8" x2="509.31" y2="517.8" stroke="#343434" stroke-width="0.7" stroke-dasharray=".9 1.1"/>
<line x1="511.31" y1="499.8" x2="511.31" y2="517.8" stroke="#343434" stroke-width="0.7" stroke-dasharray=".9 1.1"/>
<line x1="506.71" y1="522.3" x2="513.91" y2="522.3" stroke="#333" stroke-width="0.5" />
<rect x="526.72" y="496.9" width="7.6" height="23.6" rx="0.8" fill="#171717" stroke="#343434" stroke-width=".6"/>
<rect x="528.32" y="498.7" width="4.4" height="20" rx="0.4" fill="#1f1f1f" />
<line x1="529.52" y1="499.8" x2="529.52" y2="517.8" stroke="#343434" stroke-width="0.7" stroke-dasharray=".9 1.1"/>
<line x1="531.52" y1="499.8" x2="531.52" y2="517.8" stroke="#343434" stroke-width="0.7" stroke-dasharray=".9 1.1"/>
<line x1="526.92" y1="522.3" x2="534.12" y2="522.3" stroke="#333" stroke-width="0.5" />
<rect x="546.93" y="496.9" width="7.6" height="23.6" rx="0.8" fill="#171717" stroke="#343434" stroke-width=".6"/>
<rect x="548.53" y="498.7" width="4.4" height="20" rx="0.4" fill="#1f1f1f" />
<line x1="549.73" y1="499.8" x2="549.73" y2="517.8" stroke="#343434" stroke-width="0.7" stroke-dasharray=".9 1.1"/>
<line x1="551.73" y1="499.8" x2="551.73" y2="517.8" stroke="#343434" stroke-width="0.7" stroke-dasharray=".9 1.1"/>
<line x1="547.13" y1="522.3" x2="554.33" y2="522.3" stroke="#333" stroke-width="0.5" />
<rect x="567.15" y="496.9" width="7.6" height="23.6" rx="0.8" fill="#171717" stroke="#343434" stroke-width=".6"/>
<rect x="568.75" y="498.7" width="4.4" height="20" rx="0.4" fill="#1f1f1f" />
<line x1="569.95" y1="499.8" x2="569.95" y2="517.8" stroke="#343434" stroke-width="0.7" stroke-dasharray=".9 1.1"/>
<line x1="571.95" y1="499.8" x2="571.95" y2="517.8" stroke="#343434" stroke-width="0.7" stroke-dasharray=".9 1.1"/>
<line x1="567.35" y1="522.3" x2="574.55" y2="522.3" stroke="#333" stroke-width="0.5" />
<rect x="587.36" y="496.9" width="7.6" height="23.6" rx="0.8" fill="#171717" stroke="#343434" stroke-width=".6"/>
<rect x="588.96" y="498.7" width="4.4" height="20" rx="0.4" fill="#1f1f1f" />
<line x1="590.16" y1="499.8" x2="590.16" y2="517.8" stroke="#343434" stroke-width="0.7" stroke-dasharray=".9 1.1"/>
<line x1="592.16" y1="499.8" x2="592.16" y2="517.8" stroke="#343434" stroke-width="0.7" stroke-dasharray=".9 1.1"/>
<line x1="587.56" y1="522.3" x2="594.76" y2="522.3" stroke="#333" stroke-width="0.5" />
<rect x="607.57" y="496.9" width="7.6" height="23.6" rx="0.8" fill="#171717" stroke="#343434" stroke-width=".6"/>
<rect x="609.17" y="498.7" width="4.4" height="20" rx="0.4" fill="#1f1f1f" />
<line x1="610.37" y1="499.8" x2="610.37" y2="517.8" stroke="#343434" stroke-width="0.7" stroke-dasharray=".9 1.1"/>
<line x1="612.37" y1="499.8" x2="612.37" y2="517.8" stroke="#343434" stroke-width="0.7" stroke-dasharray=".9 1.1"/>
<line x1="607.77" y1="522.3" x2="614.97" y2="522.3" stroke="#333" stroke-width="0.5" />
<rect x="627.78" y="496.9" width="7.6" height="23.6" rx="0.8" fill="#171717" stroke="#343434" stroke-width=".6"/>
<rect x="629.38" y="498.7" width="4.4" height="20" rx="0.4" fill="#1f1f1f" />
<line x1="630.58" y1="499.8" x2="630.58" y2="517.8" stroke="#343434" stroke-width="0.7" stroke-dasharray=".9 1.1"/>
<line x1="632.58" y1="499.8" x2="632.58" y2="517.8" stroke="#343434" stroke-width="0.7" stroke-dasharray=".9 1.1"/>
<line x1="627.98" y1="522.3" x2="635.18" y2="522.3" stroke="#333" stroke-width="0.5" />
<rect x="647.99" y="496.9" width="7.6" height="23.6" rx="0.8" fill="#171717" stroke="#343434" stroke-width=".6"/>
<rect x="649.59" y="498.7" width="4.4" height="20" rx="0.4" fill="#1f1f1f" />
<line x1="650.79" y1="499.8" x2="650.79" y2="517.8" stroke="#343434" stroke-width="0.7" stroke-dasharray=".9 1.1"/>
<line x1="652.79" y1="499.8" x2="652.79" y2="517.8" stroke="#343434" stroke-width="0.7" stroke-dasharray=".9 1.1"/>
<line x1="648.19" y1="522.3" x2="655.39" y2="522.3" stroke="#333" stroke-width="0.5" />
<rect x="668.21" y="496.9" width="7.6" height="23.6" rx="0.8" fill="#171717" stroke="#343434" stroke-width=".6"/>
<rect x="669.81" y="498.7" width="4.4" height="20" rx="0.4" fill="#1f1f1f" />
<line x1="671.01" y1="499.8" x2="671.01" y2="517.8" stroke="#343434" stroke-width="0.7" stroke-dasharray=".9 1.1"/>
<line x1="673.01" y1="499.8" x2="673.01" y2="517.8" stroke="#343434" stroke-width="0.7" stroke-dasharray=".9 1.1"/>
<line x1="668.41" y1="522.3" x2="675.61" y2="522.3" stroke="#333" stroke-width="0.5" />
<rect x="688.42" y="496.9" width="7.6" height="23.6" rx="0.8" fill="#171717" stroke="#343434" stroke-width=".6"/>
<rect x="690.02" y="498.7" width="4.4" height="20" rx="0.4" fill="#1f1f1f" />
<line x1="691.22" y1="499.8" x2="691.22" y2="517.8" stroke="#343434" stroke-width="0.7" stroke-dasharray=".9 1.1"/>
<line x1="693.22" y1="499.8" x2="693.22" y2="517.8" stroke="#343434" stroke-width="0.7" stroke-dasharray=".9 1.1"/>
<line x1="688.62" y1="522.3" x2="695.82" y2="522.3" stroke="#333" stroke-width="0.5" />
<rect x="708.63" y="496.9" width="7.6" height="23.6" rx="0.8" fill="#171717" stroke="#343434" stroke-width=".6"/>
<rect x="710.23" y="498.7" width="4.4" height="20" rx="0.4" fill="#1f1f1f" />
<line x1="711.43" y1="499.8" x2="711.43" y2="517.8" stroke="#343434" stroke-width="0.7" stroke-dasharray=".9 1.1"/>
<line x1="713.43" y1="499.8" x2="713.43" y2="517.8" stroke="#343434" stroke-width="0.7" stroke-dasharray=".9 1.1"/>
<line x1="708.83" y1="522.3" x2="716.03" y2="522.3" stroke="#333" stroke-width="0.5" />
<rect x="728.84" y="496.9" width="7.6" height="23.6" rx="0.8" fill="#171717" stroke="#343434" stroke-width=".6"/>
<rect x="730.44" y="498.7" width="4.4" height="20" rx="0.4" fill="#1f1f1f" />
<line x1="731.64" y1="499.8" x2="731.64" y2="517.8" stroke="#343434" stroke-width="0.7" stroke-dasharray=".9 1.1"/>
<line x1="733.64" y1="499.8" x2="733.64" y2="517.8" stroke="#343434" stroke-width="0.7" stroke-dasharray=".9 1.1"/>
<line x1="729.04" y1="522.3" x2="736.24" y2="522.3" stroke="#333" stroke-width="0.5" />
<rect x="749.06" y="496.9" width="7.6" height="23.6" rx="0.8" fill="#171717" stroke="#343434" stroke-width=".6"/>
<rect x="750.66" y="498.7" width="4.4" height="20" rx="0.4" fill="#1f1f1f" />
<line x1="751.86" y1="499.8" x2="751.86" y2="517.8" stroke="#343434" stroke-width="0.7" stroke-dasharray=".9 1.1"/>
<line x1="753.86" y1="499.8" x2="753.86" y2="517.8" stroke="#343434" stroke-width="0.7" stroke-dasharray=".9 1.1"/>
<line x1="749.26" y1="522.3" x2="756.46" y2="522.3" stroke="#333" stroke-width="0.5" />
<rect x="769.27" y="496.9" width="7.6" height="23.6" rx="0.8" fill="#171717" stroke="#343434" stroke-width=".6"/>
<rect x="770.87" y="498.7" width="4.4" height="20" rx="0.4" fill="#1f1f1f" />
<line x1="772.07" y1="499.8" x2="772.07" y2="517.8" stroke="#343434" stroke-width="0.7" stroke-dasharray=".9 1.1"/>
<line x1="774.07" y1="499.8" x2="774.07" y2="517.8" stroke="#343434" stroke-width="0.7" stroke-dasharray=".9 1.1"/>
<line x1="769.47" y1="522.3" x2="776.67" y2="522.3" stroke="#333" stroke-width="0.5" />
<rect x="789.48" y="496.9" width="7.6" height="23.6" rx="0.8" fill="#171717" stroke="#343434" stroke-width=".6"/>
<rect x="791.08" y="498.7" width="4.4" height="20" rx="0.4" fill="#1f1f1f" />
<line x1="792.28" y1="499.8" x2="792.28" y2="517.8" stroke="#343434" stroke-width="0.7" stroke-dasharray=".9 1.1"/>
<line x1="794.28" y1="499.8" x2="794.28" y2="517.8" stroke="#343434" stroke-width="0.7" stroke-dasharray=".9 1.1"/>
<line x1="789.68" y1="522.3" x2="796.88" y2="522.3" stroke="#333" stroke-width="0.5" />
<rect x="809.69" y="496.9" width="7.6" height="23.6" rx="0.8" fill="#171717" stroke="#343434" stroke-width=".6"/>
<rect x="811.29" y="498.7" width="4.4" height="20" rx="0.4" fill="#1f1f1f" />
<line x1="812.49" y1="499.8" x2="812.49" y2="517.8" stroke="#343434" stroke-width="0.7" stroke-dasharray=".9 1.1"/>
<line x1="814.49" y1="499.8" x2="814.49" y2="517.8" stroke="#343434" stroke-width="0.7" stroke-dasharray=".9 1.1"/>
<line x1="809.89" y1="522.3" x2="817.09" y2="522.3" stroke="#333" stroke-width="0.5" />
<rect x="829.9" y="496.9" width="7.6" height="23.6" rx="0.8" fill="#171717" stroke="#343434" stroke-width=".6"/>
<rect x="831.5" y="498.7" width="4.4" height="20" rx="0.4" fill="#1f1f1f" />
<line x1="832.7" y1="499.8" x2="832.7" y2="517.8" stroke="#343434" stroke-width="0.7" stroke-dasharray=".9 1.1"/>
<line x1="834.7" y1="499.8" x2="834.7" y2="517.8" stroke="#343434" stroke-width="0.7" stroke-dasharray=".9 1.1"/>
<line x1="830.1" y1="522.3" x2="837.3" y2="522.3" stroke="#333" stroke-width="0.5" />
<rect x="850.12" y="496.9" width="7.6" height="23.6" rx="0.8" fill="#171717" stroke="#343434" stroke-width=".6"/>
<rect x="851.72" y="498.7" width="4.4" height="20" rx="0.4" fill="#1f1f1f" />
<line x1="852.92" y1="499.8" x2="852.92" y2="517.8" stroke="#343434" stroke-width="0.7" stroke-dasharray=".9 1.1"/>
<line x1="854.92" y1="499.8" x2="854.92" y2="517.8" stroke="#343434" stroke-width="0.7" stroke-dasharray=".9 1.1"/>
<line x1="850.32" y1="522.3" x2="857.52" y2="522.3" stroke="#333" stroke-width="0.5" />
<rect x="49.13" y="498.9" width="12.6" height="0.6" rx="0" fill="#343434" />
<circle cx="55.43" cy="496.5" r="1.5" fill="#1c1c1c" stroke="#3c3c3c" stroke-width=".55"/>
<circle cx="55.43" cy="519.7" r="1.5" fill="#1c1c1c" stroke="#3c3c3c" stroke-width=".55"/>
<rect x="150.2" y="498.9" width="12.6" height="0.6" rx="0" fill="#343434" />
<circle cx="156.5" cy="496.5" r="1.5" fill="#1c1c1c" stroke="#3c3c3c" stroke-width=".55"/>
<circle cx="156.5" cy="519.7" r="1.5" fill="#1c1c1c" stroke="#3c3c3c" stroke-width=".55"/>
<rect x="251.26" y="498.9" width="12.6" height="0.6" rx="0" fill="#343434" />
<circle cx="257.56" cy="496.5" r="1.5" fill="#1c1c1c" stroke="#3c3c3c" stroke-width=".55"/>
<circle cx="257.56" cy="519.7" r="1.5" fill="#1c1c1c" stroke="#3c3c3c" stroke-width=".55"/>
<rect x="352.32" y="498.9" width="12.6" height="0.6" rx="0" fill="#343434" />
<circle cx="358.62" cy="496.5" r="1.5" fill="#1c1c1c" stroke="#3c3c3c" stroke-width=".55"/>
<circle cx="358.62" cy="519.7" r="1.5" fill="#1c1c1c" stroke="#3c3c3c" stroke-width=".55"/>
<rect x="453.38" y="498.9" width="12.6" height="0.6" rx="0" fill="#343434" />
<circle cx="459.68" cy="496.5" r="1.5" fill="#1c1c1c" stroke="#3c3c3c" stroke-width=".55"/>
<circle cx="459.68" cy="519.7" r="1.5" fill="#1c1c1c" stroke="#3c3c3c" stroke-width=".55"/>
<rect x="554.44" y="498.9" width="12.6" height="0.6" rx="0" fill="#343434" />
<circle cx="560.74" cy="496.5" r="1.5" fill="#1c1c1c" stroke="#3c3c3c" stroke-width=".55"/>
<circle cx="560.74" cy="519.7" r="1.5" fill="#1c1c1c" stroke="#3c3c3c" stroke-width=".55"/>
<rect x="655.5" y="498.9" width="12.6" height="0.6" rx="0" fill="#343434" />
<circle cx="661.8" cy="496.5" r="1.5" fill="#1c1c1c" stroke="#3c3c3c" stroke-width=".55"/>
<circle cx="661.8" cy="519.7" r="1.5" fill="#1c1c1c" stroke="#3c3c3c" stroke-width=".55"/>
<rect x="756.56" y="498.9" width="12.6" height="0.6" rx="0" fill="#343434" />
<circle cx="762.86" cy="496.5" r="1.5" fill="#1c1c1c" stroke="#3c3c3c" stroke-width=".55"/>
<circle cx="762.86" cy="519.7" r="1.5" fill="#1c1c1c" stroke="#3c3c3c" stroke-width=".55"/>
<rect x="857.62" y="498.9" width="12.6" height="0.6" rx="0" fill="#343434" />
<circle cx="863.92" cy="496.5" r="1.5" fill="#1c1c1c" stroke="#3c3c3c" stroke-width=".55"/>
<circle cx="863.92" cy="519.7" r="1.5" fill="#1c1c1c" stroke="#3c3c3c" stroke-width=".55"/>
<rect x="78.4" y="61.8" width="43.62" height="129.01" fill="#000" opacity=".62" filter="url(#msh)"/>
<rect x="118.82" y="61.8" width="48.68" height="129.01" fill="#000" opacity=".62" filter="url(#msh)"/>
<rect x="164.3" y="61.8" width="48.68" height="129.01" fill="#000" opacity=".62" filter="url(#msh)"/>
<rect x="209.78" y="61.8" width="53.73" height="129.01" fill="#000" opacity=".62" filter="url(#msh)"/>
<rect x="260.31" y="61.8" width="18.36" height="129.01" fill="#000" opacity=".62" filter="url(#msh)"/>
<rect x="275.47" y="61.8" width="53.73" height="129.01" fill="#000" opacity=".62" filter="url(#msh)"/>
<rect x="331.05" y="61.8" width="48.68" height="129.01" fill="#000" opacity=".62" filter="url(#msh)"/>
<rect x="386.64" y="61.8" width="48.68" height="129.01" fill="#000" opacity=".62" filter="url(#msh)"/>
<rect x="432.11" y="61.8" width="48.68" height="129.01" fill="#000" opacity=".62" filter="url(#msh)"/>
<rect x="477.59" y="61.8" width="48.68" height="129.01" fill="#000" opacity=".62" filter="url(#msh)"/>
<rect x="523.07" y="61.8" width="63.84" height="129.01" fill="#000" opacity=".62" filter="url(#msh)"/>
<rect x="593.81" y="189.8" width="28.47" height="129.01" fill="#000" opacity=".62" filter="url(#msh)"/>
<rect x="634.74" y="189.8" width="48.68" height="129.01" fill="#000" opacity=".62" filter="url(#msh)"/>
<rect x="108.72" y="317.8" width="48.68" height="129.01" fill="#000" opacity=".62" filter="url(#msh)"/>
<rect x="159.25" y="317.8" width="33.52" height="129.01" fill="#000" opacity=".62" filter="url(#msh)"/>
<rect x="194.62" y="317.8" width="48.68" height="129.01" fill="#000" opacity=".62" filter="url(#msh)"/>
<rect x="240.1" y="317.8" width="48.68" height="129.01" fill="#000" opacity=".62" filter="url(#msh)"/>
<rect x="285.58" y="317.8" width="48.68" height="129.01" fill="#000" opacity=".62" filter="url(#msh)"/>
<rect x="331.05" y="317.8" width="48.68" height="129.01" fill="#000" opacity=".62" filter="url(#msh)"/>
<rect x="376.53" y="317.8" width="48.68" height="129.01" fill="#000" opacity=".62" filter="url(#msh)"/>
<rect x="422.01" y="317.8" width="53.73" height="129.01" fill="#000" opacity=".62" filter="url(#msh)"/>
<rect x="472.54" y="317.8" width="48.68" height="129.01" fill="#000" opacity=".62" filter="url(#msh)"/>
<rect x="518.02" y="317.8" width="53.73" height="129.01" fill="#000" opacity=".62" filter="url(#msh)"/>
<rect x="603.92" y="317.8" width="63.84" height="129.01" fill="#000" opacity=".62" filter="url(#msh)"/>
<rect x="664.55" y="317.8" width="48.68" height="129.01" fill="#000" opacity=".62" filter="url(#msh)"/>
<rect x="28" y="0" width="844" height="5.06" rx="0" fill="url(#rail)" transform="translate(0 55.2)"/>
<rect x="28" y="0" transform="translate(0 60.3)" width="844" height="5.06" rx="0" fill="url(#rail)" />
<rect x="28" y="65.3" width="844" height="0.9" rx="0" fill="#1c1c1c" opacity=".55"/>
<rect x="28" y="0" width="844" height="5.06" rx="0" fill="url(#rail)" transform="translate(0 183.2)"/>
<rect x="28" y="0" transform="translate(0 188.3)" width="844" height="5.06" rx="0" fill="url(#rail)" />
<rect x="28" y="193.3" width="844" height="0.9" rx="0" fill="#1c1c1c" opacity=".55"/>
<rect x="28" y="0" width="844" height="5.06" rx="0" fill="url(#rail)" transform="translate(0 311.2)"/>
<rect x="28" y="0" transform="translate(0 316.3)" width="844" height="5.06" rx="0" fill="url(#rail)" />
<rect x="28" y="321.3" width="844" height="0.9" rx="0" fill="#1c1c1c" opacity=".55"/>
<rect x="28" y="0" width="844" height="5.06" rx="0" fill="url(#rail)" transform="translate(0 439.2)"/>
<rect x="28" y="0" transform="translate(0 444.3)" width="844" height="5.06" rx="0" fill="url(#rail)" />
<rect x="28" y="449.3" width="844" height="0.9" rx="0" fill="#1c1c1c" opacity=".55"/>
<g transform="translate(80 60.3) scale(0.33687)"><rect x="0" y="0" width="120" height="380" rx="0" fill="#e9e9e9" /><rect x="0" y="0" width="1.3" height="380" rx="0" fill="#f1f1f1" /><rect x="118.5" y="0" width="1.5" height="380" rx="0" fill="#bcbcbc" /><use href="#s" x="22.5" y="7.5"/><use href="#s" x="22.5" y="372.5"/><use href="#s" x="97.5" y="7.5"/><use href="#s" x="97.5" y="372.5"/><text x="60" y="27.69" font-size="13.41" fill="#1c1c1c" stroke="#1c1c1c" stroke-width=".3">MIDI · CV</text><rect x="0" y="36" width="120" height="87.5" rx="0" fill="#121212" /><line x1="0" y1="65" x2="120" y2="65" stroke="#2c2c2c" stroke-width="1.2" /><line x1="0" y1="94" x2="120" y2="94" stroke="#2c2c2c" stroke-width="1.2" /><text x="8.3" y="55.72" font-size="9.2" fill="#dcc43a" text-anchor="start" stroke="none" font-family="'Liberation Mono', monospace" textLength="110" lengthAdjust="spacingAndGlyphs">Computer keyboard/mo</text><text x="8.3" y="83.32" font-size="9.2" fill="#dcc43a" text-anchor="start" stroke="none" font-family="'Liberation Mono', monospace" textLength="110" lengthAdjust="spacingAndGlyphs">QWERTY keyboard (US)</text><text x="8.3" y="110.92" font-size="9.2" fill="#dcc43a" text-anchor="start" stroke="none" font-family="'Liberation Mono', monospace" textLength="66" lengthAdjust="spacingAndGlyphs">All channels</text><text x="60" y="150.4" font-size="8.28" stroke="#333" stroke-width=".3">FROM DEVICE</text><rect x="9.6" y="165" width="27.4" height="38.8" rx="3" fill="#161616" /><text x="23.3" y="174.9" font-size="7.73" fill="#e8e8e8" stroke="#e8e8e8" stroke-width=".3">V/OCT</text><use href="#pd" x="23.3" y="190"/><rect x="46.1" y="165" width="27.4" height="38.8" rx="3" fill="#161616" /><text x="59.8" y="174.9" font-size="7.73" fill="#e8e8e8" stroke="#e8e8e8" stroke-width=".3">GATE</text><use href="#pd" x="59.8" y="190"/><rect x="82.5" y="165" width="27.4" height="38.8" rx="3" fill="#161616" /><text x="96.2" y="174.9" font-size="7.73" fill="#e8e8e8" stroke="#e8e8e8" stroke-width=".3">VEL</text><use href="#pd" x="96.2" y="190"/><rect x="9.6" y="213" width="27.4" height="38.8" rx="3" fill="#161616" /><text x="23.3" y="222.9" font-size="7.73" fill="#e8e8e8" stroke="#e8e8e8" stroke-width=".3">AFT</text><use href="#pd" x="23.3" y="238"/><rect x="46.1" y="213" width="27.4" height="38.8" rx="3" fill="#161616" /><text x="59.8" y="222.9" font-size="7.73" fill="#e8e8e8" stroke="#e8e8e8" stroke-width=".3">PW</text><use href="#pd" x="59.8" y="238"/><rect x="82.5" y="213" width="27.4" height="38.8" rx="3" fill="#161616" /><text x="96.2" y="222.9" font-size="7.73" fill="#e8e8e8" stroke="#e8e8e8" stroke-width=".3">MW</text><use href="#pd" x="96.2" y="238"/><rect x="9.6" y="261" width="27.4" height="38.8" rx="3" fill="#161616" /><text x="23.3" y="270.9" font-size="7.73" fill="#e8e8e8" stroke="#e8e8e8" stroke-width=".3">CLK</text><use href="#pd" x="23.3" y="286"/><rect x="46.1" y="261" width="27.4" height="38.8" rx="3" fill="#161616" /><text x="59.8" y="270.9" font-size="7.73" fill="#e8e8e8" stroke="#e8e8e8" stroke-width=".3">CLK/N</text><use href="#pd" x="59.8" y="286"/><rect x="82.5" y="261" width="27.4" height="38.8" rx="3" fill="#161616" /><text x="96.2" y="270.9" font-size="7.73" fill="#e8e8e8" stroke="#e8e8e8" stroke-width=".3">RTRG</text><use href="#pd" x="96.2" y="286"/><rect x="9.6" y="309" width="27.4" height="38.8" rx="3" fill="#161616" /><text x="23.3" y="318.9" font-size="7.73" fill="#e8e8e8" stroke="#e8e8e8" stroke-width=".3">STRT</text><use href="#pd" x="23.3" y="334"/><rect x="46.1" y="309" width="27.4" height="38.8" rx="3" fill="#161616" /><text x="59.8" y="318.9" font-size="7.73" fill="#e8e8e8" stroke="#e8e8e8" stroke-width=".3">STOP</text><use href="#pd" x="59.8" y="334"/><rect x="82.5" y="309" width="27.4" height="38.8" rx="3" fill="#161616" /><text x="96.2" y="318.9" font-size="7.73" fill="#e8e8e8" stroke="#e8e8e8" stroke-width=".3">CONT</text><use href="#pd" x="96.2" y="334"/><text x="60" y="360.32" font-size="9.5" fill="#222" letter-spacing="0.4" stroke="#222" stroke-width=".3">VCV</text></g>
<g transform="translate(120.42 60.3) scale(0.33687)"><use href="#mLFO"/><circle cx="67.6" cy="90.24" r="36.6" fill="url(#shad2)" /><circle cx="67.6" cy="88" r="31.2" fill="#fcfcfc" stroke="#555" stroke-width="1"/><circle cx="67.6" cy="88" r="28" fill="url(#kb)" /><path d="M67.6 88 L95.09 93.34 A28 28 0 0 1 82.02 112 Z" fill="#fff" opacity=".09"/><path d="M67.6 88 L62.26 115.49 A28 28 0 0 1 43.6 102.42 Z" fill="#fff" opacity=".09"/><path d="M67.6 88 L40.11 82.66 A28 28 0 0 1 53.18 64 Z" fill="#fff" opacity=".09"/><path d="M67.6 88 L72.94 60.51 A28 28 0 0 1 91.6 73.58 Z" fill="#fff" opacity=".09"/><line x1="67.36" y1="85.21" x2="65.33" y2="62.06" stroke="#f4f4f4" stroke-width="2.38" stroke-linecap="round"/><circle cx="67.5" cy="167.99" r="25.32" fill="url(#shad2)" /><circle cx="67.5" cy="166.5" r="21.8" fill="#fcfcfc" stroke="#555" stroke-width="1"/><circle cx="67.5" cy="166.5" r="18.6" fill="url(#kb)" /><path d="M67.5 166.5 L85.76 170.05 A18.6 18.6 0 0 1 77.08 182.44 Z" fill="#fff" opacity=".09"/><path d="M67.5 166.5 L63.95 184.76 A18.6 18.6 0 0 1 51.56 176.08 Z" fill="#fff" opacity=".09"/><path d="M67.5 166.5 L49.24 162.95 A18.6 18.6 0 0 1 57.92 150.56 Z" fill="#fff" opacity=".09"/><path d="M67.5 166.5 L71.05 148.24 A18.6 18.6 0 0 1 83.44 156.92 Z" fill="#fff" opacity=".09"/><line x1="67.4" y1="164.64" x2="66.59" y2="149.23" stroke="#f4f4f4" stroke-width="1.58" stroke-linecap="round"/></g>
<g transform="translate(165.9 60.3) scale(0.33687)"><use href="#mVCO"/><circle cx="67.6" cy="90.24" r="36.6" fill="url(#shad2)" /><circle cx="67.6" cy="88" r="31.2" fill="#fcfcfc" stroke="#555" stroke-width="1"/><circle cx="67.6" cy="88" r="28" fill="url(#kb)" /><path d="M67.6 88 L95.09 93.34 A28 28 0 0 1 82.02 112 Z" fill="#fff" opacity=".09"/><path d="M67.6 88 L62.26 115.49 A28 28 0 0 1 43.6 102.42 Z" fill="#fff" opacity=".09"/><path d="M67.6 88 L40.11 82.66 A28 28 0 0 1 53.18 64 Z" fill="#fff" opacity=".09"/><path d="M67.6 88 L72.94 60.51 A28 28 0 0 1 91.6 73.58 Z" fill="#fff" opacity=".09"/><line x1="66.88" y1="85.3" x2="60.86" y2="62.85" stroke="#f4f4f4" stroke-width="2.38" stroke-linecap="round"/><circle cx="67.5" cy="167.99" r="25.32" fill="url(#shad2)" /><circle cx="67.5" cy="166.5" r="21.8" fill="#fcfcfc" stroke="#555" stroke-width="1"/><circle cx="67.5" cy="166.5" r="18.6" fill="url(#kb)" /><path d="M67.5 166.5 L85.76 170.05 A18.6 18.6 0 0 1 77.08 182.44 Z" fill="#fff" opacity=".09"/><path d="M67.5 166.5 L63.95 184.76 A18.6 18.6 0 0 1 51.56 176.08 Z" fill="#fff" opacity=".09"/><path d="M67.5 166.5 L49.24 162.95 A18.6 18.6 0 0 1 57.92 150.56 Z" fill="#fff" opacity=".09"/><path d="M67.5 166.5 L71.05 148.24 A18.6 18.6 0 0 1 83.44 156.92 Z" fill="#fff" opacity=".09"/><line x1="67.44" y1="164.64" x2="66.9" y2="149.21" stroke="#f4f4f4" stroke-width="1.58" stroke-linecap="round"/></g>
<g transform="translate(211.38 60.3) scale(0.33687)"><use href="#mBVCF"/></g>
<g transform="translate(261.91 60.3) scale(0.33687)"><rect x="0" y="0" width="45" height="380" rx="0" fill="#e9e9e9" /><rect x="0" y="0" width="1.3" height="380" rx="0" fill="#f1f1f1" /><rect x="43.5" y="0" width="1.5" height="380" rx="0" fill="#bcbcbc" /><use href="#s" x="22.5" y="7.5"/><use href="#s" x="22.5" y="372.5"/><text x="22.5" y="27.2" font-size="11.99" fill="#1c1c1c" stroke="#1c1c1c" stroke-width=".3">NOIS</text><rect x="8.3" y="39.7" width="28.4" height="38.8" rx="3" fill="#161616" /><text x="22.5" y="49.6" font-size="7.73" fill="#e8e8e8" stroke="#e8e8e8" stroke-width=".3">WHT</text><use href="#pd" x="22.5" y="64.7"/><rect x="8.3" y="84.6" width="28.4" height="38.8" rx="3" fill="#161616" /><text x="22.5" y="94.5" font-size="7.73" fill="#e8e8e8" stroke="#e8e8e8" stroke-width=".3">PINK</text><use href="#pd" x="22.5" y="109.6"/><rect x="8.3" y="129.5" width="28.4" height="38.8" rx="3" fill="#161616" /><text x="22.5" y="139.4" font-size="7.73" fill="#e8e8e8" stroke="#e8e8e8" stroke-width=".3">RED</text><use href="#pd" x="22.5" y="154.5"/><rect x="8.3" y="174.4" width="28.4" height="38.8" rx="3" fill="#161616" /><text x="22.5" y="184.3" font-size="7.73" fill="#e8e8e8" stroke="#e8e8e8" stroke-width=".3">VIOL</text><use href="#pd" x="22.5" y="199.4"/><rect x="8.3" y="219.3" width="28.4" height="38.8" rx="3" fill="#161616" /><text x="22.5" y="229.2" font-size="7.73" fill="#e8e8e8" stroke="#e8e8e8" stroke-width=".3">BLUE</text><use href="#pd" x="22.5" y="244.3"/><rect x="8.3" y="264.1" width="28.4" height="38.8" rx="3" fill="#161616" /><text x="22.5" y="274" font-size="7.73" fill="#e8e8e8" stroke="#e8e8e8" stroke-width=".3">GRAY</text><use href="#pd" x="22.5" y="289.1"/><rect x="8.3" y="309" width="28.4" height="38.8" rx="3" fill="#161616" /><text x="22.5" y="318.9" font-size="7.73" fill="#e8e8e8" stroke="#e8e8e8" stroke-width=".3">BLCK</text><use href="#pd" x="22.5" y="334"/><text x="22.5" y="360.32" font-size="9.5" fill="#222" letter-spacing="0.4" stroke="#222" stroke-width=".3">VCV</text></g>
<g transform="translate(277.07 60.3) scale(0.33687)"><use href="#mBVCF"/></g>
<g transform="translate(332.65 60.3) scale(0.33687)"><use href="#mVCAMIX"/><rect x="14.3" y="58.5" width="10.4" height="79.5" rx="2" fill="#0c0c0c" /><rect x="15.3" y="121.77" width="8.4" height="12" rx="1.5" fill="#3d3d3d" /><line x1="16" y1="127.77" x2="23" y2="127.77" stroke="#9a9a9a" stroke-width="1.2" /><rect x="46.3" y="58.5" width="10.4" height="79.5" rx="2" fill="#0c0c0c" /><rect x="47.3" y="89.17" width="8.4" height="12" rx="1.5" fill="#3d3d3d" /><line x1="48" y1="95.17" x2="55" y2="95.17" stroke="#9a9a9a" stroke-width="1.2" /><rect x="78.3" y="58.5" width="10.4" height="79.5" rx="2" fill="#0c0c0c" /><rect x="79.3" y="67.65" width="8.4" height="12" rx="1.5" fill="#3d3d3d" /><line x1="80" y1="73.65" x2="87" y2="73.65" stroke="#9a9a9a" stroke-width="1.2" /><rect x="110.3" y="58.5" width="10.4" height="79.5" rx="2" fill="#0c0c0c" /><rect x="111.3" y="89.17" width="8.4" height="12" rx="1.5" fill="#3d3d3d" /><line x1="112" y1="95.17" x2="119" y2="95.17" stroke="#9a9a9a" stroke-width="1.2" /></g>
<g transform="translate(388.24 60.3) scale(0.33687)"><use href="#mADSR"/><rect x="14.3" y="125" width="10.4" height="76" rx="2" fill="#0c0c0c" /><rect x="15.3" y="184.84" width="8.4" height="12" rx="1.5" fill="#3d3d3d" /><line x1="16" y1="190.84" x2="23" y2="190.84" stroke="#9a9a9a" stroke-width="1.2" /><rect x="46.3" y="125" width="10.4" height="76" rx="2" fill="#0c0c0c" /><rect x="47.3" y="159.9" width="8.4" height="12" rx="1.5" fill="#3d3d3d" /><line x1="48" y1="165.9" x2="55" y2="165.9" stroke="#9a9a9a" stroke-width="1.2" /><rect x="78.3" y="125" width="10.4" height="76" rx="2" fill="#0c0c0c" /><rect x="79.3" y="184.84" width="8.4" height="12" rx="1.5" fill="#3d3d3d" /><line x1="80" y1="190.84" x2="87" y2="190.84" stroke="#9a9a9a" stroke-width="1.2" /><rect x="110.3" y="125" width="10.4" height="76" rx="2" fill="#0c0c0c" /><rect x="111.3" y="165.7" width="8.4" height="12" rx="1.5" fill="#3d3d3d" /><line x1="112" y1="171.7" x2="119" y2="171.7" stroke="#9a9a9a" stroke-width="1.2" /></g>
<g transform="translate(433.71 60.3) scale(0.33687)"><use href="#mADSR"/><rect x="14.3" y="125" width="10.4" height="76" rx="2" fill="#0c0c0c" /><rect x="15.3" y="184.84" width="8.4" height="12" rx="1.5" fill="#3d3d3d" /><line x1="16" y1="190.84" x2="23" y2="190.84" stroke="#9a9a9a" stroke-width="1.2" /><rect x="46.3" y="125" width="10.4" height="76" rx="2" fill="#0c0c0c" /><rect x="47.3" y="159.9" width="8.4" height="12" rx="1.5" fill="#3d3d3d" /><line x1="48" y1="165.9" x2="55" y2="165.9" stroke="#9a9a9a" stroke-width="1.2" /><rect x="78.3" y="125" width="10.4" height="76" rx="2" fill="#0c0c0c" /><rect x="79.3" y="184.84" width="8.4" height="12" rx="1.5" fill="#3d3d3d" /><line x1="80" y1="190.84" x2="87" y2="190.84" stroke="#9a9a9a" stroke-width="1.2" /><rect x="110.3" y="125" width="10.4" height="76" rx="2" fill="#0c0c0c" /><rect x="111.3" y="168.6" width="8.4" height="12" rx="1.5" fill="#3d3d3d" /><line x1="112" y1="174.6" x2="119" y2="174.6" stroke="#9a9a9a" stroke-width="1.2" /></g>
<g transform="translate(479.19 60.3) scale(0.33687)"><use href="#mADSR"/><rect x="14.3" y="125" width="10.4" height="76" rx="2" fill="#0c0c0c" /><rect x="15.3" y="184.84" width="8.4" height="12" rx="1.5" fill="#3d3d3d" /><line x1="16" y1="190.84" x2="23" y2="190.84" stroke="#9a9a9a" stroke-width="1.2" /><rect x="46.3" y="125" width="10.4" height="76" rx="2" fill="#0c0c0c" /><rect x="47.3" y="151.2" width="8.4" height="12" rx="1.5" fill="#3d3d3d" /><line x1="48" y1="157.2" x2="55" y2="157.2" stroke="#9a9a9a" stroke-width="1.2" /><rect x="78.3" y="125" width="10.4" height="76" rx="2" fill="#0c0c0c" /><rect x="79.3" y="184.84" width="8.4" height="12" rx="1.5" fill="#3d3d3d" /><line x1="80" y1="190.84" x2="87" y2="190.84" stroke="#9a9a9a" stroke-width="1.2" /><rect x="110.3" y="125" width="10.4" height="76" rx="2" fill="#0c0c0c" /><rect x="111.3" y="142.5" width="8.4" height="12" rx="1.5" fill="#3d3d3d" /><line x1="112" y1="148.5" x2="119" y2="148.5" stroke="#9a9a9a" stroke-width="1.2" /></g>
<g transform="translate(524.67 60.3) scale(0.33687)"><use href="#mPLAT"/></g>
<g transform="translate(595.41 188.3) scale(0.33687)"><rect x="0" y="0" width="75" height="380" rx="0" fill="#e9e9e9" /><rect x="0" y="0" width="1.3" height="380" rx="0" fill="#f1f1f1" /><rect x="73.5" y="0" width="1.5" height="380" rx="0" fill="#bcbcbc" /><use href="#s" x="22.5" y="7.5"/><use href="#s" x="22.5" y="372.5"/><use href="#s" x="52.5" y="7.5"/><use href="#s" x="52.5" y="372.5"/><text x="37.5" y="27.02" font-size="11.5" fill="#1c1c1c" stroke="#1c1c1c" stroke-width=".3">AUDIO</text><rect x="0" y="36.8" width="75" height="144" rx="0" fill="#121212" /><text x="8" y="55.01" font-size="8.6" fill="#a8962c" text-anchor="start" stroke="none" font-family="'Liberation Mono', monospace" textLength="74" lengthAdjust="spacingAndGlyphs">0000000 0000</text><line x1="0" y1="63.5" x2="75" y2="63.5" stroke="#2e2e2e" stroke-width="1.2" /><circle cx="20" cy="84.6" r="2.2" fill="#3a3a3a" /><circle cx="55.8" cy="84.6" r="2.2" fill="#3a3a3a" /><text x="37.5" y="87.69" font-size="8.83" fill="#6a6a6a" stroke="#6a6a6a" stroke-width=".3">0</text><circle cx="20" cy="100.3" r="2.2" fill="#3a3a3a" /><circle cx="55.8" cy="100.3" r="2.2" fill="#3a3a3a" /><text x="37.5" y="103.39" font-size="8.83" fill="#6a6a6a" stroke="#6a6a6a" stroke-width=".3">-3</text><circle cx="20" cy="116" r="2.2" fill="#3a3a3a" /><circle cx="55.8" cy="116" r="2.2" fill="#3a3a3a" /><text x="37.5" y="119.09" font-size="8.83" fill="#6a6a6a" stroke="#6a6a6a" stroke-width=".3">-6</text><circle cx="20" cy="131.7" r="2.2" fill="#3a3a3a" /><circle cx="55.8" cy="131.7" r="2.2" fill="#3a3a3a" /><text x="37.5" y="134.79" font-size="8.83" fill="#6a6a6a" stroke="#6a6a6a" stroke-width=".3">-12</text><circle cx="20" cy="147.4" r="2.2" fill="#3a3a3a" /><circle cx="55.8" cy="147.4" r="2.2" fill="#3a3a3a" /><text x="37.5" y="150.49" font-size="8.83" fill="#6a6a6a" stroke="#6a6a6a" stroke-width=".3">-24</text><circle cx="20" cy="163.1" r="2.2" fill="#3a3a3a" /><circle cx="55.8" cy="163.1" r="2.2" fill="#3a3a3a" /><text x="37.5" y="166.19" font-size="8.83" fill="#6a6a6a" stroke="#6a6a6a" stroke-width=".3">-36</text><text x="37.5" y="199.99" font-size="8.56" stroke="#333" stroke-width=".3">LEVEL</text><circle cx="37.5" cy="229.11" r="24.12" fill="url(#shad2)" /><circle cx="37.5" cy="227.7" r="20.8" fill="#fcfcfc" stroke="#555" stroke-width="1"/><circle cx="37.5" cy="227.7" r="17.6" fill="url(#kb)" /><path d="M37.5 227.7 L54.78 231.06 A17.6 17.6 0 0 1 46.56 242.79 Z" fill="#fff" opacity=".09"/><path d="M37.5 227.7 L34.14 244.98 A17.6 17.6 0 0 1 22.41 236.76 Z" fill="#fff" opacity=".09"/><path d="M37.5 227.7 L20.22 224.34 A17.6 17.6 0 0 1 28.44 212.61 Z" fill="#fff" opacity=".09"/><path d="M37.5 227.7 L40.86 210.42 A17.6 17.6 0 0 1 52.59 218.64 Z" fill="#fff" opacity=".09"/><line x1="37.26" y1="225.96" x2="35.22" y2="211.49" stroke="#f4f4f4" stroke-width="1.5" stroke-linecap="round"/><text x="22" y="252.41" font-size="6.9" stroke="#333" stroke-width=".3">-∞</text><text x="54" y="252.41" font-size="6.9" stroke="#333" stroke-width=".3">+6</text><text x="21" y="271.1" font-size="7.73" stroke="#333" stroke-width=".3">L/MON</text><text x="55" y="271.1" font-size="7.73" stroke="#333" stroke-width=".3">RIGHT</text><line x1="34" y1="286" x2="42" y2="286" stroke="#777" stroke-width="1" /><use href="#p" x="22.6" y="286"/><use href="#p" x="54.3" y="286"/><rect x="8.6" y="308.4" width="59.4" height="39" rx="3.5" fill="#161616" /><text x="22.6" y="318.7" font-size="7.73" fill="#e8e8e8" stroke="#e8e8e8" stroke-width=".3">LEFT</text><text x="54.3" y="318.7" font-size="7.73" fill="#e8e8e8" stroke="#e8e8e8" stroke-width=".3">RIGHT</text><use href="#pd" x="22.6" y="334"/><use href="#pd" x="54.3" y="334"/><text x="37.5" y="360.32" font-size="9.5" fill="#222" letter-spacing="0.4" stroke="#222" stroke-width=".3">VCV</text></g>
<g transform="translate(636.34 188.3) scale(0.33687)"><rect x="0" y="0" width="135" height="380" rx="0" fill="#1e272b" /><rect x="29" y="0" width="78.5" height="380" rx="0" fill="#50666f" /><rect x="29" y="0" width="1.5" height="380" rx="0" fill="#6d838c" /><rect x="106" y="0" width="1.5" height="380" rx="0" fill="#3b4d55" /><text x="68" y="16.88" font-size="12.5" fill="#f2f2f2" font-family="'DejaVu Sans Condensed', 'Liberation Sans', sans-serif" textLength="58" lengthAdjust="spacingAndGlyphs" stroke="#f2f2f2" stroke-width=".3">MASTER</text><text x="62" y="29.98" font-size="12.5" fill="#f2f2f2" font-family="'DejaVu Sans Condensed', 'Liberation Sans', sans-serif" textLength="56" lengthAdjust="spacingAndGlyphs" stroke="#f2f2f2" stroke-width=".3">RECORDER</text><text x="96" y="30.33" font-size="13.5" fill="#e0282e" font-family="'DejaVu Sans Condensed', 'Liberation Sans', sans-serif" stroke="#e0282e" stroke-width=".3">2</text><rect x="39.5" y="34.7" width="22.2" height="32.7" rx="1.5" fill="#6c838d" /><rect x="73" y="34.7" width="23" height="32.7" rx="1.5" fill="#6c838d" /><text x="50" y="64.4" font-size="8.28" fill="#f0f0f0" stroke="#f0f0f0" stroke-width=".3">L</text><text x="85" y="64.4" font-size="8.28" fill="#f0f0f0" stroke="#f0f0f0" stroke-width=".3">R</text><circle cx="49" cy="45.4" r="8.6" fill="#111" stroke="#c9ced1" stroke-width="1.4"/><circle cx="86.4" cy="45.4" r="8.6" fill="#111" stroke="#c9ced1" stroke-width="1.4"/><circle cx="36.8" cy="78" r="8" fill="#0a0a0a" stroke="#cfd6da" stroke-width="1.6"/><circle cx="96.8" cy="78" r="8" fill="#0a0a0a" stroke="#cfd6da" stroke-width="1.6"/><text x="67" y="80.7" font-size="7.73" fill="#dfe6ea" stroke="#dfe6ea" stroke-width=".3">[ master ]</text><rect x="34.7" y="90.2" width="65.6" height="30.6" rx="1.5" fill="#050805" /><text x="67.5" y="102.53" font-size="11.5" fill="#18c21c" stroke="none" font-family="'Liberation Mono', monospace" textLength="46" lengthAdjust="spacingAndGlyphs">00:00</text><text x="67.5" y="116.03" font-size="11.5" fill="#18c21c" stroke="none" font-family="'Liberation Mono', monospace" textLength="56" lengthAdjust="spacingAndGlyphs">00.000</text><text x="52" y="136.98" font-size="10.5" fill="#f2f2f2" font-family="'DejaVu Sans Condensed', 'Liberation Sans', sans-serif" textLength="27" lengthAdjust="spacingAndGlyphs" stroke="#f2f2f2" stroke-width=".3">START</text><circle cx="85.5" cy="132.4" r="7.6" fill="#2c2c2c" stroke="#3c4a50" stroke-width="1"/><text x="48" y="155.29" font-size="8.56" fill="#f2f2f2" font-family="'DejaVu Sans Condensed', 'Liberation Sans', sans-serif" stroke="#f2f2f2" stroke-width=".3">TRIG</text><circle cx="65.3" cy="152.3" r="6.6" fill="#141414" stroke="#e8762c" stroke-width="2.2"/><circle cx="86.4" cy="152.3" r="6.6" fill="#141414" stroke="#d4202c" stroke-width="2.6"/><text x="52" y="178.68" font-size="10.5" fill="#f2f2f2" font-family="'DejaVu Sans Condensed', 'Liberation Sans', sans-serif" textLength="23" lengthAdjust="spacingAndGlyphs" stroke="#f2f2f2" stroke-width=".3">STOP</text><circle cx="85.5" cy="174.3" r="7.6" fill="#2c2c2c" stroke="#3c4a50" stroke-width="1"/><text x="48" y="194.79" font-size="8.56" fill="#f2f2f2" font-family="'DejaVu Sans Condensed', 'Liberation Sans', sans-serif" stroke="#f2f2f2" stroke-width=".3">TRIG</text><circle cx="65.3" cy="191.8" r="6.6" fill="#141414" stroke="#e8762c" stroke-width="2.2"/><circle cx="86.4" cy="191.8" r="6.6" fill="#141414" stroke="#d4202c" stroke-width="2.6"/><text x="58" y="232.08" font-size="9.94" fill="#f2f2f2" font-family="'DejaVu Sans Condensed', 'Liberation Sans', sans-serif" textLength="44" lengthAdjust="spacingAndGlyphs" stroke="#f2f2f2" stroke-width=".3">COMPRESSOR</text><circle cx="94.4" cy="227.7" r="5.6" fill="#2a2a2a" /><text x="40" y="245.01" font-size="7.18" fill="#f2f2f2" font-family="'DejaVu Sans Condensed', 'Liberation Sans', sans-serif" stroke="#f2f2f2" stroke-width=".3">Att</text><circle cx="40" cy="255" r="7" fill="#f4f4f4" stroke="#c4ccd0" stroke-width="1"/><line x1="40" y1="255" x2="34.5" y2="256.5" stroke="#e0282e" stroke-width="2.2" /><text x="58.2" y="245.01" font-size="7.18" fill="#f2f2f2" font-family="'DejaVu Sans Condensed', 'Liberation Sans', sans-serif" stroke="#f2f2f2" stroke-width=".3">Rel</text><circle cx="58.2" cy="255" r="7" fill="#f4f4f4" stroke="#c4ccd0" stroke-width="1"/><line x1="58.2" y1="255" x2="52.7" y2="256.5" stroke="#e0282e" stroke-width="2.2" /><text x="76.6" y="245.01" font-size="7.18" fill="#f2f2f2" font-family="'DejaVu Sans Condensed', 'Liberation Sans', sans-serif" stroke="#f2f2f2" stroke-width=".3">Ratio</text><circle cx="76.6" cy="255" r="7" fill="#f4f4f4" stroke="#c4ccd0" stroke-width="1"/><line x1="76.6" y1="255" x2="71.1" y2="256.5" stroke="#e0282e" stroke-width="2.2" /><text x="95.3" y="245.01" font-size="7.18" fill="#f2f2f2" font-family="'DejaVu Sans Condensed', 'Liberation Sans', sans-serif" stroke="#f2f2f2" stroke-width=".3">Thr</text><circle cx="95.3" cy="255" r="7" fill="#f4f4f4" stroke="#c4ccd0" stroke-width="1"/><line x1="95.3" y1="255" x2="89.8" y2="256.5" stroke="#e0282e" stroke-width="2.2" /><text x="70.6" y="290.19" font-size="9.11" fill="#f2f2f2" font-family="'DejaVu Sans Condensed', 'Liberation Sans', sans-serif" stroke="#f2f2f2" stroke-width=".3">STEREO</text><text x="70.6" y="299.79" font-size="9.11" fill="#f2f2f2" font-family="'DejaVu Sans Condensed', 'Liberation Sans', sans-serif" stroke="#f2f2f2" stroke-width=".3">MASTERING</text><rect x="30.6" y="284.7" width="6" height="76.6" rx="1" fill="#070a07" /><rect x="96.8" y="284.7" width="6" height="76.6" rx="1" fill="#070a07" /><rect x="31.2" y="306.5" width="4.8" height="9" rx="0" fill="#38d23a" /><rect x="97.4" y="306.5" width="4.8" height="9" rx="0" fill="#38d23a" /><circle cx="66.8" cy="309.3" r="7.6" fill="#f4f4f4" stroke="#c4ccd0" stroke-width="1"/><line x1="66.8" y1="309.3" x2="66.8" y2="303.5" stroke="#e0282e" stroke-width="2.2" /><circle cx="81.6" cy="324.2" r="7.6" fill="#f4f4f4" stroke="#c4ccd0" stroke-width="1"/><line x1="81.6" y1="324.2" x2="77" y2="327" stroke="#e0282e" stroke-width="2.2" /><circle cx="54.9" cy="323.3" r="6.6" fill="#111" stroke="#2a62d6" stroke-width="2.4"/><text x="62" y="341.7" font-size="7.73" fill="#e4eaee" font-family="'DejaVu Sans Condensed', 'Liberation Sans', sans-serif" textLength="38" lengthAdjust="spacingAndGlyphs" stroke="#e4eaee" stroke-width=".3">LR LEVEL LOCK</text><circle cx="89.4" cy="339" r="5.4" fill="#2a2a2a" /><circle cx="46" cy="354.7" r="5.8" fill="#1c1c1c" stroke="#3b4a50" stroke-width="1"/><circle cx="89.4" cy="354.7" r="5.8" fill="#1c1c1c" stroke="#3b4a50" stroke-width="1"/><rect x="58" y="349.5" width="14" height="10" rx="1.5" fill="none" stroke="#e4eaee" stroke-width="1.3"/><rect x="61" y="354" width="8" height="3.6" rx="0" fill="#e4eaee" /><text x="67" y="373.1" font-size="8.28" fill="#e4eaee" font-family="'DejaVu Sans Condensed', 'Liberation Sans', sans-serif" stroke="#e4eaee" stroke-width=".3">NYSTHI</text></g>
<g transform="translate(110.32 316.3) scale(0.33687)"><use href="#mLFO"/><circle cx="67.6" cy="90.24" r="36.6" fill="url(#shad2)" /><circle cx="67.6" cy="88" r="31.2" fill="#fcfcfc" stroke="#555" stroke-width="1"/><circle cx="67.6" cy="88" r="28" fill="url(#kb)" /><path d="M67.6 88 L95.09 93.34 A28 28 0 0 1 82.02 112 Z" fill="#fff" opacity=".09"/><path d="M67.6 88 L62.26 115.49 A28 28 0 0 1 43.6 102.42 Z" fill="#fff" opacity=".09"/><path d="M67.6 88 L40.11 82.66 A28 28 0 0 1 53.18 64 Z" fill="#fff" opacity=".09"/><path d="M67.6 88 L72.94 60.51 A28 28 0 0 1 91.6 73.58 Z" fill="#fff" opacity=".09"/><line x1="67.6" y1="85.2" x2="67.6" y2="61.96" stroke="#f4f4f4" stroke-width="2.38" stroke-linecap="round"/><circle cx="67.5" cy="167.99" r="25.32" fill="url(#shad2)" /><circle cx="67.5" cy="166.5" r="21.8" fill="#fcfcfc" stroke="#555" stroke-width="1"/><circle cx="67.5" cy="166.5" r="18.6" fill="url(#kb)" /><path d="M67.5 166.5 L85.76 170.05 A18.6 18.6 0 0 1 77.08 182.44 Z" fill="#fff" opacity=".09"/><path d="M67.5 166.5 L63.95 184.76 A18.6 18.6 0 0 1 51.56 176.08 Z" fill="#fff" opacity=".09"/><path d="M67.5 166.5 L49.24 162.95 A18.6 18.6 0 0 1 57.92 150.56 Z" fill="#fff" opacity=".09"/><path d="M67.5 166.5 L71.05 148.24 A18.6 18.6 0 0 1 83.44 156.92 Z" fill="#fff" opacity=".09"/><line x1="67.66" y1="164.65" x2="69.01" y2="149.27" stroke="#f4f4f4" stroke-width="1.58" stroke-linecap="round"/></g>
<g transform="translate(160.85 316.3) scale(0.33687)"><rect x="0" y="0" width="90" height="380" rx="0" fill="#e7e7e7" /><rect x="0" y="0" width="1.2" height="380" rx="0" fill="#f8f8f8" /><rect x="88.6" y="0" width="1.4" height="380" rx="0" fill="#bdbdbd" /><use href="#s" x="20" y="9.5"/><use href="#s" x="20" y="372"/><rect x="3" y="24" width="84" height="7" rx="0" fill="#d2d2d2" /><text x="45" y="45.17" font-size="10.21" font-weight="normal" fill="#444" stroke="#444" stroke-width=".3">bernoulli gate</text><circle cx="10" cy="65.3" r="6.6" fill="#e6194f" /><text x="10" y="68.68" font-size="9.66" fill="#fff" stroke="#fff" stroke-width=".3">1</text><circle cx="75.4" cy="66.3" r="9.4" fill="url(#shad)" /><circle cx="75.4" cy="65.3" r="7.6" fill="#262626" /><path d="M43 103.2 V127.2 Q43 134.8 50 134.8 H56" fill="none" stroke="#555" stroke-width="1.1"/><circle cx="43" cy="87.2" r="23.5" fill="url(#shad)" /><circle cx="43" cy="85.2" r="20" fill="#262626" /><circle cx="43" cy="85.2" r="20" fill="none" stroke="#3a3a3a" stroke-width="1"/><circle cx="43" cy="85.2" r="10.8" fill="#e6194f" /><line x1="48.74" y1="77.01" x2="53.61" y2="70.05" stroke="#e6194f" stroke-width="3" stroke-linecap="round"/><text x="20" y="118.79" font-size="8.56" stroke="#333" stroke-width=".3">IN</text><text x="66.8" y="118.79" font-size="8.56" stroke="#333" stroke-width=".3">P</text><use href="#ap" x="20" y="134.8"/><use href="#ap" x="66.8" y="134.8"/><rect x="3.6" y="149.6" width="79.2" height="36" rx="3" fill="#5b5b5b" /><text x="20" y="158.01" font-size="7.18" fill="#f0f0f0" stroke="#f0f0f0" stroke-width=".3">OUT A</text><text x="66.8" y="158.01" font-size="7.18" fill="#f0f0f0" stroke="#f0f0f0" stroke-width=".3">OUT B</text><use href="#ap" x="20" y="171.9"/><use href="#ap" x="66.8" y="171.9"/><circle cx="43" cy="171.9" r="5.5" fill="#8ad53a" opacity=".35"/><circle cx="43" cy="171.9" r="3.2" fill="#8ad53a" /><circle cx="10" cy="221.2" r="6.6" fill="#14a0bd" /><text x="10" y="224.58" font-size="9.66" fill="#fff" stroke="#fff" stroke-width=".3">2</text><circle cx="75.4" cy="222.2" r="9.4" fill="url(#shad)" /><circle cx="75.4" cy="221.2" r="7.6" fill="#262626" /><path d="M43 257.54 V281.54 Q43 289.14 50 289.14 H56" fill="none" stroke="#555" stroke-width="1.1"/><circle cx="43" cy="241.54" r="23.5" fill="url(#shad)" /><circle cx="43" cy="239.54" r="20" fill="#262626" /><circle cx="43" cy="239.54" r="20" fill="none" stroke="#3a3a3a" stroke-width="1"/><circle cx="43" cy="239.54" r="10.8" fill="#14a0bd" /><line x1="43" y1="229.54" x2="43" y2="221.04" stroke="#14a0bd" stroke-width="3" stroke-linecap="round"/><text x="20" y="274.69" font-size="8.56" stroke="#333" stroke-width=".3">IN</text><text x="66.8" y="274.69" font-size="8.56" stroke="#333" stroke-width=".3">P</text><use href="#ap" x="20" y="290.7"/><use href="#ap" x="66.8" y="290.7"/><rect x="3.6" y="305.5" width="79.2" height="36" rx="3" fill="#5b5b5b" /><text x="20" y="313.91" font-size="7.18" fill="#f0f0f0" stroke="#f0f0f0" stroke-width=".3">OUT A</text><text x="66.8" y="313.91" font-size="7.18" fill="#f0f0f0" stroke="#f0f0f0" stroke-width=".3">OUT B</text><use href="#ap" x="20" y="327.8"/><use href="#ap" x="66.8" y="327.8"/><circle cx="43" cy="327.8" r="5.5" fill="#ff3a3a" opacity=".35"/><circle cx="43" cy="327.8" r="3.2" fill="#ff3a3a" /><line x1="3" y1="204" x2="87" y2="204" stroke="#c6c6c6" stroke-width="1.6" /><line x1="3" y1="351" x2="87" y2="351" stroke="#c6c6c6" stroke-width="1.6" /></g>
<g transform="translate(196.22 316.3) scale(0.33687)"><use href="#mVCO"/><circle cx="67.6" cy="90.24" r="36.6" fill="url(#shad2)" /><circle cx="67.6" cy="88" r="31.2" fill="#fcfcfc" stroke="#555" stroke-width="1"/><circle cx="67.6" cy="88" r="28" fill="url(#kb)" /><path d="M67.6 88 L95.09 93.34 A28 28 0 0 1 82.02 112 Z" fill="#fff" opacity=".09"/><path d="M67.6 88 L62.26 115.49 A28 28 0 0 1 43.6 102.42 Z" fill="#fff" opacity=".09"/><path d="M67.6 88 L40.11 82.66 A28 28 0 0 1 53.18 64 Z" fill="#fff" opacity=".09"/><path d="M67.6 88 L72.94 60.51 A28 28 0 0 1 91.6 73.58 Z" fill="#fff" opacity=".09"/><line x1="64.97" y1="88.96" x2="43.13" y2="96.91" stroke="#f4f4f4" stroke-width="2.38" stroke-linecap="round"/><circle cx="67.5" cy="167.99" r="25.32" fill="url(#shad2)" /><circle cx="67.5" cy="166.5" r="21.8" fill="#fcfcfc" stroke="#555" stroke-width="1"/><circle cx="67.5" cy="166.5" r="18.6" fill="url(#kb)" /><path d="M67.5 166.5 L85.76 170.05 A18.6 18.6 0 0 1 77.08 182.44 Z" fill="#fff" opacity=".09"/><path d="M67.5 166.5 L63.95 184.76 A18.6 18.6 0 0 1 51.56 176.08 Z" fill="#fff" opacity=".09"/><path d="M67.5 166.5 L49.24 162.95 A18.6 18.6 0 0 1 57.92 150.56 Z" fill="#fff" opacity=".09"/><path d="M67.5 166.5 L71.05 148.24 A18.6 18.6 0 0 1 83.44 156.92 Z" fill="#fff" opacity=".09"/><line x1="67.5" y1="164.64" x2="67.5" y2="149.2" stroke="#f4f4f4" stroke-width="1.58" stroke-linecap="round"/></g>
<g transform="translate(241.7 316.3) scale(0.33687)"><use href="#mVCO"/><circle cx="67.6" cy="90.24" r="36.6" fill="url(#shad2)" /><circle cx="67.6" cy="88" r="31.2" fill="#fcfcfc" stroke="#555" stroke-width="1"/><circle cx="67.6" cy="88" r="28" fill="url(#kb)" /><path d="M67.6 88 L95.09 93.34 A28 28 0 0 1 82.02 112 Z" fill="#fff" opacity=".09"/><path d="M67.6 88 L62.26 115.49 A28 28 0 0 1 43.6 102.42 Z" fill="#fff" opacity=".09"/><path d="M67.6 88 L40.11 82.66 A28 28 0 0 1 53.18 64 Z" fill="#fff" opacity=".09"/><path d="M67.6 88 L72.94 60.51 A28 28 0 0 1 91.6 73.58 Z" fill="#fff" opacity=".09"/><line x1="69" y1="85.58" x2="80.62" y2="65.45" stroke="#f4f4f4" stroke-width="2.38" stroke-linecap="round"/><circle cx="67.5" cy="167.99" r="25.32" fill="url(#shad2)" /><circle cx="67.5" cy="166.5" r="21.8" fill="#fcfcfc" stroke="#555" stroke-width="1"/><circle cx="67.5" cy="166.5" r="18.6" fill="url(#kb)" /><path d="M67.5 166.5 L85.76 170.05 A18.6 18.6 0 0 1 77.08 182.44 Z" fill="#fff" opacity=".09"/><path d="M67.5 166.5 L63.95 184.76 A18.6 18.6 0 0 1 51.56 176.08 Z" fill="#fff" opacity=".09"/><path d="M67.5 166.5 L49.24 162.95 A18.6 18.6 0 0 1 57.92 150.56 Z" fill="#fff" opacity=".09"/><path d="M67.5 166.5 L71.05 148.24 A18.6 18.6 0 0 1 83.44 156.92 Z" fill="#fff" opacity=".09"/><line x1="67.5" y1="164.64" x2="67.5" y2="149.2" stroke="#f4f4f4" stroke-width="1.58" stroke-linecap="round"/></g>
<g transform="translate(287.18 316.3) scale(0.33687)"><use href="#mVCO"/><circle cx="67.6" cy="90.24" r="36.6" fill="url(#shad2)" /><circle cx="67.6" cy="88" r="31.2" fill="#fcfcfc" stroke="#555" stroke-width="1"/><circle cx="67.6" cy="88" r="28" fill="url(#kb)" /><path d="M67.6 88 L95.09 93.34 A28 28 0 0 1 82.02 112 Z" fill="#fff" opacity=".09"/><path d="M67.6 88 L62.26 115.49 A28 28 0 0 1 43.6 102.42 Z" fill="#fff" opacity=".09"/><path d="M67.6 88 L40.11 82.66 A28 28 0 0 1 53.18 64 Z" fill="#fff" opacity=".09"/><path d="M67.6 88 L72.94 60.51 A28 28 0 0 1 91.6 73.58 Z" fill="#fff" opacity=".09"/><line x1="69.21" y1="85.71" x2="82.54" y2="66.67" stroke="#f4f4f4" stroke-width="2.38" stroke-linecap="round"/><circle cx="67.5" cy="167.99" r="25.32" fill="url(#shad2)" /><circle cx="67.5" cy="166.5" r="21.8" fill="#fcfcfc" stroke="#555" stroke-width="1"/><circle cx="67.5" cy="166.5" r="18.6" fill="url(#kb)" /><path d="M67.5 166.5 L85.76 170.05 A18.6 18.6 0 0 1 77.08 182.44 Z" fill="#fff" opacity=".09"/><path d="M67.5 166.5 L63.95 184.76 A18.6 18.6 0 0 1 51.56 176.08 Z" fill="#fff" opacity=".09"/><path d="M67.5 166.5 L49.24 162.95 A18.6 18.6 0 0 1 57.92 150.56 Z" fill="#fff" opacity=".09"/><path d="M67.5 166.5 L71.05 148.24 A18.6 18.6 0 0 1 83.44 156.92 Z" fill="#fff" opacity=".09"/><line x1="68.7" y1="165.08" x2="78.62" y2="153.25" stroke="#f4f4f4" stroke-width="1.58" stroke-linecap="round"/></g>
<g transform="translate(332.65 316.3) scale(0.33687)"><use href="#mVCO"/><circle cx="67.6" cy="90.24" r="36.6" fill="url(#shad2)" /><circle cx="67.6" cy="88" r="31.2" fill="#fcfcfc" stroke="#555" stroke-width="1"/><circle cx="67.6" cy="88" r="28" fill="url(#kb)" /><path d="M67.6 88 L95.09 93.34 A28 28 0 0 1 82.02 112 Z" fill="#fff" opacity=".09"/><path d="M67.6 88 L62.26 115.49 A28 28 0 0 1 43.6 102.42 Z" fill="#fff" opacity=".09"/><path d="M67.6 88 L40.11 82.66 A28 28 0 0 1 53.18 64 Z" fill="#fff" opacity=".09"/><path d="M67.6 88 L72.94 60.51 A28 28 0 0 1 91.6 73.58 Z" fill="#fff" opacity=".09"/><line x1="69" y1="85.58" x2="80.62" y2="65.45" stroke="#f4f4f4" stroke-width="2.38" stroke-linecap="round"/><circle cx="67.5" cy="167.99" r="25.32" fill="url(#shad2)" /><circle cx="67.5" cy="166.5" r="21.8" fill="#fcfcfc" stroke="#555" stroke-width="1"/><circle cx="67.5" cy="166.5" r="18.6" fill="url(#kb)" /><path d="M67.5 166.5 L85.76 170.05 A18.6 18.6 0 0 1 77.08 182.44 Z" fill="#fff" opacity=".09"/><path d="M67.5 166.5 L63.95 184.76 A18.6 18.6 0 0 1 51.56 176.08 Z" fill="#fff" opacity=".09"/><path d="M67.5 166.5 L49.24 162.95 A18.6 18.6 0 0 1 57.92 150.56 Z" fill="#fff" opacity=".09"/><path d="M67.5 166.5 L71.05 148.24 A18.6 18.6 0 0 1 83.44 156.92 Z" fill="#fff" opacity=".09"/><line x1="67.5" y1="164.64" x2="67.5" y2="149.2" stroke="#f4f4f4" stroke-width="1.58" stroke-linecap="round"/></g>
<g transform="translate(378.13 316.3) scale(0.33687)"><use href="#mVCAMIX"/><rect x="14.3" y="58.5" width="10.4" height="79.5" rx="2" fill="#0c0c0c" /><rect x="15.3" y="121.77" width="8.4" height="12" rx="1.5" fill="#3d3d3d" /><line x1="16" y1="127.77" x2="23" y2="127.77" stroke="#9a9a9a" stroke-width="1.2" /><rect x="46.3" y="58.5" width="10.4" height="79.5" rx="2" fill="#0c0c0c" /><rect x="47.3" y="79.95" width="8.4" height="12" rx="1.5" fill="#3d3d3d" /><line x1="48" y1="85.95" x2="55" y2="85.95" stroke="#9a9a9a" stroke-width="1.2" /><rect x="78.3" y="58.5" width="10.4" height="79.5" rx="2" fill="#0c0c0c" /><rect x="79.3" y="121.77" width="8.4" height="12" rx="1.5" fill="#3d3d3d" /><line x1="80" y1="127.77" x2="87" y2="127.77" stroke="#9a9a9a" stroke-width="1.2" /><rect x="110.3" y="58.5" width="10.4" height="79.5" rx="2" fill="#0c0c0c" /><rect x="111.3" y="86.1" width="8.4" height="12" rx="1.5" fill="#3d3d3d" /><line x1="112" y1="92.1" x2="119" y2="92.1" stroke="#9a9a9a" stroke-width="1.2" /></g>
<g transform="translate(423.61 316.3) scale(0.33687)"><use href="#mBVCF"/></g>
<g transform="translate(474.14 316.3) scale(0.33687)"><use href="#mVCAMIX"/><rect x="14.3" y="58.5" width="10.4" height="79.5" rx="2" fill="#0c0c0c" /><rect x="15.3" y="121.77" width="8.4" height="12" rx="1.5" fill="#3d3d3d" /><line x1="16" y1="127.77" x2="23" y2="127.77" stroke="#9a9a9a" stroke-width="1.2" /><rect x="46.3" y="58.5" width="10.4" height="79.5" rx="2" fill="#0c0c0c" /><rect x="47.3" y="79.95" width="8.4" height="12" rx="1.5" fill="#3d3d3d" /><line x1="48" y1="85.95" x2="55" y2="85.95" stroke="#9a9a9a" stroke-width="1.2" /><rect x="78.3" y="58.5" width="10.4" height="79.5" rx="2" fill="#0c0c0c" /><rect x="79.3" y="121.77" width="8.4" height="12" rx="1.5" fill="#3d3d3d" /><line x1="80" y1="127.77" x2="87" y2="127.77" stroke="#9a9a9a" stroke-width="1.2" /><rect x="110.3" y="58.5" width="10.4" height="79.5" rx="2" fill="#0c0c0c" /><rect x="111.3" y="86.1" width="8.4" height="12" rx="1.5" fill="#3d3d3d" /><line x1="112" y1="92.1" x2="119" y2="92.1" stroke="#9a9a9a" stroke-width="1.2" /></g>
<g transform="translate(519.62 316.3) scale(0.33687)"><use href="#mBVCF"/></g>
<g transform="translate(605.52 316.3) scale(0.33687)"><use href="#mPLAT"/></g>
<g transform="translate(666.15 316.3) scale(0.33687)"><use href="#mADSR"/><rect x="14.3" y="125" width="10.4" height="76" rx="2" fill="#0c0c0c" /><rect x="15.3" y="184.84" width="8.4" height="12" rx="1.5" fill="#3d3d3d" /><line x1="16" y1="190.84" x2="23" y2="190.84" stroke="#9a9a9a" stroke-width="1.2" /><rect x="46.3" y="125" width="10.4" height="76" rx="2" fill="#0c0c0c" /><rect x="47.3" y="157" width="8.4" height="12" rx="1.5" fill="#3d3d3d" /><line x1="48" y1="163" x2="55" y2="163" stroke="#9a9a9a" stroke-width="1.2" /><rect x="78.3" y="125" width="10.4" height="76" rx="2" fill="#0c0c0c" /><rect x="79.3" y="184.84" width="8.4" height="12" rx="1.5" fill="#3d3d3d" /><line x1="80" y1="190.84" x2="87" y2="190.84" stroke="#9a9a9a" stroke-width="1.2" /><rect x="110.3" y="125" width="10.4" height="76" rx="2" fill="#0c0c0c" /><rect x="111.3" y="154.1" width="8.4" height="12" rx="1.5" fill="#3d3d3d" /><line x1="112" y1="160.1" x2="119" y2="160.1" stroke="#9a9a9a" stroke-width="1.2" /></g>
<g fill="none" stroke="#000" stroke-width="2.4" opacity=".22" transform="translate(0 1.6)" filter="url(#csh)"><path d="M100.14 124.31 Q391.82 804.45 683.5 428.81"/><path d="M100.14 124.31 Q298.34 483.72 496.54 172.81"/><path d="M100.14 124.31 Q275.6 450.12 451.06 172.81"/><path d="M100.14 124.31 Q252.86 416.66 405.58 172.81"/><path d="M126.99 172.81 Q209.02 330.59 291.05 156.31"/><path d="M194.03 172.81 Q207.15 233.23 220.27 171.47"/><path d="M252.85 171.47 Q296.03 272.44 339.22 156.64"/><path d="M269.49 82.1 Q277.73 237.63 285.96 171.47"/><path d="M318.54 171.47 Q334.27 231.78 350 156.64"/><path d="M339.22 140.48 Q383.18 269.62 427.14 172.81"/><path d="M350 140.48 Q411.31 294.53 472.62 172.81"/><path d="M360.78 140.48 Q439.44 319.54 518.1 172.81"/><path d="M360.78 156.64 Q466.14 325.46 571.49 73"/><path d="M371.56 124.14 Q450.47 265.34 529.38 73"/><path d="M149.23 428.81 Q158.41 489.86 167.59 361.71"/><path d="M235.13 428.81 Q309.91 576.14 384.7 412.64"/><path d="M280.61 428.81 Q338.04 550.53 395.48 412.64"/><path d="M326.08 428.81 Q371.56 532.72 417.04 412.64"/><path d="M371.56 428.81 Q388.91 491.18 406.26 412.64"/><path d="M705.06 428.81 Q544.88 690.17 384.7 396.48"/><path d="M705.06 428.81 Q550.27 682.18 395.48 396.48"/><path d="M705.06 428.81 Q555.66 674.79 406.26 396.48"/><path d="M705.06 428.81 Q561.05 667.43 417.04 396.48"/><path d="M705.06 428.81 Q598.27 615.66 491.49 396.48"/><path d="M417.04 380.14 Q424.77 483.17 432.5 427.47"/><path d="M465.08 427.47 Q472.89 477.44 480.71 412.64"/><path d="M513.05 380.14 Q520.78 483.17 528.51 427.47"/><path d="M513.05 380.14 Q561.64 479.72 610.23 329"/><path d="M561.08 427.47 Q582.05 510.3 603.02 284.64"/><path d="M561.08 427.47 Q613.27 540.52 665.45 203.59"/><path d="M561.08 427.47 Q606.97 536.96 652.85 203.59"/><path d="M652.34 329 Q571.91 548.83 491.49 412.64"/></g>
<g fill="none" stroke-width="1.85" stroke-linecap="round" opacity=".82"><path d="M100.14 124.31 Q391.82 804.45 683.5 428.81" stroke="#d2364a"/><path d="M100.14 124.31 Q298.34 483.72 496.54 172.81" stroke="#1f8fae"/><path d="M100.14 124.31 Q275.6 450.12 451.06 172.81" stroke="#8a3bd0"/><path d="M100.14 124.31 Q252.86 416.66 405.58 172.81" stroke="#d79ac6"/><path d="M126.99 172.81 Q209.02 330.59 291.05 156.31" stroke="#1f8fae"/><path d="M194.03 172.81 Q207.15 233.23 220.27 171.47" stroke="#8a3bd0"/><path d="M252.85 171.47 Q296.03 272.44 339.22 156.64" stroke="#8c8c8c"/><path d="M269.49 82.1 Q277.73 237.63 285.96 171.47" stroke="#3f86e0"/><path d="M318.54 171.47 Q334.27 231.78 350 156.64" stroke="#1f8fae"/><path d="M339.22 140.48 Q383.18 269.62 427.14 172.81" stroke="#8c8c8c"/><path d="M350 140.48 Q411.31 294.53 472.62 172.81" stroke="#3f86e0"/><path d="M360.78 140.48 Q439.44 319.54 518.1 172.81" stroke="#8a3bd0"/><path d="M360.78 156.64 Q466.14 325.46 571.49 73" stroke="#8a3bd0"/><path d="M371.56 124.14 Q450.47 265.34 529.38 73" stroke="#1f8fae"/><path d="M149.23 428.81 Q158.41 489.86 167.59 361.71" stroke="#19a86a"/><path d="M235.13 428.81 Q309.91 576.14 384.7 412.64" stroke="#e5a532"/><path d="M280.61 428.81 Q338.04 550.53 395.48 412.64" stroke="#19a86a"/><path d="M326.08 428.81 Q371.56 532.72 417.04 412.64" stroke="#8a3bd0"/><path d="M371.56 428.81 Q388.91 491.18 406.26 412.64" stroke="#3f86e0"/><path d="M705.06 428.81 Q544.88 690.17 384.7 396.48" stroke="#3f86e0"/><path d="M705.06 428.81 Q550.27 682.18 395.48 396.48" stroke="#d2364a"/><path d="M705.06 428.81 Q555.66 674.79 406.26 396.48" stroke="#e5a532"/><path d="M705.06 428.81 Q561.05 667.43 417.04 396.48" stroke="#19a86a"/><path d="M705.06 428.81 Q598.27 615.66 491.49 396.48" stroke="#8a3bd0"/><path d="M417.04 380.14 Q424.77 483.17 432.5 427.47" stroke="#d2364a"/><path d="M465.08 427.47 Q472.89 477.44 480.71 412.64" stroke="#e5a532"/><path d="M513.05 380.14 Q520.78 483.17 528.51 427.47" stroke="#d2364a"/><path d="M513.05 380.14 Q561.64 479.72 610.23 329" stroke="#3f86e0"/><path d="M561.08 427.47 Q582.05 510.3 603.02 284.64" stroke="#e5a532"/><path d="M561.08 427.47 Q613.27 540.52 665.45 203.59" stroke="#d2364a"/><path d="M561.08 427.47 Q606.97 536.96 652.85 203.59" stroke="#d2364a"/><path d="M652.34 329 Q571.91 548.83 491.49 412.64" stroke="#8a3bd0"/></g>
<g><circle cx="100.14" cy="124.31" r="2.7" fill="none" stroke="#d2364a" stroke-width="1.9"/><circle cx="100.14" cy="124.31" r="1.75" fill="#0c0c0c" /><circle cx="683.5" cy="428.81" r="2.7" fill="none" stroke="#d2364a" stroke-width="1.9"/><circle cx="683.5" cy="428.81" r="1.75" fill="#0c0c0c" /><circle cx="100.14" cy="124.31" r="2.7" fill="none" stroke="#1f8fae" stroke-width="1.9"/><circle cx="100.14" cy="124.31" r="1.75" fill="#0c0c0c" /><circle cx="496.54" cy="172.81" r="2.7" fill="none" stroke="#1f8fae" stroke-width="1.9"/><circle cx="496.54" cy="172.81" r="1.75" fill="#0c0c0c" /><circle cx="100.14" cy="124.31" r="2.7" fill="none" stroke="#8a3bd0" stroke-width="1.9"/><circle cx="100.14" cy="124.31" r="1.75" fill="#0c0c0c" /><circle cx="451.06" cy="172.81" r="2.7" fill="none" stroke="#8a3bd0" stroke-width="1.9"/><circle cx="451.06" cy="172.81" r="1.75" fill="#0c0c0c" /><circle cx="100.14" cy="124.31" r="2.7" fill="none" stroke="#d79ac6" stroke-width="1.9"/><circle cx="100.14" cy="124.31" r="1.75" fill="#0c0c0c" /><circle cx="405.58" cy="172.81" r="2.7" fill="none" stroke="#d79ac6" stroke-width="1.9"/><circle cx="405.58" cy="172.81" r="1.75" fill="#0c0c0c" /><circle cx="126.99" cy="172.81" r="2.7" fill="none" stroke="#1f8fae" stroke-width="1.9"/><circle cx="126.99" cy="172.81" r="1.75" fill="#9fce3a" /><circle cx="291.05" cy="156.31" r="2.7" fill="none" stroke="#1f8fae" stroke-width="1.9"/><circle cx="291.05" cy="156.31" r="1.75" fill="#9fce3a" /><circle cx="194.03" cy="172.81" r="2.7" fill="none" stroke="#8a3bd0" stroke-width="1.9"/><circle cx="194.03" cy="172.81" r="1.75" fill="#b38a2e" /><circle cx="220.27" cy="171.47" r="2.7" fill="none" stroke="#8a3bd0" stroke-width="1.9"/><circle cx="220.27" cy="171.47" r="1.75" fill="#b38a2e" /><circle cx="252.85" cy="171.47" r="2.7" fill="none" stroke="#8c8c8c" stroke-width="1.9"/><circle cx="252.85" cy="171.47" r="1.75" fill="#7a4018" /><circle cx="339.22" cy="156.64" r="2.7" fill="none" stroke="#8c8c8c" stroke-width="1.9"/><circle cx="339.22" cy="156.64" r="1.75" fill="#7a4018" /><circle cx="269.49" cy="82.1" r="2.7" fill="none" stroke="#3f86e0" stroke-width="1.9"/><circle cx="269.49" cy="82.1" r="1.75" fill="#b38a2e" /><circle cx="285.96" cy="171.47" r="2.7" fill="none" stroke="#3f86e0" stroke-width="1.9"/><circle cx="285.96" cy="171.47" r="1.75" fill="#b38a2e" /><circle cx="318.54" cy="171.47" r="2.7" fill="none" stroke="#1f8fae" stroke-width="1.9"/><circle cx="318.54" cy="171.47" r="1.75" fill="#b38a2e" /><circle cx="350" cy="156.64" r="2.7" fill="none" stroke="#1f8fae" stroke-width="1.9"/><circle cx="350" cy="156.64" r="1.75" fill="#b38a2e" /><circle cx="339.22" cy="140.48" r="2.7" fill="none" stroke="#8c8c8c" stroke-width="1.9"/><circle cx="339.22" cy="140.48" r="1.75" fill="#0c0c0c" /><circle cx="427.14" cy="172.81" r="2.7" fill="none" stroke="#8c8c8c" stroke-width="1.9"/><circle cx="427.14" cy="172.81" r="1.75" fill="#0c0c0c" /><circle cx="350" cy="140.48" r="2.7" fill="none" stroke="#3f86e0" stroke-width="1.9"/><circle cx="350" cy="140.48" r="1.75" fill="#0c0c0c" /><circle cx="472.62" cy="172.81" r="2.7" fill="none" stroke="#3f86e0" stroke-width="1.9"/><circle cx="472.62" cy="172.81" r="1.75" fill="#0c0c0c" /><circle cx="360.78" cy="140.48" r="2.7" fill="none" stroke="#8a3bd0" stroke-width="1.9"/><circle cx="360.78" cy="140.48" r="1.75" fill="#0c0c0c" /><circle cx="518.1" cy="172.81" r="2.7" fill="none" stroke="#8a3bd0" stroke-width="1.9"/><circle cx="518.1" cy="172.81" r="1.75" fill="#0c0c0c" /><circle cx="360.78" cy="156.64" r="2.7" fill="none" stroke="#8a3bd0" stroke-width="1.9"/><circle cx="360.78" cy="156.64" r="1.75" fill="#0c0c0c" /><circle cx="571.49" cy="73" r="2.7" fill="none" stroke="#8a3bd0" stroke-width="1.9"/><circle cx="571.49" cy="73" r="1.75" fill="#0c0c0c" /><circle cx="371.56" cy="124.14" r="2.7" fill="none" stroke="#1f8fae" stroke-width="1.9"/><circle cx="371.56" cy="124.14" r="1.75" fill="#0c0c0c" /><circle cx="529.38" cy="73" r="2.7" fill="none" stroke="#1f8fae" stroke-width="1.9"/><circle cx="529.38" cy="73" r="1.75" fill="#0c0c0c" /><circle cx="149.23" cy="428.81" r="2.7" fill="none" stroke="#19a86a" stroke-width="1.9"/><circle cx="149.23" cy="428.81" r="1.75" fill="#9fce3a" /><circle cx="167.59" cy="361.71" r="2.7" fill="none" stroke="#19a86a" stroke-width="1.9"/><circle cx="167.59" cy="361.71" r="1.75" fill="#9fce3a" /><circle cx="235.13" cy="428.81" r="2.7" fill="none" stroke="#e5a532" stroke-width="1.9"/><circle cx="235.13" cy="428.81" r="1.75" fill="#b38a2e" /><circle cx="384.7" cy="412.64" r="2.7" fill="none" stroke="#e5a532" stroke-width="1.9"/><circle cx="384.7" cy="412.64" r="1.75" fill="#b38a2e" /><circle cx="280.61" cy="428.81" r="2.7" fill="none" stroke="#19a86a" stroke-width="1.9"/><circle cx="280.61" cy="428.81" r="1.75" fill="#b38a2e" /><circle cx="395.48" cy="412.64" r="2.7" fill="none" stroke="#19a86a" stroke-width="1.9"/><circle cx="395.48" cy="412.64" r="1.75" fill="#b38a2e" /><circle cx="326.08" cy="428.81" r="2.7" fill="none" stroke="#8a3bd0" stroke-width="1.9"/><circle cx="326.08" cy="428.81" r="1.75" fill="#b38a2e" /><circle cx="417.04" cy="412.64" r="2.7" fill="none" stroke="#8a3bd0" stroke-width="1.9"/><circle cx="417.04" cy="412.64" r="1.75" fill="#b38a2e" /><circle cx="371.56" cy="428.81" r="2.7" fill="none" stroke="#3f86e0" stroke-width="1.9"/><circle cx="371.56" cy="428.81" r="1.75" fill="#b38a2e" /><circle cx="406.26" cy="412.64" r="2.7" fill="none" stroke="#3f86e0" stroke-width="1.9"/><circle cx="406.26" cy="412.64" r="1.75" fill="#b38a2e" /><circle cx="705.06" cy="428.81" r="2.7" fill="none" stroke="#3f86e0" stroke-width="1.9"/><circle cx="705.06" cy="428.81" r="1.75" fill="#0c0c0c" /><circle cx="384.7" cy="396.48" r="2.7" fill="none" stroke="#3f86e0" stroke-width="1.9"/><circle cx="384.7" cy="396.48" r="1.75" fill="#0c0c0c" /><circle cx="705.06" cy="428.81" r="2.7" fill="none" stroke="#d2364a" stroke-width="1.9"/><circle cx="705.06" cy="428.81" r="1.75" fill="#0c0c0c" /><circle cx="395.48" cy="396.48" r="2.7" fill="none" stroke="#d2364a" stroke-width="1.9"/><circle cx="395.48" cy="396.48" r="1.75" fill="#0c0c0c" /><circle cx="705.06" cy="428.81" r="2.7" fill="none" stroke="#e5a532" stroke-width="1.9"/><circle cx="705.06" cy="428.81" r="1.75" fill="#0c0c0c" /><circle cx="406.26" cy="396.48" r="2.7" fill="none" stroke="#e5a532" stroke-width="1.9"/><circle cx="406.26" cy="396.48" r="1.75" fill="#0c0c0c" /><circle cx="705.06" cy="428.81" r="2.7" fill="none" stroke="#19a86a" stroke-width="1.9"/><circle cx="705.06" cy="428.81" r="1.75" fill="#0c0c0c" /><circle cx="417.04" cy="396.48" r="2.7" fill="none" stroke="#19a86a" stroke-width="1.9"/><circle cx="417.04" cy="396.48" r="1.75" fill="#0c0c0c" /><circle cx="705.06" cy="428.81" r="2.7" fill="none" stroke="#8a3bd0" stroke-width="1.9"/><circle cx="705.06" cy="428.81" r="1.75" fill="#0c0c0c" /><circle cx="491.49" cy="396.48" r="2.7" fill="none" stroke="#8a3bd0" stroke-width="1.9"/><circle cx="491.49" cy="396.48" r="1.75" fill="#0c0c0c" /><circle cx="417.04" cy="380.14" r="2.7" fill="none" stroke="#d2364a" stroke-width="1.9"/><circle cx="417.04" cy="380.14" r="1.75" fill="#0c0c0c" /><circle cx="432.5" cy="427.47" r="2.7" fill="none" stroke="#d2364a" stroke-width="1.9"/><circle cx="432.5" cy="427.47" r="1.75" fill="#0c0c0c" /><circle cx="465.08" cy="427.47" r="2.7" fill="none" stroke="#e5a532" stroke-width="1.9"/><circle cx="465.08" cy="427.47" r="1.75" fill="#0c0c0c" /><circle cx="480.71" cy="412.64" r="2.7" fill="none" stroke="#e5a532" stroke-width="1.9"/><circle cx="480.71" cy="412.64" r="1.75" fill="#0c0c0c" /><circle cx="513.05" cy="380.14" r="2.7" fill="none" stroke="#d2364a" stroke-width="1.9"/><circle cx="513.05" cy="380.14" r="1.75" fill="#0c0c0c" /><circle cx="528.51" cy="427.47" r="2.7" fill="none" stroke="#d2364a" stroke-width="1.9"/><circle cx="528.51" cy="427.47" r="1.75" fill="#0c0c0c" /><circle cx="513.05" cy="380.14" r="2.7" fill="none" stroke="#3f86e0" stroke-width="1.9"/><circle cx="513.05" cy="380.14" r="1.75" fill="#0c0c0c" /><circle cx="610.23" cy="329" r="2.7" fill="none" stroke="#3f86e0" stroke-width="1.9"/><circle cx="610.23" cy="329" r="1.75" fill="#0c0c0c" /><circle cx="561.08" cy="427.47" r="2.7" fill="none" stroke="#e5a532" stroke-width="1.9"/><circle cx="561.08" cy="427.47" r="1.75" fill="#0c0c0c" /><circle cx="603.02" cy="284.64" r="2.7" fill="none" stroke="#e5a532" stroke-width="1.9"/><circle cx="603.02" cy="284.64" r="1.75" fill="#0c0c0c" /><circle cx="561.08" cy="427.47" r="2.7" fill="none" stroke="#d2364a" stroke-width="1.9"/><circle cx="561.08" cy="427.47" r="1.75" fill="#0c0c0c" /><circle cx="665.45" cy="203.59" r="2.7" fill="none" stroke="#d2364a" stroke-width="1.9"/><circle cx="665.45" cy="203.59" r="1.75" fill="#0c0c0c" /><circle cx="561.08" cy="427.47" r="2.7" fill="none" stroke="#d2364a" stroke-width="1.9"/><circle cx="561.08" cy="427.47" r="1.75" fill="#0c0c0c" /><circle cx="652.85" cy="203.59" r="2.7" fill="none" stroke="#d2364a" stroke-width="1.9"/><circle cx="652.85" cy="203.59" r="1.75" fill="#0c0c0c" /><circle cx="652.34" cy="329" r="2.7" fill="none" stroke="#8a3bd0" stroke-width="1.9"/><circle cx="652.34" cy="329" r="1.75" fill="#0c0c0c" /><circle cx="491.49" cy="412.64" r="2.7" fill="none" stroke="#8a3bd0" stroke-width="1.9"/><circle cx="491.49" cy="412.64" r="1.75" fill="#0c0c0c" /><circle cx="100.14" cy="124.31" r="2.7" fill="#0c0c0c" stroke="#d2364a" stroke-width="1.9"/><circle cx="705.06" cy="428.81" r="2.7" fill="#0c0c0c" stroke="#8a3bd0" stroke-width="1.9"/><circle cx="561.08" cy="427.47" r="2.7" fill="#0c0c0c" stroke="#d2364a" stroke-width="1.9"/><circle cx="513.05" cy="380.14" r="2.7" fill="#0c0c0c" stroke="#3f86e0" stroke-width="1.9"/></g>
<rect x="865.6" y="48" width="6.4" height="452" rx="0" fill="#3a3a3a" opacity=".62"/>
<rect x="28" y="500" width="844" height="6.4" rx="0" fill="#3a3a3a" opacity=".62"/>
<rect x="865.9" y="198.4" width="5.8" height="169.1" rx="2.9" fill="#fff" opacity=".2"/>
<rect x="304.3" y="500.2" width="327" height="5.9" rx="2.95" fill="#fff" opacity=".22"/>
</svg>
<div class="title"><div class="tl" style="left:4.0px;background:#ed6a5e"></div><div class="tl" style="left:14.0px;background:#f4bf4f"></div><div class="tl" style="left:24.0px;background:#61c554"></div><div class="t">VCV Rack Free 2.5.2 - OH Test sound version 2.1.vcv</div></div>
<div class="menu"><span style="left:6.6px">File</span><span style="left:25.1px">Edit</span><span style="left:45.2px">View</span><span style="left:67.8px">Engine</span><span style="left:96.1px">Library</span><span style="left:124.6px">Help</span>
<span class="r" style="left:647.9px">29.4 fps</span><span class="r" style="left:673.6px">20.6% avg</span><span class="r" style="left:706.6px">30.3% max</span><span class="r" style="left:746.9px">VCV Rack Free 2.5.2 macOS x64</span></div>
</div>
</body></html>
